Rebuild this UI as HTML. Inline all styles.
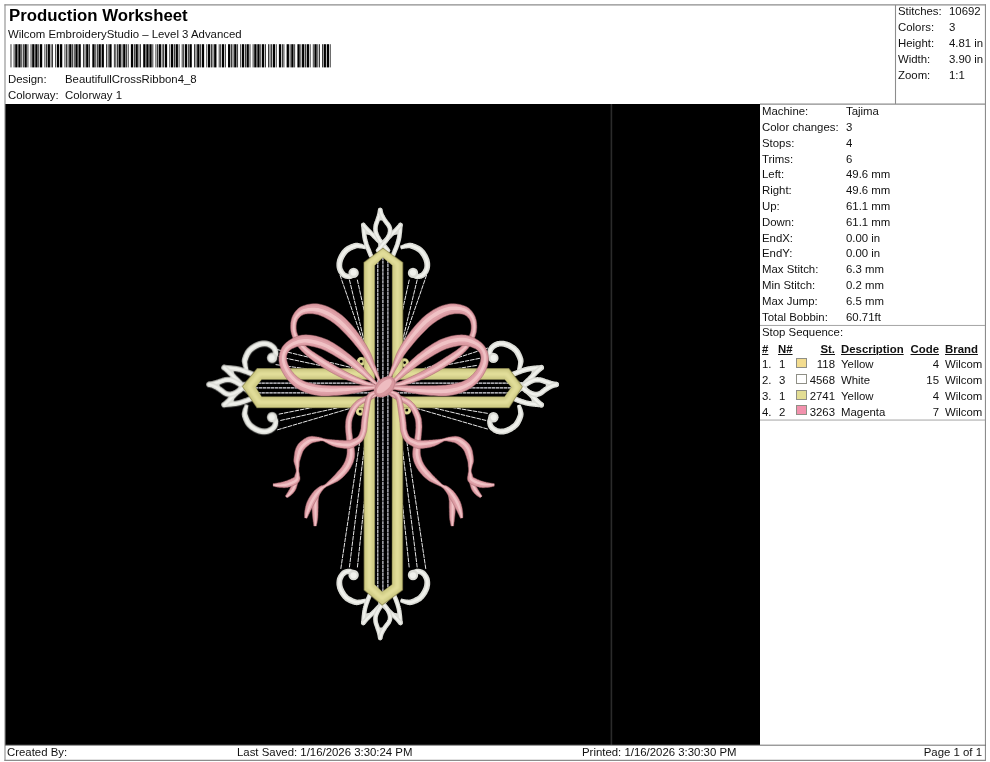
<!DOCTYPE html>
<html><head><meta charset="utf-8"><title>Production Worksheet</title>
<style>
html,body{margin:0;padding:0;background:#fff;}
html{width:990px;height:762px;overflow:hidden;}
body{width:990px;height:762px;position:relative;overflow:hidden;font-family:"Liberation Sans",sans-serif;color:#111;}
.t{position:absolute;will-change:transform;-webkit-font-smoothing:antialiased;font-size:11.4px;line-height:20px;height:20px;white-space:nowrap;letter-spacing:0;}
.t.r{width:200px;text-align:right;}
.t.title{font-size:16.8px;font-weight:bold;color:#000;}
.t.b{font-weight:bold;}
.t.u{text-decoration:underline;text-decoration-thickness:1px;text-underline-offset:1px;}
.ln{position:absolute;background:#8a8a8a;}
.sw{position:absolute;width:8.8px;height:8px;border:1px solid #8f8f86;}
#black{position:absolute;left:5px;top:104px;width:755px;height:641px;background:#000;}
svg{position:absolute;left:0;top:0;}
</style></head><body>
<div id="black"></div>
<svg width="990" height="762" viewBox="0 0 990 762">
<g fill="#000"><rect x="10.600" y="44.20" width="0.771" height="23.20"/><rect x="13.684" y="44.20" width="0.771" height="23.20"/><rect x="15.226" y="44.20" width="2.313" height="23.20"/><rect x="18.310" y="44.20" width="2.313" height="23.20"/><rect x="21.394" y="44.20" width="0.771" height="23.20"/><rect x="22.936" y="44.20" width="0.771" height="23.20"/><rect x="24.478" y="44.20" width="2.313" height="23.20"/><rect x="27.562" y="44.20" width="0.771" height="23.20"/><rect x="30.646" y="44.20" width="0.771" height="23.20"/><rect x="32.188" y="44.20" width="2.313" height="23.20"/><rect x="35.272" y="44.20" width="2.313" height="23.20"/><rect x="38.356" y="44.20" width="0.771" height="23.20"/><rect x="39.898" y="44.20" width="2.313" height="23.20"/><rect x="44.524" y="44.20" width="0.771" height="23.20"/><rect x="46.066" y="44.20" width="0.771" height="23.20"/><rect x="47.608" y="44.20" width="2.313" height="23.20"/><rect x="50.692" y="44.20" width="0.771" height="23.20"/><rect x="52.234" y="44.20" width="0.771" height="23.20"/><rect x="55.318" y="44.20" width="0.771" height="23.20"/><rect x="56.860" y="44.20" width="2.313" height="23.20"/><rect x="59.944" y="44.20" width="2.313" height="23.20"/><rect x="64.570" y="44.20" width="0.771" height="23.20"/><rect x="66.112" y="44.20" width="0.771" height="23.20"/><rect x="67.654" y="44.20" width="0.771" height="23.20"/><rect x="69.196" y="44.20" width="2.313" height="23.20"/><rect x="72.280" y="44.20" width="0.771" height="23.20"/><rect x="73.822" y="44.20" width="0.771" height="23.20"/><rect x="75.364" y="44.20" width="2.313" height="23.20"/><rect x="78.448" y="44.20" width="2.313" height="23.20"/><rect x="83.074" y="44.20" width="0.771" height="23.20"/><rect x="84.616" y="44.20" width="0.771" height="23.20"/><rect x="86.158" y="44.20" width="2.313" height="23.20"/><rect x="89.242" y="44.20" width="0.771" height="23.20"/><rect x="92.326" y="44.20" width="2.313" height="23.20"/><rect x="95.410" y="44.20" width="0.771" height="23.20"/><rect x="96.952" y="44.20" width="0.771" height="23.20"/><rect x="98.494" y="44.20" width="2.313" height="23.20"/><rect x="101.578" y="44.20" width="2.313" height="23.20"/><rect x="106.204" y="44.20" width="0.771" height="23.20"/><rect x="107.746" y="44.20" width="0.771" height="23.20"/><rect x="109.288" y="44.20" width="2.313" height="23.20"/><rect x="113.914" y="44.20" width="0.771" height="23.20"/><rect x="115.456" y="44.20" width="0.771" height="23.20"/><rect x="116.998" y="44.20" width="0.771" height="23.20"/><rect x="118.540" y="44.20" width="2.313" height="23.20"/><rect x="121.624" y="44.20" width="0.771" height="23.20"/><rect x="123.166" y="44.20" width="2.313" height="23.20"/><rect x="126.250" y="44.20" width="0.771" height="23.20"/><rect x="127.792" y="44.20" width="0.771" height="23.20"/><rect x="130.876" y="44.20" width="2.313" height="23.20"/><rect x="133.960" y="44.20" width="0.771" height="23.20"/><rect x="135.502" y="44.20" width="2.313" height="23.20"/><rect x="138.586" y="44.20" width="0.771" height="23.20"/><rect x="140.128" y="44.20" width="0.771" height="23.20"/><rect x="143.212" y="44.20" width="2.313" height="23.20"/><rect x="146.296" y="44.20" width="2.313" height="23.20"/><rect x="149.380" y="44.20" width="2.313" height="23.20"/><rect x="152.464" y="44.20" width="0.771" height="23.20"/><rect x="155.548" y="44.20" width="0.771" height="23.20"/><rect x="157.090" y="44.20" width="0.771" height="23.20"/><rect x="158.632" y="44.20" width="2.313" height="23.20"/><rect x="161.716" y="44.20" width="0.771" height="23.20"/><rect x="163.258" y="44.20" width="0.771" height="23.20"/><rect x="164.800" y="44.20" width="2.313" height="23.20"/><rect x="169.426" y="44.20" width="0.771" height="23.20"/><rect x="170.968" y="44.20" width="2.313" height="23.20"/><rect x="174.052" y="44.20" width="0.771" height="23.20"/><rect x="175.594" y="44.20" width="2.313" height="23.20"/><rect x="178.678" y="44.20" width="0.771" height="23.20"/><rect x="181.762" y="44.20" width="0.771" height="23.20"/><rect x="183.304" y="44.20" width="0.771" height="23.20"/><rect x="184.846" y="44.20" width="2.313" height="23.20"/><rect x="187.930" y="44.20" width="0.771" height="23.20"/><rect x="189.472" y="44.20" width="2.313" height="23.20"/><rect x="194.098" y="44.20" width="0.771" height="23.20"/><rect x="195.640" y="44.20" width="0.771" height="23.20"/><rect x="197.182" y="44.20" width="2.313" height="23.20"/><rect x="200.266" y="44.20" width="0.771" height="23.20"/><rect x="201.808" y="44.20" width="2.313" height="23.20"/><rect x="206.434" y="44.20" width="0.771" height="23.20"/><rect x="207.976" y="44.20" width="2.313" height="23.20"/><rect x="211.060" y="44.20" width="0.771" height="23.20"/><rect x="212.602" y="44.20" width="0.771" height="23.20"/><rect x="214.144" y="44.20" width="2.313" height="23.20"/><rect x="218.770" y="44.20" width="0.771" height="23.20"/><rect x="220.312" y="44.20" width="0.771" height="23.20"/><rect x="221.854" y="44.20" width="2.313" height="23.20"/><rect x="224.938" y="44.20" width="0.771" height="23.20"/><rect x="228.022" y="44.20" width="2.313" height="23.20"/><rect x="231.106" y="44.20" width="0.771" height="23.20"/><rect x="232.648" y="44.20" width="0.771" height="23.20"/><rect x="234.190" y="44.20" width="2.313" height="23.20"/><rect x="237.274" y="44.20" width="0.771" height="23.20"/><rect x="240.358" y="44.20" width="0.771" height="23.20"/><rect x="241.900" y="44.20" width="2.313" height="23.20"/><rect x="244.984" y="44.20" width="0.771" height="23.20"/><rect x="246.526" y="44.20" width="2.313" height="23.20"/><rect x="249.610" y="44.20" width="0.771" height="23.20"/><rect x="252.694" y="44.20" width="0.771" height="23.20"/><rect x="254.236" y="44.20" width="2.313" height="23.20"/><rect x="257.320" y="44.20" width="2.313" height="23.20"/><rect x="260.404" y="44.20" width="0.771" height="23.20"/><rect x="261.946" y="44.20" width="2.313" height="23.20"/><rect x="265.030" y="44.20" width="0.771" height="23.20"/><rect x="268.114" y="44.20" width="0.771" height="23.20"/><rect x="269.656" y="44.20" width="0.771" height="23.20"/><rect x="271.198" y="44.20" width="0.771" height="23.20"/><rect x="272.740" y="44.20" width="2.313" height="23.20"/><rect x="275.824" y="44.20" width="0.771" height="23.20"/><rect x="278.908" y="44.20" width="2.313" height="23.20"/><rect x="281.992" y="44.20" width="0.771" height="23.20"/><rect x="283.534" y="44.20" width="0.771" height="23.20"/><rect x="286.618" y="44.20" width="2.313" height="23.20"/><rect x="289.702" y="44.20" width="0.771" height="23.20"/><rect x="291.244" y="44.20" width="2.313" height="23.20"/><rect x="294.328" y="44.20" width="0.771" height="23.20"/><rect x="297.412" y="44.20" width="2.313" height="23.20"/><rect x="300.496" y="44.20" width="0.771" height="23.20"/><rect x="302.038" y="44.20" width="2.313" height="23.20"/><rect x="305.122" y="44.20" width="0.771" height="23.20"/><rect x="306.664" y="44.20" width="2.313" height="23.20"/><rect x="309.748" y="44.20" width="0.771" height="23.20"/><rect x="312.832" y="44.20" width="0.771" height="23.20"/><rect x="314.374" y="44.20" width="2.313" height="23.20"/><rect x="317.458" y="44.20" width="0.771" height="23.20"/><rect x="319.000" y="44.20" width="0.771" height="23.20"/><rect x="322.084" y="44.20" width="0.771" height="23.20"/><rect x="323.626" y="44.20" width="2.313" height="23.20"/><rect x="326.710" y="44.20" width="2.313" height="23.20"/><rect x="329.794" y="44.20" width="0.771" height="23.20"/></g>
<rect x="610.6" y="104" width="1.6" height="641" fill="#2b2b2b"/>
<g stroke="#8c8c8c" stroke-width="1.1" fill="none">
<path d="M4.4 4.85H986"/><path d="M5 4.4V761"/><path d="M985.45 4.4V761"/><path d="M4.4 760.4H986"/>
<path d="M895.5 5V104"/><path d="M760 104.15H986"/>
</g>
<path d="M5 745.2H986" stroke="#6e6e6e" stroke-width="1"/>
<path d="M760 325.45H985M760 420.05H985" stroke="#a4a4a4" stroke-width="1"/>
<defs><filter id="soft" x="-5%" y="-5%" width="110%" height="110%"><feGaussianBlur stdDeviation="0.5"/></filter><filter id="sheen" x="-5%" y="-5%" width="110%" height="110%"><feGaussianBlur stdDeviation="1.1"/></filter></defs>
<g filter="url(#soft)">
<path d="M340.0 275.0 L372.0 367.7 M349.4 279.7 L370.0 365.5 M357.3 279.7 L372.0 346.0 M426.6 275.0 L394.6 367.7 M417.2 279.7 L396.6 365.5 M409.3 279.7 L394.6 346.0 M277.2 349.6 L366.0 371.1 M278.7 356.7 L366.0 375.2 M275.6 364.6 L335.0 372.7 M278.7 414.2 L335.0 403.0 M280.3 420.5 L366.0 401.6 M277.2 429.9 L366.0 403.7 M487.8 348.0 L400.0 376.2 M479.9 358.3 L400.0 374.2 M476.8 365.4 L430.0 373.0 M487.8 429.1 L400.0 403.5 M486.2 420.5 L400.0 399.8 M487.8 413.4 L430.0 403.8 M340.8 568.9 L364.2 412.0 M349.4 567.4 L368.8 412.0 M357.4 567.4 L373.9 412.0 M425.8 568.9 L402.4 412.0 M417.2 567.4 L397.8 412.0 M409.2 567.4 L392.7 412.0" stroke="#e6e6e6" stroke-width="1.0" fill="none" stroke-dasharray="4.6 0.8"/>
<g><path d="M366.5 245.8 L366.2 245.6 L365.8 245.5 L365.2 245.2 L364.6 245.0 L364.0 244.7 L363.3 244.4 L362.5 244.1 L361.8 243.8 L361.1 243.6 L360.4 243.4 L359.9 243.3 L359.4 243.2 L358.9 243.0 L358.4 242.9 L357.8 242.8 L357.1 242.7 L356.4 242.7 L355.6 242.8 L354.8 242.9 L353.9 243.1 L353.1 243.4 L352.2 243.7 L351.2 244.1 L350.2 244.5 L349.1 245.0 L348.1 245.5 L347.0 246.1 L345.9 246.7 L344.9 247.5 L344.0 248.3 L343.1 249.2 L342.3 250.1 L341.5 251.1 L340.8 252.1 L340.1 253.2 L339.4 254.2 L338.9 255.3 L338.3 256.4 L337.9 257.4 L337.5 258.5 L337.1 259.5 L336.9 260.6 L336.7 261.6 L336.5 262.6 L336.4 263.7 L336.4 264.7 L336.4 265.7 L336.5 266.7 L336.6 267.7 L336.8 268.6 L337.0 269.6 L337.4 270.6 L337.8 271.5 L338.2 272.4 L338.7 273.2 L339.3 274.0 L339.8 274.7 L340.4 275.4 L341.0 276.1 L341.6 276.7 L342.4 277.3 L343.1 277.7 L343.9 278.1 L344.7 278.4 L345.4 278.7 L346.2 278.8 L346.9 279.0 L347.5 279.1 L348.2 279.1 L348.8 279.2 L349.5 279.2 L350.3 279.1 L351.0 278.9 L351.6 278.7 L352.1 278.5 L352.6 278.3 L353.0 278.1 L353.3 278.0 L353.5 277.9 L353.7 277.8 L352.3 273.4 L352.0 273.5 L351.6 273.6 L351.3 273.7 L350.9 273.8 L350.6 273.9 L350.2 274.0 L349.9 274.0 L349.6 274.1 L349.4 274.0 L349.2 274.0 L348.8 273.9 L348.4 273.9 L347.9 273.7 L347.5 273.6 L347.0 273.5 L346.6 273.3 L346.2 273.1 L345.9 272.9 L345.6 272.7 L345.4 272.5 L345.1 272.2 L344.7 271.8 L344.3 271.3 L343.9 270.8 L343.6 270.2 L343.3 269.6 L343.0 269.0 L342.7 268.5 L342.6 267.9 L342.4 267.4 L342.3 266.8 L342.3 266.2 L342.2 265.5 L342.3 264.8 L342.3 264.1 L342.4 263.4 L342.5 262.7 L342.7 262.0 L342.9 261.2 L343.1 260.5 L343.4 259.8 L343.8 258.9 L344.2 258.1 L344.7 257.2 L345.2 256.3 L345.8 255.5 L346.3 254.7 L346.9 253.9 L347.5 253.3 L348.0 252.7 L348.6 252.2 L349.3 251.7 L350.1 251.2 L350.9 250.8 L351.7 250.3 L352.6 249.9 L353.4 249.5 L354.3 249.2 L355.0 248.9 L355.7 248.7 L356.2 248.5 L356.5 248.4 L356.8 248.3 L357.1 248.3 L357.4 248.2 L357.7 248.2 L358.0 248.2 L358.5 248.3 L359.0 248.3 L359.6 248.4 L360.1 248.4 L360.7 248.5 L361.3 248.6 L362.0 248.7 L362.7 248.8 L363.4 249.0 L364.0 249.1 L364.6 249.2 L365.1 249.3 L365.5 249.4Z" fill="#dadbd5"/>
<path d="M366.2 246.8 L365.9 246.7 L365.4 246.5 L364.9 246.3 L364.3 246.1 L363.6 245.8 L362.9 245.6 L362.2 245.3 L361.5 245.1 L360.8 244.9 L360.2 244.8 L359.7 244.7 L359.2 244.6 L358.7 244.5 L358.2 244.4 L357.7 244.3 L357.1 244.2 L356.5 244.2 L355.8 244.3 L355.1 244.5 L354.4 244.7 L353.6 244.9 L352.8 245.2 L351.8 245.6 L350.9 246.0 L349.9 246.4 L348.8 246.9 L347.8 247.5 L346.9 248.1 L345.9 248.8 L345.1 249.5 L344.3 250.3 L343.5 251.2 L342.8 252.1 L342.1 253.0 L341.5 254.0 L340.9 255.1 L340.3 256.1 L339.8 257.1 L339.4 258.1 L339.0 259.0 L338.7 260.0 L338.5 260.9 L338.3 261.9 L338.1 262.9 L338.0 263.8 L338.0 264.7 L338.0 265.7 L338.1 266.5 L338.2 267.4 L338.3 268.3 L338.6 269.1 L338.9 270.0 L339.2 270.8 L339.6 271.6 L340.1 272.4 L340.5 273.1 L341.1 273.8 L341.6 274.4 L342.1 275.0 L342.7 275.5 L343.3 276.0 L343.9 276.4 L344.6 276.8 L345.2 277.0 L345.9 277.2 L346.5 277.4 L347.2 277.5 L347.8 277.6 L348.4 277.7 L348.9 277.8 L349.5 277.8 L350.1 277.7 L350.7 277.6 L351.2 277.4 L351.7 277.3 L352.1 277.1 L352.5 276.9 L352.9 276.8 L353.1 276.7 L353.3 276.6 L352.7 274.6 L352.4 274.7 L352.1 274.8 L351.7 274.9 L351.4 275.1 L351.0 275.2 L350.6 275.3 L350.2 275.4 L349.8 275.4 L349.4 275.5 L349.1 275.4 L348.7 275.4 L348.2 275.3 L347.6 275.2 L347.1 275.1 L346.6 274.9 L346.1 274.7 L345.6 274.5 L345.1 274.3 L344.7 274.0 L344.3 273.7 L343.9 273.3 L343.5 272.8 L343.1 272.2 L342.7 271.7 L342.3 271.0 L341.9 270.4 L341.6 269.7 L341.3 269.0 L341.0 268.4 L340.9 267.7 L340.8 267.0 L340.7 266.3 L340.6 265.6 L340.6 264.8 L340.7 264.0 L340.8 263.2 L340.9 262.4 L341.1 261.6 L341.3 260.8 L341.6 260.0 L341.9 259.1 L342.3 258.2 L342.7 257.3 L343.3 256.4 L343.8 255.5 L344.4 254.6 L345.0 253.7 L345.6 252.9 L346.3 252.1 L346.9 251.5 L347.6 250.9 L348.4 250.3 L349.2 249.8 L350.1 249.3 L351.0 248.8 L351.9 248.4 L352.8 248.0 L353.7 247.7 L354.5 247.4 L355.2 247.1 L355.8 247.0 L356.3 246.8 L356.7 246.8 L357.1 246.7 L357.5 246.7 L357.9 246.8 L358.3 246.8 L358.8 246.9 L359.3 246.9 L359.8 247.0 L360.4 247.1 L361.0 247.2 L361.7 247.3 L362.3 247.5 L363.0 247.7 L363.7 247.9 L364.3 248.0 L364.9 248.2 L365.4 248.3 L365.8 248.4Z" fill="#f0f1ec"/>
<circle cx="353.6" cy="272.9" r="5.2" fill="#dadbd5"/>
<circle cx="353.6" cy="272.6" r="3.1" fill="#f0f1ec"/>
<path d="M401.1 249.4 L401.5 249.3 L402.0 249.2 L402.6 249.1 L403.2 249.0 L403.9 248.8 L404.6 248.7 L405.3 248.6 L405.9 248.5 L406.5 248.4 L407.0 248.4 L407.6 248.3 L408.1 248.3 L408.6 248.2 L408.9 248.2 L409.2 248.2 L409.5 248.3 L409.8 248.3 L410.1 248.4 L410.4 248.5 L410.9 248.7 L411.6 248.9 L412.3 249.2 L413.2 249.5 L414.0 249.9 L414.9 250.3 L415.7 250.8 L416.5 251.2 L417.3 251.7 L418.0 252.2 L418.6 252.7 L419.1 253.3 L419.7 253.9 L420.3 254.7 L420.8 255.5 L421.4 256.3 L421.9 257.2 L422.4 258.1 L422.8 258.9 L423.2 259.8 L423.5 260.5 L423.7 261.2 L423.9 262.0 L424.1 262.7 L424.2 263.4 L424.3 264.1 L424.3 264.8 L424.4 265.5 L424.3 266.2 L424.3 266.8 L424.2 267.4 L424.0 267.9 L423.9 268.5 L423.6 269.0 L423.3 269.6 L423.0 270.2 L422.7 270.8 L422.3 271.3 L421.9 271.8 L421.5 272.2 L421.2 272.5 L421.0 272.7 L420.7 272.9 L420.4 273.1 L420.0 273.3 L419.6 273.5 L419.1 273.6 L418.7 273.7 L418.2 273.9 L417.8 273.9 L417.4 274.0 L417.2 274.0 L417.0 274.1 L416.7 274.0 L416.4 274.0 L416.0 273.9 L415.7 273.8 L415.3 273.7 L415.0 273.6 L414.6 273.5 L414.3 273.4 L412.9 277.8 L413.1 277.9 L413.3 278.0 L413.6 278.1 L414.0 278.3 L414.5 278.5 L415.0 278.7 L415.6 278.9 L416.3 279.1 L417.1 279.2 L417.8 279.2 L418.4 279.1 L419.1 279.1 L419.7 279.0 L420.4 278.8 L421.2 278.7 L421.9 278.4 L422.7 278.1 L423.5 277.7 L424.2 277.3 L425.0 276.7 L425.6 276.1 L426.2 275.4 L426.8 274.7 L427.3 274.0 L427.9 273.2 L428.4 272.4 L428.8 271.5 L429.2 270.6 L429.6 269.6 L429.8 268.6 L430.0 267.7 L430.1 266.7 L430.2 265.7 L430.2 264.7 L430.2 263.7 L430.1 262.6 L429.9 261.6 L429.7 260.6 L429.5 259.5 L429.1 258.5 L428.7 257.4 L428.3 256.4 L427.7 255.3 L427.2 254.2 L426.5 253.2 L425.8 252.1 L425.1 251.1 L424.3 250.1 L423.5 249.2 L422.6 248.3 L421.7 247.5 L420.7 246.7 L419.6 246.1 L418.5 245.5 L417.5 245.0 L416.4 244.5 L415.4 244.1 L414.4 243.7 L413.5 243.4 L412.7 243.1 L411.8 242.9 L411.0 242.8 L410.2 242.7 L409.5 242.7 L408.8 242.8 L408.2 242.9 L407.7 243.0 L407.2 243.2 L406.7 243.3 L406.2 243.4 L405.5 243.6 L404.8 243.8 L404.1 244.1 L403.3 244.4 L402.6 244.7 L402.0 245.0 L401.4 245.2 L400.8 245.5 L400.4 245.6 L400.1 245.8Z" fill="#dadbd5"/>
<path d="M400.8 248.4 L401.2 248.3 L401.7 248.2 L402.3 248.0 L402.9 247.9 L403.6 247.7 L404.3 247.5 L404.9 247.3 L405.6 247.2 L406.2 247.1 L406.8 247.0 L407.3 246.9 L407.8 246.9 L408.3 246.8 L408.7 246.8 L409.1 246.7 L409.5 246.7 L409.9 246.8 L410.3 246.8 L410.8 247.0 L411.4 247.1 L412.1 247.4 L412.9 247.7 L413.8 248.0 L414.7 248.4 L415.6 248.8 L416.5 249.3 L417.4 249.8 L418.2 250.3 L419.0 250.9 L419.7 251.5 L420.3 252.1 L421.0 252.9 L421.6 253.7 L422.2 254.6 L422.8 255.5 L423.3 256.4 L423.9 257.3 L424.3 258.2 L424.7 259.1 L425.0 260.0 L425.3 260.8 L425.5 261.6 L425.7 262.4 L425.8 263.2 L425.9 264.0 L426.0 264.8 L426.0 265.6 L425.9 266.3 L425.8 267.0 L425.7 267.7 L425.6 268.4 L425.3 269.0 L425.0 269.7 L424.7 270.4 L424.3 271.0 L423.9 271.7 L423.5 272.2 L423.1 272.8 L422.7 273.3 L422.3 273.7 L421.9 274.0 L421.5 274.3 L421.0 274.5 L420.5 274.7 L420.0 274.9 L419.5 275.1 L419.0 275.2 L418.4 275.3 L417.9 275.4 L417.5 275.4 L417.2 275.5 L416.8 275.4 L416.4 275.4 L416.0 275.3 L415.6 275.2 L415.2 275.1 L414.9 274.9 L414.5 274.8 L414.2 274.7 L413.9 274.6 L413.3 276.6 L413.5 276.7 L413.7 276.8 L414.1 276.9 L414.5 277.1 L414.9 277.3 L415.4 277.4 L415.9 277.6 L416.5 277.7 L417.1 277.8 L417.7 277.8 L418.2 277.7 L418.8 277.6 L419.4 277.5 L420.1 277.4 L420.7 277.2 L421.4 277.0 L422.0 276.8 L422.7 276.4 L423.3 276.0 L423.9 275.5 L424.5 275.0 L425.0 274.4 L425.5 273.8 L426.1 273.1 L426.5 272.4 L427.0 271.6 L427.4 270.8 L427.7 270.0 L428.0 269.1 L428.3 268.3 L428.4 267.4 L428.5 266.5 L428.6 265.7 L428.6 264.7 L428.6 263.8 L428.5 262.9 L428.3 261.9 L428.1 260.9 L427.9 260.0 L427.6 259.0 L427.2 258.1 L426.8 257.1 L426.3 256.1 L425.7 255.1 L425.1 254.0 L424.5 253.0 L423.8 252.1 L423.1 251.2 L422.3 250.3 L421.5 249.5 L420.7 248.8 L419.7 248.1 L418.8 247.5 L417.8 246.9 L416.7 246.4 L415.7 246.0 L414.8 245.6 L413.8 245.2 L413.0 244.9 L412.2 244.7 L411.5 244.5 L410.8 244.3 L410.1 244.2 L409.5 244.2 L408.9 244.3 L408.4 244.4 L407.9 244.5 L407.4 244.6 L406.9 244.7 L406.4 244.8 L405.8 244.9 L405.1 245.1 L404.4 245.3 L403.7 245.6 L403.0 245.8 L402.3 246.1 L401.7 246.3 L401.2 246.5 L400.7 246.7 L400.4 246.8Z" fill="#f0f1ec"/>
<circle cx="413.0" cy="272.9" r="5.2" fill="#dadbd5"/>
<circle cx="413.0" cy="272.6" r="3.1" fill="#f0f1ec"/>
<path d="M363.3 225.0 L364.2 234.1 L373.9 236.0 L367.5 229.7Z" fill="#dadbd5"/>
<path d="M400.5 225.0 L399.6 234.1 L389.9 236.0 L396.3 229.7Z" fill="#dadbd5"/>
<path d="M380.2 210.0 L379.2 215.0 L377.4 220.5 L385.0 220.5 L381.8 215.0Z" fill="#dadbd5"/>
<path d="M363.3 225.0 L363.4 225.7 L363.5 226.7 L363.6 227.9 L363.7 229.1 L363.8 230.5 L363.9 231.8 L364.1 233.0 L364.2 234.1 L364.3 235.0 L364.4 235.9 L364.5 236.7 L364.6 237.4 L364.8 238.2 L364.9 238.9 L365.1 239.7 L365.3 240.6 L365.6 241.5 L365.9 242.5 L366.2 243.5 L366.5 244.5 L366.9 245.6 L367.3 246.6 L367.6 247.6 L368.0 248.5 L368.4 249.4 L368.8 250.4 L369.2 251.4 L369.6 252.4 L370.0 253.3 L370.3 254.1 L370.6 254.8 L370.8 255.3" fill="none" stroke="#dadbd5" stroke-width="4.6" stroke-linecap="round" stroke-linejoin="round"/><path d="M363.3 225.0 L363.4 225.7 L363.5 226.7 L363.6 227.9 L363.7 229.1 L363.8 230.5 L363.9 231.8 L364.1 233.0 L364.2 234.1 L364.3 235.0 L364.4 235.9 L364.5 236.7 L364.6 237.4 L364.8 238.2 L364.9 238.9 L365.1 239.7 L365.3 240.6 L365.6 241.5 L365.9 242.5 L366.2 243.5 L366.5 244.5 L366.9 245.6 L367.3 246.6 L367.6 247.6 L368.0 248.5 L368.4 249.4 L368.8 250.4 L369.2 251.4 L369.6 252.4 L370.0 253.3 L370.3 254.1 L370.6 254.8 L370.8 255.3" fill="none" stroke="#f0f1ec" stroke-width="2.1" stroke-linecap="round"/>
<path d="M363.3 225.0 L363.6 225.4 L364.0 225.8 L364.5 226.3 L365.0 227.0 L365.6 227.6 L366.2 228.3 L366.8 229.0 L367.5 229.7 L368.2 230.4 L369.0 231.2 L369.8 232.0 L370.6 232.8 L371.4 233.6 L372.3 234.4 L373.1 235.2 L373.9 236.0 L374.7 236.8 L375.5 237.6 L376.3 238.4 L377.0 239.2 L377.8 240.0 L378.5 240.7 L379.2 241.4 L379.8 242.0 L380.4 242.6 L380.9 243.1 L381.5 243.5 L382.0 244.0 L382.4 244.4 L382.8 244.7 L383.1 245.0 L383.4 245.2" fill="none" stroke="#dadbd5" stroke-width="4.6" stroke-linecap="round" stroke-linejoin="round"/><path d="M363.3 225.0 L363.6 225.4 L364.0 225.8 L364.5 226.3 L365.0 227.0 L365.6 227.6 L366.2 228.3 L366.8 229.0 L367.5 229.7 L368.2 230.4 L369.0 231.2 L369.8 232.0 L370.6 232.8 L371.4 233.6 L372.3 234.4 L373.1 235.2 L373.9 236.0 L374.7 236.8 L375.5 237.6 L376.3 238.4 L377.0 239.2 L377.8 240.0 L378.5 240.7 L379.2 241.4 L379.8 242.0 L380.4 242.6 L380.9 243.1 L381.5 243.5 L382.0 244.0 L382.4 244.4 L382.8 244.7 L383.1 245.0 L383.4 245.2" fill="none" stroke="#f0f1ec" stroke-width="2.1" stroke-linecap="round"/>
<path d="M400.5 225.0 L400.4 225.7 L400.3 226.7 L400.2 227.9 L400.1 229.1 L400.0 230.5 L399.9 231.8 L399.7 233.0 L399.6 234.1 L399.5 235.0 L399.4 235.9 L399.3 236.7 L399.2 237.4 L399.0 238.2 L398.9 238.9 L398.7 239.7 L398.5 240.6 L398.2 241.5 L397.9 242.5 L397.6 243.5 L397.3 244.5 L396.9 245.6 L396.5 246.6 L396.2 247.6 L395.8 248.5 L395.4 249.4 L395.0 250.4 L394.6 251.4 L394.2 252.4 L393.8 253.3 L393.5 254.1 L393.2 254.8 L393.0 255.3" fill="none" stroke="#dadbd5" stroke-width="4.6" stroke-linecap="round" stroke-linejoin="round"/><path d="M400.5 225.0 L400.4 225.7 L400.3 226.7 L400.2 227.9 L400.1 229.1 L400.0 230.5 L399.9 231.8 L399.7 233.0 L399.6 234.1 L399.5 235.0 L399.4 235.9 L399.3 236.7 L399.2 237.4 L399.0 238.2 L398.9 238.9 L398.7 239.7 L398.5 240.6 L398.2 241.5 L397.9 242.5 L397.6 243.5 L397.3 244.5 L396.9 245.6 L396.5 246.6 L396.2 247.6 L395.8 248.5 L395.4 249.4 L395.0 250.4 L394.6 251.4 L394.2 252.4 L393.8 253.3 L393.5 254.1 L393.2 254.8 L393.0 255.3" fill="none" stroke="#f0f1ec" stroke-width="2.1" stroke-linecap="round"/>
<path d="M400.5 225.0 L400.2 225.4 L399.8 225.8 L399.3 226.3 L398.8 227.0 L398.2 227.6 L397.6 228.3 L397.0 229.0 L396.3 229.7 L395.6 230.4 L394.8 231.2 L394.0 232.0 L393.2 232.8 L392.4 233.6 L391.5 234.4 L390.7 235.2 L389.9 236.0 L389.1 236.8 L388.3 237.6 L387.5 238.4 L386.8 239.2 L386.0 240.0 L385.3 240.7 L384.6 241.4 L384.0 242.0 L383.4 242.6 L382.9 243.1 L382.3 243.5 L381.8 244.0 L381.4 244.4 L381.0 244.7 L380.7 245.0 L380.4 245.2" fill="none" stroke="#dadbd5" stroke-width="4.6" stroke-linecap="round" stroke-linejoin="round"/><path d="M400.5 225.0 L400.2 225.4 L399.8 225.8 L399.3 226.3 L398.8 227.0 L398.2 227.6 L397.6 228.3 L397.0 229.0 L396.3 229.7 L395.6 230.4 L394.8 231.2 L394.0 232.0 L393.2 232.8 L392.4 233.6 L391.5 234.4 L390.7 235.2 L389.9 236.0 L389.1 236.8 L388.3 237.6 L387.5 238.4 L386.8 239.2 L386.0 240.0 L385.3 240.7 L384.6 241.4 L384.0 242.0 L383.4 242.6 L382.9 243.1 L382.3 243.5 L381.8 244.0 L381.4 244.4 L381.0 244.7 L380.7 245.0 L380.4 245.2" fill="none" stroke="#f0f1ec" stroke-width="2.1" stroke-linecap="round"/>
<path d="M380.2 210.0 L380.1 210.4 L380.0 210.9 L379.9 211.5 L379.8 212.2 L379.7 212.9 L379.5 213.6 L379.4 214.3 L379.2 215.0 L379.0 215.7 L378.8 216.3 L378.6 217.0 L378.4 217.7 L378.1 218.4 L377.9 219.1 L377.6 219.8 L377.4 220.5 L377.2 221.2 L376.9 222.0 L376.6 222.7 L376.4 223.5 L376.1 224.2 L375.9 225.0 L375.7 225.7 L375.6 226.5 L375.5 227.3 L375.5 228.0 L375.4 228.8 L375.5 229.6 L375.5 230.4 L375.6 231.2 L375.8 232.0 L376.0 232.8 L376.3 233.7 L376.7 234.6 L377.1 235.5 L377.6 236.5 L378.1 237.4 L378.6 238.3 L379.1 239.2 L379.6 240.0 L380.1 240.7 L380.5 241.3 L381.0 241.9 L381.4 242.5 L381.9 243.0 L382.4 243.6 L382.9 244.2 L383.4 244.8 L384.0 245.5 L384.6 246.3 L385.3 247.1 L385.9 248.0 L386.6 248.7 L387.2 249.5 L387.6 250.1 L388.0 250.5" fill="none" stroke="#dadbd5" stroke-width="4.6" stroke-linecap="round" stroke-linejoin="round"/><path d="M380.2 210.0 L380.1 210.4 L380.0 210.9 L379.9 211.5 L379.8 212.2 L379.7 212.9 L379.5 213.6 L379.4 214.3 L379.2 215.0 L379.0 215.7 L378.8 216.3 L378.6 217.0 L378.4 217.7 L378.1 218.4 L377.9 219.1 L377.6 219.8 L377.4 220.5 L377.2 221.2 L376.9 222.0 L376.6 222.7 L376.4 223.5 L376.1 224.2 L375.9 225.0 L375.7 225.7 L375.6 226.5 L375.5 227.3 L375.5 228.0 L375.4 228.8 L375.5 229.6 L375.5 230.4 L375.6 231.2 L375.8 232.0 L376.0 232.8 L376.3 233.7 L376.7 234.6 L377.1 235.5 L377.6 236.5 L378.1 237.4 L378.6 238.3 L379.1 239.2 L379.6 240.0 L380.1 240.7 L380.5 241.3 L381.0 241.9 L381.4 242.5 L381.9 243.0 L382.4 243.6 L382.9 244.2 L383.4 244.8 L384.0 245.5 L384.6 246.3 L385.3 247.1 L385.9 248.0 L386.6 248.7 L387.2 249.5 L387.6 250.1 L388.0 250.5" fill="none" stroke="#f0f1ec" stroke-width="2.1" stroke-linecap="round"/>
<path d="M380.2 210.0 L380.3 210.4 L380.4 210.9 L380.6 211.5 L380.8 212.2 L381.0 212.9 L381.2 213.6 L381.5 214.3 L381.8 215.0 L382.1 215.7 L382.5 216.3 L382.8 217.0 L383.2 217.7 L383.6 218.3 L384.1 219.0 L384.5 219.8 L385.0 220.5 L385.5 221.3 L386.1 222.0 L386.7 222.9 L387.4 223.7 L388.0 224.5 L388.6 225.3 L389.0 226.1 L389.4 226.9 L389.7 227.7 L389.9 228.4 L390.0 229.1 L390.1 229.8 L390.1 230.5 L390.1 231.2 L390.0 232.0 L389.8 232.8 L389.6 233.7 L389.3 234.6 L388.9 235.5 L388.4 236.5 L388.0 237.4 L387.5 238.3 L387.0 239.2 L386.5 240.0 L386.0 240.7 L385.5 241.3 L385.0 241.9 L384.5 242.5 L384.0 243.0 L383.5 243.6 L382.9 244.2 L382.4 244.8 L381.8 245.5 L381.2 246.3 L380.6 247.1 L379.9 248.0 L379.3 248.7 L378.8 249.5 L378.3 250.1 L378.0 250.5" fill="none" stroke="#dadbd5" stroke-width="4.6" stroke-linecap="round" stroke-linejoin="round"/><path d="M380.2 210.0 L380.3 210.4 L380.4 210.9 L380.6 211.5 L380.8 212.2 L381.0 212.9 L381.2 213.6 L381.5 214.3 L381.8 215.0 L382.1 215.7 L382.5 216.3 L382.8 217.0 L383.2 217.7 L383.6 218.3 L384.1 219.0 L384.5 219.8 L385.0 220.5 L385.5 221.3 L386.1 222.0 L386.7 222.9 L387.4 223.7 L388.0 224.5 L388.6 225.3 L389.0 226.1 L389.4 226.9 L389.7 227.7 L389.9 228.4 L390.0 229.1 L390.1 229.8 L390.1 230.5 L390.1 231.2 L390.0 232.0 L389.8 232.8 L389.6 233.7 L389.3 234.6 L388.9 235.5 L388.4 236.5 L388.0 237.4 L387.5 238.3 L387.0 239.2 L386.5 240.0 L386.0 240.7 L385.5 241.3 L385.0 241.9 L384.5 242.5 L384.0 243.0 L383.5 243.6 L382.9 244.2 L382.4 244.8 L381.8 245.5 L381.2 246.3 L380.6 247.1 L379.9 248.0 L379.3 248.7 L378.8 249.5 L378.3 250.1 L378.0 250.5" fill="none" stroke="#f0f1ec" stroke-width="2.1" stroke-linecap="round"/></g>
<g transform="matrix(1 0 0 -1 0 847.9)"><path d="M366.5 245.8 L366.2 245.6 L365.8 245.5 L365.2 245.2 L364.6 245.0 L364.0 244.7 L363.3 244.4 L362.5 244.1 L361.8 243.8 L361.1 243.6 L360.4 243.4 L359.9 243.3 L359.4 243.2 L358.9 243.0 L358.4 242.9 L357.8 242.8 L357.1 242.7 L356.4 242.7 L355.6 242.8 L354.8 242.9 L353.9 243.1 L353.1 243.4 L352.2 243.7 L351.2 244.1 L350.2 244.5 L349.1 245.0 L348.1 245.5 L347.0 246.1 L345.9 246.7 L344.9 247.5 L344.0 248.3 L343.1 249.2 L342.3 250.1 L341.5 251.1 L340.8 252.1 L340.1 253.2 L339.4 254.2 L338.9 255.3 L338.3 256.4 L337.9 257.4 L337.5 258.5 L337.1 259.5 L336.9 260.6 L336.7 261.6 L336.5 262.6 L336.4 263.7 L336.4 264.7 L336.4 265.7 L336.5 266.7 L336.6 267.7 L336.8 268.6 L337.0 269.6 L337.4 270.6 L337.8 271.5 L338.2 272.4 L338.7 273.2 L339.3 274.0 L339.8 274.7 L340.4 275.4 L341.0 276.1 L341.6 276.7 L342.4 277.3 L343.1 277.7 L343.9 278.1 L344.7 278.4 L345.4 278.7 L346.2 278.8 L346.9 279.0 L347.5 279.1 L348.2 279.1 L348.8 279.2 L349.5 279.2 L350.3 279.1 L351.0 278.9 L351.6 278.7 L352.1 278.5 L352.6 278.3 L353.0 278.1 L353.3 278.0 L353.5 277.9 L353.7 277.8 L352.3 273.4 L352.0 273.5 L351.6 273.6 L351.3 273.7 L350.9 273.8 L350.6 273.9 L350.2 274.0 L349.9 274.0 L349.6 274.1 L349.4 274.0 L349.2 274.0 L348.8 273.9 L348.4 273.9 L347.9 273.7 L347.5 273.6 L347.0 273.5 L346.6 273.3 L346.2 273.1 L345.9 272.9 L345.6 272.7 L345.4 272.5 L345.1 272.2 L344.7 271.8 L344.3 271.3 L343.9 270.8 L343.6 270.2 L343.3 269.6 L343.0 269.0 L342.7 268.5 L342.6 267.9 L342.4 267.4 L342.3 266.8 L342.3 266.2 L342.2 265.5 L342.3 264.8 L342.3 264.1 L342.4 263.4 L342.5 262.7 L342.7 262.0 L342.9 261.2 L343.1 260.5 L343.4 259.8 L343.8 258.9 L344.2 258.1 L344.7 257.2 L345.2 256.3 L345.8 255.5 L346.3 254.7 L346.9 253.9 L347.5 253.3 L348.0 252.7 L348.6 252.2 L349.3 251.7 L350.1 251.2 L350.9 250.8 L351.7 250.3 L352.6 249.9 L353.4 249.5 L354.3 249.2 L355.0 248.9 L355.7 248.7 L356.2 248.5 L356.5 248.4 L356.8 248.3 L357.1 248.3 L357.4 248.2 L357.7 248.2 L358.0 248.2 L358.5 248.3 L359.0 248.3 L359.6 248.4 L360.1 248.4 L360.7 248.5 L361.3 248.6 L362.0 248.7 L362.7 248.8 L363.4 249.0 L364.0 249.1 L364.6 249.2 L365.1 249.3 L365.5 249.4Z" fill="#dadbd5"/>
<path d="M366.2 246.8 L365.9 246.7 L365.4 246.5 L364.9 246.3 L364.3 246.1 L363.6 245.8 L362.9 245.6 L362.2 245.3 L361.5 245.1 L360.8 244.9 L360.2 244.8 L359.7 244.7 L359.2 244.6 L358.7 244.5 L358.2 244.4 L357.7 244.3 L357.1 244.2 L356.5 244.2 L355.8 244.3 L355.1 244.5 L354.4 244.7 L353.6 244.9 L352.8 245.2 L351.8 245.6 L350.9 246.0 L349.9 246.4 L348.8 246.9 L347.8 247.5 L346.9 248.1 L345.9 248.8 L345.1 249.5 L344.3 250.3 L343.5 251.2 L342.8 252.1 L342.1 253.0 L341.5 254.0 L340.9 255.1 L340.3 256.1 L339.8 257.1 L339.4 258.1 L339.0 259.0 L338.7 260.0 L338.5 260.9 L338.3 261.9 L338.1 262.9 L338.0 263.8 L338.0 264.7 L338.0 265.7 L338.1 266.5 L338.2 267.4 L338.3 268.3 L338.6 269.1 L338.9 270.0 L339.2 270.8 L339.6 271.6 L340.1 272.4 L340.5 273.1 L341.1 273.8 L341.6 274.4 L342.1 275.0 L342.7 275.5 L343.3 276.0 L343.9 276.4 L344.6 276.8 L345.2 277.0 L345.9 277.2 L346.5 277.4 L347.2 277.5 L347.8 277.6 L348.4 277.7 L348.9 277.8 L349.5 277.8 L350.1 277.7 L350.7 277.6 L351.2 277.4 L351.7 277.3 L352.1 277.1 L352.5 276.9 L352.9 276.8 L353.1 276.7 L353.3 276.6 L352.7 274.6 L352.4 274.7 L352.1 274.8 L351.7 274.9 L351.4 275.1 L351.0 275.2 L350.6 275.3 L350.2 275.4 L349.8 275.4 L349.4 275.5 L349.1 275.4 L348.7 275.4 L348.2 275.3 L347.6 275.2 L347.1 275.1 L346.6 274.9 L346.1 274.7 L345.6 274.5 L345.1 274.3 L344.7 274.0 L344.3 273.7 L343.9 273.3 L343.5 272.8 L343.1 272.2 L342.7 271.7 L342.3 271.0 L341.9 270.4 L341.6 269.7 L341.3 269.0 L341.0 268.4 L340.9 267.7 L340.8 267.0 L340.7 266.3 L340.6 265.6 L340.6 264.8 L340.7 264.0 L340.8 263.2 L340.9 262.4 L341.1 261.6 L341.3 260.8 L341.6 260.0 L341.9 259.1 L342.3 258.2 L342.7 257.3 L343.3 256.4 L343.8 255.5 L344.4 254.6 L345.0 253.7 L345.6 252.9 L346.3 252.1 L346.9 251.5 L347.6 250.9 L348.4 250.3 L349.2 249.8 L350.1 249.3 L351.0 248.8 L351.9 248.4 L352.8 248.0 L353.7 247.7 L354.5 247.4 L355.2 247.1 L355.8 247.0 L356.3 246.8 L356.7 246.8 L357.1 246.7 L357.5 246.7 L357.9 246.8 L358.3 246.8 L358.8 246.9 L359.3 246.9 L359.8 247.0 L360.4 247.1 L361.0 247.2 L361.7 247.3 L362.3 247.5 L363.0 247.7 L363.7 247.9 L364.3 248.0 L364.9 248.2 L365.4 248.3 L365.8 248.4Z" fill="#f0f1ec"/>
<circle cx="353.6" cy="272.9" r="5.2" fill="#dadbd5"/>
<circle cx="353.6" cy="272.6" r="3.1" fill="#f0f1ec"/>
<path d="M401.1 249.4 L401.5 249.3 L402.0 249.2 L402.6 249.1 L403.2 249.0 L403.9 248.8 L404.6 248.7 L405.3 248.6 L405.9 248.5 L406.5 248.4 L407.0 248.4 L407.6 248.3 L408.1 248.3 L408.6 248.2 L408.9 248.2 L409.2 248.2 L409.5 248.3 L409.8 248.3 L410.1 248.4 L410.4 248.5 L410.9 248.7 L411.6 248.9 L412.3 249.2 L413.2 249.5 L414.0 249.9 L414.9 250.3 L415.7 250.8 L416.5 251.2 L417.3 251.7 L418.0 252.2 L418.6 252.7 L419.1 253.3 L419.7 253.9 L420.3 254.7 L420.8 255.5 L421.4 256.3 L421.9 257.2 L422.4 258.1 L422.8 258.9 L423.2 259.8 L423.5 260.5 L423.7 261.2 L423.9 262.0 L424.1 262.7 L424.2 263.4 L424.3 264.1 L424.3 264.8 L424.4 265.5 L424.3 266.2 L424.3 266.8 L424.2 267.4 L424.0 267.9 L423.9 268.5 L423.6 269.0 L423.3 269.6 L423.0 270.2 L422.7 270.8 L422.3 271.3 L421.9 271.8 L421.5 272.2 L421.2 272.5 L421.0 272.7 L420.7 272.9 L420.4 273.1 L420.0 273.3 L419.6 273.5 L419.1 273.6 L418.7 273.7 L418.2 273.9 L417.8 273.9 L417.4 274.0 L417.2 274.0 L417.0 274.1 L416.7 274.0 L416.4 274.0 L416.0 273.9 L415.7 273.8 L415.3 273.7 L415.0 273.6 L414.6 273.5 L414.3 273.4 L412.9 277.8 L413.1 277.9 L413.3 278.0 L413.6 278.1 L414.0 278.3 L414.5 278.5 L415.0 278.7 L415.6 278.9 L416.3 279.1 L417.1 279.2 L417.8 279.2 L418.4 279.1 L419.1 279.1 L419.7 279.0 L420.4 278.8 L421.2 278.7 L421.9 278.4 L422.7 278.1 L423.5 277.7 L424.2 277.3 L425.0 276.7 L425.6 276.1 L426.2 275.4 L426.8 274.7 L427.3 274.0 L427.9 273.2 L428.4 272.4 L428.8 271.5 L429.2 270.6 L429.6 269.6 L429.8 268.6 L430.0 267.7 L430.1 266.7 L430.2 265.7 L430.2 264.7 L430.2 263.7 L430.1 262.6 L429.9 261.6 L429.7 260.6 L429.5 259.5 L429.1 258.5 L428.7 257.4 L428.3 256.4 L427.7 255.3 L427.2 254.2 L426.5 253.2 L425.8 252.1 L425.1 251.1 L424.3 250.1 L423.5 249.2 L422.6 248.3 L421.7 247.5 L420.7 246.7 L419.6 246.1 L418.5 245.5 L417.5 245.0 L416.4 244.5 L415.4 244.1 L414.4 243.7 L413.5 243.4 L412.7 243.1 L411.8 242.9 L411.0 242.8 L410.2 242.7 L409.5 242.7 L408.8 242.8 L408.2 242.9 L407.7 243.0 L407.2 243.2 L406.7 243.3 L406.2 243.4 L405.5 243.6 L404.8 243.8 L404.1 244.1 L403.3 244.4 L402.6 244.7 L402.0 245.0 L401.4 245.2 L400.8 245.5 L400.4 245.6 L400.1 245.8Z" fill="#dadbd5"/>
<path d="M400.8 248.4 L401.2 248.3 L401.7 248.2 L402.3 248.0 L402.9 247.9 L403.6 247.7 L404.3 247.5 L404.9 247.3 L405.6 247.2 L406.2 247.1 L406.8 247.0 L407.3 246.9 L407.8 246.9 L408.3 246.8 L408.7 246.8 L409.1 246.7 L409.5 246.7 L409.9 246.8 L410.3 246.8 L410.8 247.0 L411.4 247.1 L412.1 247.4 L412.9 247.7 L413.8 248.0 L414.7 248.4 L415.6 248.8 L416.5 249.3 L417.4 249.8 L418.2 250.3 L419.0 250.9 L419.7 251.5 L420.3 252.1 L421.0 252.9 L421.6 253.7 L422.2 254.6 L422.8 255.5 L423.3 256.4 L423.9 257.3 L424.3 258.2 L424.7 259.1 L425.0 260.0 L425.3 260.8 L425.5 261.6 L425.7 262.4 L425.8 263.2 L425.9 264.0 L426.0 264.8 L426.0 265.6 L425.9 266.3 L425.8 267.0 L425.7 267.7 L425.6 268.4 L425.3 269.0 L425.0 269.7 L424.7 270.4 L424.3 271.0 L423.9 271.7 L423.5 272.2 L423.1 272.8 L422.7 273.3 L422.3 273.7 L421.9 274.0 L421.5 274.3 L421.0 274.5 L420.5 274.7 L420.0 274.9 L419.5 275.1 L419.0 275.2 L418.4 275.3 L417.9 275.4 L417.5 275.4 L417.2 275.5 L416.8 275.4 L416.4 275.4 L416.0 275.3 L415.6 275.2 L415.2 275.1 L414.9 274.9 L414.5 274.8 L414.2 274.7 L413.9 274.6 L413.3 276.6 L413.5 276.7 L413.7 276.8 L414.1 276.9 L414.5 277.1 L414.9 277.3 L415.4 277.4 L415.9 277.6 L416.5 277.7 L417.1 277.8 L417.7 277.8 L418.2 277.7 L418.8 277.6 L419.4 277.5 L420.1 277.4 L420.7 277.2 L421.4 277.0 L422.0 276.8 L422.7 276.4 L423.3 276.0 L423.9 275.5 L424.5 275.0 L425.0 274.4 L425.5 273.8 L426.1 273.1 L426.5 272.4 L427.0 271.6 L427.4 270.8 L427.7 270.0 L428.0 269.1 L428.3 268.3 L428.4 267.4 L428.5 266.5 L428.6 265.7 L428.6 264.7 L428.6 263.8 L428.5 262.9 L428.3 261.9 L428.1 260.9 L427.9 260.0 L427.6 259.0 L427.2 258.1 L426.8 257.1 L426.3 256.1 L425.7 255.1 L425.1 254.0 L424.5 253.0 L423.8 252.1 L423.1 251.2 L422.3 250.3 L421.5 249.5 L420.7 248.8 L419.7 248.1 L418.8 247.5 L417.8 246.9 L416.7 246.4 L415.7 246.0 L414.8 245.6 L413.8 245.2 L413.0 244.9 L412.2 244.7 L411.5 244.5 L410.8 244.3 L410.1 244.2 L409.5 244.2 L408.9 244.3 L408.4 244.4 L407.9 244.5 L407.4 244.6 L406.9 244.7 L406.4 244.8 L405.8 244.9 L405.1 245.1 L404.4 245.3 L403.7 245.6 L403.0 245.8 L402.3 246.1 L401.7 246.3 L401.2 246.5 L400.7 246.7 L400.4 246.8Z" fill="#f0f1ec"/>
<circle cx="413.0" cy="272.9" r="5.2" fill="#dadbd5"/>
<circle cx="413.0" cy="272.6" r="3.1" fill="#f0f1ec"/>
<path d="M363.3 225.0 L364.2 234.1 L373.9 236.0 L367.5 229.7Z" fill="#dadbd5"/>
<path d="M400.5 225.0 L399.6 234.1 L389.9 236.0 L396.3 229.7Z" fill="#dadbd5"/>
<path d="M380.2 210.0 L379.2 215.0 L377.4 220.5 L385.0 220.5 L381.8 215.0Z" fill="#dadbd5"/>
<path d="M363.3 225.0 L363.4 225.7 L363.5 226.7 L363.6 227.9 L363.7 229.1 L363.8 230.5 L363.9 231.8 L364.1 233.0 L364.2 234.1 L364.3 235.0 L364.4 235.9 L364.5 236.7 L364.6 237.4 L364.8 238.2 L364.9 238.9 L365.1 239.7 L365.3 240.6 L365.6 241.5 L365.9 242.5 L366.2 243.5 L366.5 244.5 L366.9 245.6 L367.3 246.6 L367.6 247.6 L368.0 248.5 L368.4 249.4 L368.8 250.4 L369.2 251.4 L369.6 252.4 L370.0 253.3 L370.3 254.1 L370.6 254.8 L370.8 255.3" fill="none" stroke="#dadbd5" stroke-width="4.6" stroke-linecap="round" stroke-linejoin="round"/><path d="M363.3 225.0 L363.4 225.7 L363.5 226.7 L363.6 227.9 L363.7 229.1 L363.8 230.5 L363.9 231.8 L364.1 233.0 L364.2 234.1 L364.3 235.0 L364.4 235.9 L364.5 236.7 L364.6 237.4 L364.8 238.2 L364.9 238.9 L365.1 239.7 L365.3 240.6 L365.6 241.5 L365.9 242.5 L366.2 243.5 L366.5 244.5 L366.9 245.6 L367.3 246.6 L367.6 247.6 L368.0 248.5 L368.4 249.4 L368.8 250.4 L369.2 251.4 L369.6 252.4 L370.0 253.3 L370.3 254.1 L370.6 254.8 L370.8 255.3" fill="none" stroke="#f0f1ec" stroke-width="2.1" stroke-linecap="round"/>
<path d="M363.3 225.0 L363.6 225.4 L364.0 225.8 L364.5 226.3 L365.0 227.0 L365.6 227.6 L366.2 228.3 L366.8 229.0 L367.5 229.7 L368.2 230.4 L369.0 231.2 L369.8 232.0 L370.6 232.8 L371.4 233.6 L372.3 234.4 L373.1 235.2 L373.9 236.0 L374.7 236.8 L375.5 237.6 L376.3 238.4 L377.0 239.2 L377.8 240.0 L378.5 240.7 L379.2 241.4 L379.8 242.0 L380.4 242.6 L380.9 243.1 L381.5 243.5 L382.0 244.0 L382.4 244.4 L382.8 244.7 L383.1 245.0 L383.4 245.2" fill="none" stroke="#dadbd5" stroke-width="4.6" stroke-linecap="round" stroke-linejoin="round"/><path d="M363.3 225.0 L363.6 225.4 L364.0 225.8 L364.5 226.3 L365.0 227.0 L365.6 227.6 L366.2 228.3 L366.8 229.0 L367.5 229.7 L368.2 230.4 L369.0 231.2 L369.8 232.0 L370.6 232.8 L371.4 233.6 L372.3 234.4 L373.1 235.2 L373.9 236.0 L374.7 236.8 L375.5 237.6 L376.3 238.4 L377.0 239.2 L377.8 240.0 L378.5 240.7 L379.2 241.4 L379.8 242.0 L380.4 242.6 L380.9 243.1 L381.5 243.5 L382.0 244.0 L382.4 244.4 L382.8 244.7 L383.1 245.0 L383.4 245.2" fill="none" stroke="#f0f1ec" stroke-width="2.1" stroke-linecap="round"/>
<path d="M400.5 225.0 L400.4 225.7 L400.3 226.7 L400.2 227.9 L400.1 229.1 L400.0 230.5 L399.9 231.8 L399.7 233.0 L399.6 234.1 L399.5 235.0 L399.4 235.9 L399.3 236.7 L399.2 237.4 L399.0 238.2 L398.9 238.9 L398.7 239.7 L398.5 240.6 L398.2 241.5 L397.9 242.5 L397.6 243.5 L397.3 244.5 L396.9 245.6 L396.5 246.6 L396.2 247.6 L395.8 248.5 L395.4 249.4 L395.0 250.4 L394.6 251.4 L394.2 252.4 L393.8 253.3 L393.5 254.1 L393.2 254.8 L393.0 255.3" fill="none" stroke="#dadbd5" stroke-width="4.6" stroke-linecap="round" stroke-linejoin="round"/><path d="M400.5 225.0 L400.4 225.7 L400.3 226.7 L400.2 227.9 L400.1 229.1 L400.0 230.5 L399.9 231.8 L399.7 233.0 L399.6 234.1 L399.5 235.0 L399.4 235.9 L399.3 236.7 L399.2 237.4 L399.0 238.2 L398.9 238.9 L398.7 239.7 L398.5 240.6 L398.2 241.5 L397.9 242.5 L397.6 243.5 L397.3 244.5 L396.9 245.6 L396.5 246.6 L396.2 247.6 L395.8 248.5 L395.4 249.4 L395.0 250.4 L394.6 251.4 L394.2 252.4 L393.8 253.3 L393.5 254.1 L393.2 254.8 L393.0 255.3" fill="none" stroke="#f0f1ec" stroke-width="2.1" stroke-linecap="round"/>
<path d="M400.5 225.0 L400.2 225.4 L399.8 225.8 L399.3 226.3 L398.8 227.0 L398.2 227.6 L397.6 228.3 L397.0 229.0 L396.3 229.7 L395.6 230.4 L394.8 231.2 L394.0 232.0 L393.2 232.8 L392.4 233.6 L391.5 234.4 L390.7 235.2 L389.9 236.0 L389.1 236.8 L388.3 237.6 L387.5 238.4 L386.8 239.2 L386.0 240.0 L385.3 240.7 L384.6 241.4 L384.0 242.0 L383.4 242.6 L382.9 243.1 L382.3 243.5 L381.8 244.0 L381.4 244.4 L381.0 244.7 L380.7 245.0 L380.4 245.2" fill="none" stroke="#dadbd5" stroke-width="4.6" stroke-linecap="round" stroke-linejoin="round"/><path d="M400.5 225.0 L400.2 225.4 L399.8 225.8 L399.3 226.3 L398.8 227.0 L398.2 227.6 L397.6 228.3 L397.0 229.0 L396.3 229.7 L395.6 230.4 L394.8 231.2 L394.0 232.0 L393.2 232.8 L392.4 233.6 L391.5 234.4 L390.7 235.2 L389.9 236.0 L389.1 236.8 L388.3 237.6 L387.5 238.4 L386.8 239.2 L386.0 240.0 L385.3 240.7 L384.6 241.4 L384.0 242.0 L383.4 242.6 L382.9 243.1 L382.3 243.5 L381.8 244.0 L381.4 244.4 L381.0 244.7 L380.7 245.0 L380.4 245.2" fill="none" stroke="#f0f1ec" stroke-width="2.1" stroke-linecap="round"/>
<path d="M380.2 210.0 L380.1 210.4 L380.0 210.9 L379.9 211.5 L379.8 212.2 L379.7 212.9 L379.5 213.6 L379.4 214.3 L379.2 215.0 L379.0 215.7 L378.8 216.3 L378.6 217.0 L378.4 217.7 L378.1 218.4 L377.9 219.1 L377.6 219.8 L377.4 220.5 L377.2 221.2 L376.9 222.0 L376.6 222.7 L376.4 223.5 L376.1 224.2 L375.9 225.0 L375.7 225.7 L375.6 226.5 L375.5 227.3 L375.5 228.0 L375.4 228.8 L375.5 229.6 L375.5 230.4 L375.6 231.2 L375.8 232.0 L376.0 232.8 L376.3 233.7 L376.7 234.6 L377.1 235.5 L377.6 236.5 L378.1 237.4 L378.6 238.3 L379.1 239.2 L379.6 240.0 L380.1 240.7 L380.5 241.3 L381.0 241.9 L381.4 242.5 L381.9 243.0 L382.4 243.6 L382.9 244.2 L383.4 244.8 L384.0 245.5 L384.6 246.3 L385.3 247.1 L385.9 248.0 L386.6 248.7 L387.2 249.5 L387.6 250.1 L388.0 250.5" fill="none" stroke="#dadbd5" stroke-width="4.6" stroke-linecap="round" stroke-linejoin="round"/><path d="M380.2 210.0 L380.1 210.4 L380.0 210.9 L379.9 211.5 L379.8 212.2 L379.7 212.9 L379.5 213.6 L379.4 214.3 L379.2 215.0 L379.0 215.7 L378.8 216.3 L378.6 217.0 L378.4 217.7 L378.1 218.4 L377.9 219.1 L377.6 219.8 L377.4 220.5 L377.2 221.2 L376.9 222.0 L376.6 222.7 L376.4 223.5 L376.1 224.2 L375.9 225.0 L375.7 225.7 L375.6 226.5 L375.5 227.3 L375.5 228.0 L375.4 228.8 L375.5 229.6 L375.5 230.4 L375.6 231.2 L375.8 232.0 L376.0 232.8 L376.3 233.7 L376.7 234.6 L377.1 235.5 L377.6 236.5 L378.1 237.4 L378.6 238.3 L379.1 239.2 L379.6 240.0 L380.1 240.7 L380.5 241.3 L381.0 241.9 L381.4 242.5 L381.9 243.0 L382.4 243.6 L382.9 244.2 L383.4 244.8 L384.0 245.5 L384.6 246.3 L385.3 247.1 L385.9 248.0 L386.6 248.7 L387.2 249.5 L387.6 250.1 L388.0 250.5" fill="none" stroke="#f0f1ec" stroke-width="2.1" stroke-linecap="round"/>
<path d="M380.2 210.0 L380.3 210.4 L380.4 210.9 L380.6 211.5 L380.8 212.2 L381.0 212.9 L381.2 213.6 L381.5 214.3 L381.8 215.0 L382.1 215.7 L382.5 216.3 L382.8 217.0 L383.2 217.7 L383.6 218.3 L384.1 219.0 L384.5 219.8 L385.0 220.5 L385.5 221.3 L386.1 222.0 L386.7 222.9 L387.4 223.7 L388.0 224.5 L388.6 225.3 L389.0 226.1 L389.4 226.9 L389.7 227.7 L389.9 228.4 L390.0 229.1 L390.1 229.8 L390.1 230.5 L390.1 231.2 L390.0 232.0 L389.8 232.8 L389.6 233.7 L389.3 234.6 L388.9 235.5 L388.4 236.5 L388.0 237.4 L387.5 238.3 L387.0 239.2 L386.5 240.0 L386.0 240.7 L385.5 241.3 L385.0 241.9 L384.5 242.5 L384.0 243.0 L383.5 243.6 L382.9 244.2 L382.4 244.8 L381.8 245.5 L381.2 246.3 L380.6 247.1 L379.9 248.0 L379.3 248.7 L378.8 249.5 L378.3 250.1 L378.0 250.5" fill="none" stroke="#dadbd5" stroke-width="4.6" stroke-linecap="round" stroke-linejoin="round"/><path d="M380.2 210.0 L380.3 210.4 L380.4 210.9 L380.6 211.5 L380.8 212.2 L381.0 212.9 L381.2 213.6 L381.5 214.3 L381.8 215.0 L382.1 215.7 L382.5 216.3 L382.8 217.0 L383.2 217.7 L383.6 218.3 L384.1 219.0 L384.5 219.8 L385.0 220.5 L385.5 221.3 L386.1 222.0 L386.7 222.9 L387.4 223.7 L388.0 224.5 L388.6 225.3 L389.0 226.1 L389.4 226.9 L389.7 227.7 L389.9 228.4 L390.0 229.1 L390.1 229.8 L390.1 230.5 L390.1 231.2 L390.0 232.0 L389.8 232.8 L389.6 233.7 L389.3 234.6 L388.9 235.5 L388.4 236.5 L388.0 237.4 L387.5 238.3 L387.0 239.2 L386.5 240.0 L386.0 240.7 L385.5 241.3 L385.0 241.9 L384.5 242.5 L384.0 243.0 L383.5 243.6 L382.9 244.2 L382.4 244.8 L381.8 245.5 L381.2 246.3 L380.6 247.1 L379.9 248.0 L379.3 248.7 L378.8 249.5 L378.3 250.1 L378.0 250.5" fill="none" stroke="#f0f1ec" stroke-width="2.1" stroke-linecap="round"/></g>
<g transform="matrix(0 1 1 0 -0.8 4.3)"><path d="M366.5 245.8 L366.2 245.6 L365.8 245.5 L365.2 245.2 L364.6 245.0 L364.0 244.7 L363.3 244.4 L362.5 244.1 L361.8 243.8 L361.1 243.6 L360.4 243.4 L359.9 243.3 L359.4 243.2 L358.9 243.0 L358.4 242.9 L357.8 242.8 L357.1 242.7 L356.4 242.7 L355.6 242.8 L354.8 242.9 L353.9 243.1 L353.1 243.4 L352.2 243.7 L351.2 244.1 L350.2 244.5 L349.1 245.0 L348.1 245.5 L347.0 246.1 L345.9 246.7 L344.9 247.5 L344.0 248.3 L343.1 249.2 L342.3 250.1 L341.5 251.1 L340.8 252.1 L340.1 253.2 L339.4 254.2 L338.9 255.3 L338.3 256.4 L337.9 257.4 L337.5 258.5 L337.1 259.5 L336.9 260.6 L336.7 261.6 L336.5 262.6 L336.4 263.7 L336.4 264.7 L336.4 265.7 L336.5 266.7 L336.6 267.7 L336.8 268.6 L337.0 269.6 L337.4 270.6 L337.8 271.5 L338.2 272.4 L338.7 273.2 L339.3 274.0 L339.8 274.7 L340.4 275.4 L341.0 276.1 L341.6 276.7 L342.4 277.3 L343.1 277.7 L343.9 278.1 L344.7 278.4 L345.4 278.7 L346.2 278.8 L346.9 279.0 L347.5 279.1 L348.2 279.1 L348.8 279.2 L349.5 279.2 L350.3 279.1 L351.0 278.9 L351.6 278.7 L352.1 278.5 L352.6 278.3 L353.0 278.1 L353.3 278.0 L353.5 277.9 L353.7 277.8 L352.3 273.4 L352.0 273.5 L351.6 273.6 L351.3 273.7 L350.9 273.8 L350.6 273.9 L350.2 274.0 L349.9 274.0 L349.6 274.1 L349.4 274.0 L349.2 274.0 L348.8 273.9 L348.4 273.9 L347.9 273.7 L347.5 273.6 L347.0 273.5 L346.6 273.3 L346.2 273.1 L345.9 272.9 L345.6 272.7 L345.4 272.5 L345.1 272.2 L344.7 271.8 L344.3 271.3 L343.9 270.8 L343.6 270.2 L343.3 269.6 L343.0 269.0 L342.7 268.5 L342.6 267.9 L342.4 267.4 L342.3 266.8 L342.3 266.2 L342.2 265.5 L342.3 264.8 L342.3 264.1 L342.4 263.4 L342.5 262.7 L342.7 262.0 L342.9 261.2 L343.1 260.5 L343.4 259.8 L343.8 258.9 L344.2 258.1 L344.7 257.2 L345.2 256.3 L345.8 255.5 L346.3 254.7 L346.9 253.9 L347.5 253.3 L348.0 252.7 L348.6 252.2 L349.3 251.7 L350.1 251.2 L350.9 250.8 L351.7 250.3 L352.6 249.9 L353.4 249.5 L354.3 249.2 L355.0 248.9 L355.7 248.7 L356.2 248.5 L356.5 248.4 L356.8 248.3 L357.1 248.3 L357.4 248.2 L357.7 248.2 L358.0 248.2 L358.5 248.3 L359.0 248.3 L359.6 248.4 L360.1 248.4 L360.7 248.5 L361.3 248.6 L362.0 248.7 L362.7 248.8 L363.4 249.0 L364.0 249.1 L364.6 249.2 L365.1 249.3 L365.5 249.4Z" fill="#dadbd5"/>
<path d="M366.2 246.8 L365.9 246.7 L365.4 246.5 L364.9 246.3 L364.3 246.1 L363.6 245.8 L362.9 245.6 L362.2 245.3 L361.5 245.1 L360.8 244.9 L360.2 244.8 L359.7 244.7 L359.2 244.6 L358.7 244.5 L358.2 244.4 L357.7 244.3 L357.1 244.2 L356.5 244.2 L355.8 244.3 L355.1 244.5 L354.4 244.7 L353.6 244.9 L352.8 245.2 L351.8 245.6 L350.9 246.0 L349.9 246.4 L348.8 246.9 L347.8 247.5 L346.9 248.1 L345.9 248.8 L345.1 249.5 L344.3 250.3 L343.5 251.2 L342.8 252.1 L342.1 253.0 L341.5 254.0 L340.9 255.1 L340.3 256.1 L339.8 257.1 L339.4 258.1 L339.0 259.0 L338.7 260.0 L338.5 260.9 L338.3 261.9 L338.1 262.9 L338.0 263.8 L338.0 264.7 L338.0 265.7 L338.1 266.5 L338.2 267.4 L338.3 268.3 L338.6 269.1 L338.9 270.0 L339.2 270.8 L339.6 271.6 L340.1 272.4 L340.5 273.1 L341.1 273.8 L341.6 274.4 L342.1 275.0 L342.7 275.5 L343.3 276.0 L343.9 276.4 L344.6 276.8 L345.2 277.0 L345.9 277.2 L346.5 277.4 L347.2 277.5 L347.8 277.6 L348.4 277.7 L348.9 277.8 L349.5 277.8 L350.1 277.7 L350.7 277.6 L351.2 277.4 L351.7 277.3 L352.1 277.1 L352.5 276.9 L352.9 276.8 L353.1 276.7 L353.3 276.6 L352.7 274.6 L352.4 274.7 L352.1 274.8 L351.7 274.9 L351.4 275.1 L351.0 275.2 L350.6 275.3 L350.2 275.4 L349.8 275.4 L349.4 275.5 L349.1 275.4 L348.7 275.4 L348.2 275.3 L347.6 275.2 L347.1 275.1 L346.6 274.9 L346.1 274.7 L345.6 274.5 L345.1 274.3 L344.7 274.0 L344.3 273.7 L343.9 273.3 L343.5 272.8 L343.1 272.2 L342.7 271.7 L342.3 271.0 L341.9 270.4 L341.6 269.7 L341.3 269.0 L341.0 268.4 L340.9 267.7 L340.8 267.0 L340.7 266.3 L340.6 265.6 L340.6 264.8 L340.7 264.0 L340.8 263.2 L340.9 262.4 L341.1 261.6 L341.3 260.8 L341.6 260.0 L341.9 259.1 L342.3 258.2 L342.7 257.3 L343.3 256.4 L343.8 255.5 L344.4 254.6 L345.0 253.7 L345.6 252.9 L346.3 252.1 L346.9 251.5 L347.6 250.9 L348.4 250.3 L349.2 249.8 L350.1 249.3 L351.0 248.8 L351.9 248.4 L352.8 248.0 L353.7 247.7 L354.5 247.4 L355.2 247.1 L355.8 247.0 L356.3 246.8 L356.7 246.8 L357.1 246.7 L357.5 246.7 L357.9 246.8 L358.3 246.8 L358.8 246.9 L359.3 246.9 L359.8 247.0 L360.4 247.1 L361.0 247.2 L361.7 247.3 L362.3 247.5 L363.0 247.7 L363.7 247.9 L364.3 248.0 L364.9 248.2 L365.4 248.3 L365.8 248.4Z" fill="#f0f1ec"/>
<circle cx="353.6" cy="272.9" r="5.2" fill="#dadbd5"/>
<circle cx="353.6" cy="272.6" r="3.1" fill="#f0f1ec"/>
<path d="M401.1 249.4 L401.5 249.3 L402.0 249.2 L402.6 249.1 L403.2 249.0 L403.9 248.8 L404.6 248.7 L405.3 248.6 L405.9 248.5 L406.5 248.4 L407.0 248.4 L407.6 248.3 L408.1 248.3 L408.6 248.2 L408.9 248.2 L409.2 248.2 L409.5 248.3 L409.8 248.3 L410.1 248.4 L410.4 248.5 L410.9 248.7 L411.6 248.9 L412.3 249.2 L413.2 249.5 L414.0 249.9 L414.9 250.3 L415.7 250.8 L416.5 251.2 L417.3 251.7 L418.0 252.2 L418.6 252.7 L419.1 253.3 L419.7 253.9 L420.3 254.7 L420.8 255.5 L421.4 256.3 L421.9 257.2 L422.4 258.1 L422.8 258.9 L423.2 259.8 L423.5 260.5 L423.7 261.2 L423.9 262.0 L424.1 262.7 L424.2 263.4 L424.3 264.1 L424.3 264.8 L424.4 265.5 L424.3 266.2 L424.3 266.8 L424.2 267.4 L424.0 267.9 L423.9 268.5 L423.6 269.0 L423.3 269.6 L423.0 270.2 L422.7 270.8 L422.3 271.3 L421.9 271.8 L421.5 272.2 L421.2 272.5 L421.0 272.7 L420.7 272.9 L420.4 273.1 L420.0 273.3 L419.6 273.5 L419.1 273.6 L418.7 273.7 L418.2 273.9 L417.8 273.9 L417.4 274.0 L417.2 274.0 L417.0 274.1 L416.7 274.0 L416.4 274.0 L416.0 273.9 L415.7 273.8 L415.3 273.7 L415.0 273.6 L414.6 273.5 L414.3 273.4 L412.9 277.8 L413.1 277.9 L413.3 278.0 L413.6 278.1 L414.0 278.3 L414.5 278.5 L415.0 278.7 L415.6 278.9 L416.3 279.1 L417.1 279.2 L417.8 279.2 L418.4 279.1 L419.1 279.1 L419.7 279.0 L420.4 278.8 L421.2 278.7 L421.9 278.4 L422.7 278.1 L423.5 277.7 L424.2 277.3 L425.0 276.7 L425.6 276.1 L426.2 275.4 L426.8 274.7 L427.3 274.0 L427.9 273.2 L428.4 272.4 L428.8 271.5 L429.2 270.6 L429.6 269.6 L429.8 268.6 L430.0 267.7 L430.1 266.7 L430.2 265.7 L430.2 264.7 L430.2 263.7 L430.1 262.6 L429.9 261.6 L429.7 260.6 L429.5 259.5 L429.1 258.5 L428.7 257.4 L428.3 256.4 L427.7 255.3 L427.2 254.2 L426.5 253.2 L425.8 252.1 L425.1 251.1 L424.3 250.1 L423.5 249.2 L422.6 248.3 L421.7 247.5 L420.7 246.7 L419.6 246.1 L418.5 245.5 L417.5 245.0 L416.4 244.5 L415.4 244.1 L414.4 243.7 L413.5 243.4 L412.7 243.1 L411.8 242.9 L411.0 242.8 L410.2 242.7 L409.5 242.7 L408.8 242.8 L408.2 242.9 L407.7 243.0 L407.2 243.2 L406.7 243.3 L406.2 243.4 L405.5 243.6 L404.8 243.8 L404.1 244.1 L403.3 244.4 L402.6 244.7 L402.0 245.0 L401.4 245.2 L400.8 245.5 L400.4 245.6 L400.1 245.8Z" fill="#dadbd5"/>
<path d="M400.8 248.4 L401.2 248.3 L401.7 248.2 L402.3 248.0 L402.9 247.9 L403.6 247.7 L404.3 247.5 L404.9 247.3 L405.6 247.2 L406.2 247.1 L406.8 247.0 L407.3 246.9 L407.8 246.9 L408.3 246.8 L408.7 246.8 L409.1 246.7 L409.5 246.7 L409.9 246.8 L410.3 246.8 L410.8 247.0 L411.4 247.1 L412.1 247.4 L412.9 247.7 L413.8 248.0 L414.7 248.4 L415.6 248.8 L416.5 249.3 L417.4 249.8 L418.2 250.3 L419.0 250.9 L419.7 251.5 L420.3 252.1 L421.0 252.9 L421.6 253.7 L422.2 254.6 L422.8 255.5 L423.3 256.4 L423.9 257.3 L424.3 258.2 L424.7 259.1 L425.0 260.0 L425.3 260.8 L425.5 261.6 L425.7 262.4 L425.8 263.2 L425.9 264.0 L426.0 264.8 L426.0 265.6 L425.9 266.3 L425.8 267.0 L425.7 267.7 L425.6 268.4 L425.3 269.0 L425.0 269.7 L424.7 270.4 L424.3 271.0 L423.9 271.7 L423.5 272.2 L423.1 272.8 L422.7 273.3 L422.3 273.7 L421.9 274.0 L421.5 274.3 L421.0 274.5 L420.5 274.7 L420.0 274.9 L419.5 275.1 L419.0 275.2 L418.4 275.3 L417.9 275.4 L417.5 275.4 L417.2 275.5 L416.8 275.4 L416.4 275.4 L416.0 275.3 L415.6 275.2 L415.2 275.1 L414.9 274.9 L414.5 274.8 L414.2 274.7 L413.9 274.6 L413.3 276.6 L413.5 276.7 L413.7 276.8 L414.1 276.9 L414.5 277.1 L414.9 277.3 L415.4 277.4 L415.9 277.6 L416.5 277.7 L417.1 277.8 L417.7 277.8 L418.2 277.7 L418.8 277.6 L419.4 277.5 L420.1 277.4 L420.7 277.2 L421.4 277.0 L422.0 276.8 L422.7 276.4 L423.3 276.0 L423.9 275.5 L424.5 275.0 L425.0 274.4 L425.5 273.8 L426.1 273.1 L426.5 272.4 L427.0 271.6 L427.4 270.8 L427.7 270.0 L428.0 269.1 L428.3 268.3 L428.4 267.4 L428.5 266.5 L428.6 265.7 L428.6 264.7 L428.6 263.8 L428.5 262.9 L428.3 261.9 L428.1 260.9 L427.9 260.0 L427.6 259.0 L427.2 258.1 L426.8 257.1 L426.3 256.1 L425.7 255.1 L425.1 254.0 L424.5 253.0 L423.8 252.1 L423.1 251.2 L422.3 250.3 L421.5 249.5 L420.7 248.8 L419.7 248.1 L418.8 247.5 L417.8 246.9 L416.7 246.4 L415.7 246.0 L414.8 245.6 L413.8 245.2 L413.0 244.9 L412.2 244.7 L411.5 244.5 L410.8 244.3 L410.1 244.2 L409.5 244.2 L408.9 244.3 L408.4 244.4 L407.9 244.5 L407.4 244.6 L406.9 244.7 L406.4 244.8 L405.8 244.9 L405.1 245.1 L404.4 245.3 L403.7 245.6 L403.0 245.8 L402.3 246.1 L401.7 246.3 L401.2 246.5 L400.7 246.7 L400.4 246.8Z" fill="#f0f1ec"/>
<circle cx="413.0" cy="272.9" r="5.2" fill="#dadbd5"/>
<circle cx="413.0" cy="272.6" r="3.1" fill="#f0f1ec"/>
<path d="M363.3 225.0 L364.2 234.1 L373.9 236.0 L367.5 229.7Z" fill="#dadbd5"/>
<path d="M400.5 225.0 L399.6 234.1 L389.9 236.0 L396.3 229.7Z" fill="#dadbd5"/>
<path d="M380.2 210.0 L379.2 215.0 L377.4 220.5 L385.0 220.5 L381.8 215.0Z" fill="#dadbd5"/>
<path d="M363.3 225.0 L363.4 225.7 L363.5 226.7 L363.6 227.9 L363.7 229.1 L363.8 230.5 L363.9 231.8 L364.1 233.0 L364.2 234.1 L364.3 235.0 L364.4 235.9 L364.5 236.7 L364.6 237.4 L364.8 238.2 L364.9 238.9 L365.1 239.7 L365.3 240.6 L365.6 241.5 L365.9 242.5 L366.2 243.5 L366.5 244.5 L366.9 245.6 L367.3 246.6 L367.6 247.6 L368.0 248.5 L368.4 249.4 L368.8 250.4 L369.2 251.4 L369.6 252.4 L370.0 253.3 L370.3 254.1 L370.6 254.8 L370.8 255.3" fill="none" stroke="#dadbd5" stroke-width="5.3" stroke-linecap="round" stroke-linejoin="round"/><path d="M363.3 225.0 L363.4 225.7 L363.5 226.7 L363.6 227.9 L363.7 229.1 L363.8 230.5 L363.9 231.8 L364.1 233.0 L364.2 234.1 L364.3 235.0 L364.4 235.9 L364.5 236.7 L364.6 237.4 L364.8 238.2 L364.9 238.9 L365.1 239.7 L365.3 240.6 L365.6 241.5 L365.9 242.5 L366.2 243.5 L366.5 244.5 L366.9 245.6 L367.3 246.6 L367.6 247.6 L368.0 248.5 L368.4 249.4 L368.8 250.4 L369.2 251.4 L369.6 252.4 L370.0 253.3 L370.3 254.1 L370.6 254.8 L370.8 255.3" fill="none" stroke="#f0f1ec" stroke-width="2.4" stroke-linecap="round"/>
<path d="M363.3 225.0 L363.6 225.4 L364.0 225.8 L364.5 226.3 L365.0 227.0 L365.6 227.6 L366.2 228.3 L366.8 229.0 L367.5 229.7 L368.2 230.4 L369.0 231.2 L369.8 232.0 L370.6 232.8 L371.4 233.6 L372.3 234.4 L373.1 235.2 L373.9 236.0 L374.7 236.8 L375.5 237.6 L376.3 238.4 L377.0 239.2 L377.8 240.0 L378.5 240.7 L379.2 241.4 L379.8 242.0 L380.4 242.6 L380.9 243.1 L381.5 243.5 L382.0 244.0 L382.4 244.4 L382.8 244.7 L383.1 245.0 L383.4 245.2" fill="none" stroke="#dadbd5" stroke-width="5.3" stroke-linecap="round" stroke-linejoin="round"/><path d="M363.3 225.0 L363.6 225.4 L364.0 225.8 L364.5 226.3 L365.0 227.0 L365.6 227.6 L366.2 228.3 L366.8 229.0 L367.5 229.7 L368.2 230.4 L369.0 231.2 L369.8 232.0 L370.6 232.8 L371.4 233.6 L372.3 234.4 L373.1 235.2 L373.9 236.0 L374.7 236.8 L375.5 237.6 L376.3 238.4 L377.0 239.2 L377.8 240.0 L378.5 240.7 L379.2 241.4 L379.8 242.0 L380.4 242.6 L380.9 243.1 L381.5 243.5 L382.0 244.0 L382.4 244.4 L382.8 244.7 L383.1 245.0 L383.4 245.2" fill="none" stroke="#f0f1ec" stroke-width="2.4" stroke-linecap="round"/>
<path d="M400.5 225.0 L400.4 225.7 L400.3 226.7 L400.2 227.9 L400.1 229.1 L400.0 230.5 L399.9 231.8 L399.7 233.0 L399.6 234.1 L399.5 235.0 L399.4 235.9 L399.3 236.7 L399.2 237.4 L399.0 238.2 L398.9 238.9 L398.7 239.7 L398.5 240.6 L398.2 241.5 L397.9 242.5 L397.6 243.5 L397.3 244.5 L396.9 245.6 L396.5 246.6 L396.2 247.6 L395.8 248.5 L395.4 249.4 L395.0 250.4 L394.6 251.4 L394.2 252.4 L393.8 253.3 L393.5 254.1 L393.2 254.8 L393.0 255.3" fill="none" stroke="#dadbd5" stroke-width="5.3" stroke-linecap="round" stroke-linejoin="round"/><path d="M400.5 225.0 L400.4 225.7 L400.3 226.7 L400.2 227.9 L400.1 229.1 L400.0 230.5 L399.9 231.8 L399.7 233.0 L399.6 234.1 L399.5 235.0 L399.4 235.9 L399.3 236.7 L399.2 237.4 L399.0 238.2 L398.9 238.9 L398.7 239.7 L398.5 240.6 L398.2 241.5 L397.9 242.5 L397.6 243.5 L397.3 244.5 L396.9 245.6 L396.5 246.6 L396.2 247.6 L395.8 248.5 L395.4 249.4 L395.0 250.4 L394.6 251.4 L394.2 252.4 L393.8 253.3 L393.5 254.1 L393.2 254.8 L393.0 255.3" fill="none" stroke="#f0f1ec" stroke-width="2.4" stroke-linecap="round"/>
<path d="M400.5 225.0 L400.2 225.4 L399.8 225.8 L399.3 226.3 L398.8 227.0 L398.2 227.6 L397.6 228.3 L397.0 229.0 L396.3 229.7 L395.6 230.4 L394.8 231.2 L394.0 232.0 L393.2 232.8 L392.4 233.6 L391.5 234.4 L390.7 235.2 L389.9 236.0 L389.1 236.8 L388.3 237.6 L387.5 238.4 L386.8 239.2 L386.0 240.0 L385.3 240.7 L384.6 241.4 L384.0 242.0 L383.4 242.6 L382.9 243.1 L382.3 243.5 L381.8 244.0 L381.4 244.4 L381.0 244.7 L380.7 245.0 L380.4 245.2" fill="none" stroke="#dadbd5" stroke-width="5.3" stroke-linecap="round" stroke-linejoin="round"/><path d="M400.5 225.0 L400.2 225.4 L399.8 225.8 L399.3 226.3 L398.8 227.0 L398.2 227.6 L397.6 228.3 L397.0 229.0 L396.3 229.7 L395.6 230.4 L394.8 231.2 L394.0 232.0 L393.2 232.8 L392.4 233.6 L391.5 234.4 L390.7 235.2 L389.9 236.0 L389.1 236.8 L388.3 237.6 L387.5 238.4 L386.8 239.2 L386.0 240.0 L385.3 240.7 L384.6 241.4 L384.0 242.0 L383.4 242.6 L382.9 243.1 L382.3 243.5 L381.8 244.0 L381.4 244.4 L381.0 244.7 L380.7 245.0 L380.4 245.2" fill="none" stroke="#f0f1ec" stroke-width="2.4" stroke-linecap="round"/>
<path d="M380.2 210.0 L380.1 210.4 L380.0 210.9 L379.9 211.5 L379.8 212.2 L379.7 212.9 L379.5 213.6 L379.4 214.3 L379.2 215.0 L379.0 215.7 L378.8 216.3 L378.6 217.0 L378.4 217.7 L378.1 218.4 L377.9 219.1 L377.6 219.8 L377.4 220.5 L377.2 221.2 L376.9 222.0 L376.6 222.7 L376.4 223.5 L376.1 224.2 L375.9 225.0 L375.7 225.7 L375.6 226.5 L375.5 227.3 L375.5 228.0 L375.4 228.8 L375.5 229.6 L375.5 230.4 L375.6 231.2 L375.8 232.0 L376.0 232.8 L376.3 233.7 L376.7 234.6 L377.1 235.5 L377.6 236.5 L378.1 237.4 L378.6 238.3 L379.1 239.2 L379.6 240.0 L380.1 240.7 L380.5 241.3 L381.0 241.9 L381.4 242.5 L381.9 243.0 L382.4 243.6 L382.9 244.2 L383.4 244.8 L384.0 245.5 L384.6 246.3 L385.3 247.1 L385.9 248.0 L386.6 248.7 L387.2 249.5 L387.6 250.1 L388.0 250.5" fill="none" stroke="#dadbd5" stroke-width="5.3" stroke-linecap="round" stroke-linejoin="round"/><path d="M380.2 210.0 L380.1 210.4 L380.0 210.9 L379.9 211.5 L379.8 212.2 L379.7 212.9 L379.5 213.6 L379.4 214.3 L379.2 215.0 L379.0 215.7 L378.8 216.3 L378.6 217.0 L378.4 217.7 L378.1 218.4 L377.9 219.1 L377.6 219.8 L377.4 220.5 L377.2 221.2 L376.9 222.0 L376.6 222.7 L376.4 223.5 L376.1 224.2 L375.9 225.0 L375.7 225.7 L375.6 226.5 L375.5 227.3 L375.5 228.0 L375.4 228.8 L375.5 229.6 L375.5 230.4 L375.6 231.2 L375.8 232.0 L376.0 232.8 L376.3 233.7 L376.7 234.6 L377.1 235.5 L377.6 236.5 L378.1 237.4 L378.6 238.3 L379.1 239.2 L379.6 240.0 L380.1 240.7 L380.5 241.3 L381.0 241.9 L381.4 242.5 L381.9 243.0 L382.4 243.6 L382.9 244.2 L383.4 244.8 L384.0 245.5 L384.6 246.3 L385.3 247.1 L385.9 248.0 L386.6 248.7 L387.2 249.5 L387.6 250.1 L388.0 250.5" fill="none" stroke="#f0f1ec" stroke-width="2.4" stroke-linecap="round"/>
<path d="M380.2 210.0 L380.3 210.4 L380.4 210.9 L380.6 211.5 L380.8 212.2 L381.0 212.9 L381.2 213.6 L381.5 214.3 L381.8 215.0 L382.1 215.7 L382.5 216.3 L382.8 217.0 L383.2 217.7 L383.6 218.3 L384.1 219.0 L384.5 219.8 L385.0 220.5 L385.5 221.3 L386.1 222.0 L386.7 222.9 L387.4 223.7 L388.0 224.5 L388.6 225.3 L389.0 226.1 L389.4 226.9 L389.7 227.7 L389.9 228.4 L390.0 229.1 L390.1 229.8 L390.1 230.5 L390.1 231.2 L390.0 232.0 L389.8 232.8 L389.6 233.7 L389.3 234.6 L388.9 235.5 L388.4 236.5 L388.0 237.4 L387.5 238.3 L387.0 239.2 L386.5 240.0 L386.0 240.7 L385.5 241.3 L385.0 241.9 L384.5 242.5 L384.0 243.0 L383.5 243.6 L382.9 244.2 L382.4 244.8 L381.8 245.5 L381.2 246.3 L380.6 247.1 L379.9 248.0 L379.3 248.7 L378.8 249.5 L378.3 250.1 L378.0 250.5" fill="none" stroke="#dadbd5" stroke-width="5.3" stroke-linecap="round" stroke-linejoin="round"/><path d="M380.2 210.0 L380.3 210.4 L380.4 210.9 L380.6 211.5 L380.8 212.2 L381.0 212.9 L381.2 213.6 L381.5 214.3 L381.8 215.0 L382.1 215.7 L382.5 216.3 L382.8 217.0 L383.2 217.7 L383.6 218.3 L384.1 219.0 L384.5 219.8 L385.0 220.5 L385.5 221.3 L386.1 222.0 L386.7 222.9 L387.4 223.7 L388.0 224.5 L388.6 225.3 L389.0 226.1 L389.4 226.9 L389.7 227.7 L389.9 228.4 L390.0 229.1 L390.1 229.8 L390.1 230.5 L390.1 231.2 L390.0 232.0 L389.8 232.8 L389.6 233.7 L389.3 234.6 L388.9 235.5 L388.4 236.5 L388.0 237.4 L387.5 238.3 L387.0 239.2 L386.5 240.0 L386.0 240.7 L385.5 241.3 L385.0 241.9 L384.5 242.5 L384.0 243.0 L383.5 243.6 L382.9 244.2 L382.4 244.8 L381.8 245.5 L381.2 246.3 L380.6 247.1 L379.9 248.0 L379.3 248.7 L378.8 249.5 L378.3 250.1 L378.0 250.5" fill="none" stroke="#f0f1ec" stroke-width="2.4" stroke-linecap="round"/></g>
<g transform="matrix(0 1 -1 0 766.3 4.3)"><path d="M366.5 245.8 L366.2 245.6 L365.8 245.5 L365.2 245.2 L364.6 245.0 L364.0 244.7 L363.3 244.4 L362.5 244.1 L361.8 243.8 L361.1 243.6 L360.4 243.4 L359.9 243.3 L359.4 243.2 L358.9 243.0 L358.4 242.9 L357.8 242.8 L357.1 242.7 L356.4 242.7 L355.6 242.8 L354.8 242.9 L353.9 243.1 L353.1 243.4 L352.2 243.7 L351.2 244.1 L350.2 244.5 L349.1 245.0 L348.1 245.5 L347.0 246.1 L345.9 246.7 L344.9 247.5 L344.0 248.3 L343.1 249.2 L342.3 250.1 L341.5 251.1 L340.8 252.1 L340.1 253.2 L339.4 254.2 L338.9 255.3 L338.3 256.4 L337.9 257.4 L337.5 258.5 L337.1 259.5 L336.9 260.6 L336.7 261.6 L336.5 262.6 L336.4 263.7 L336.4 264.7 L336.4 265.7 L336.5 266.7 L336.6 267.7 L336.8 268.6 L337.0 269.6 L337.4 270.6 L337.8 271.5 L338.2 272.4 L338.7 273.2 L339.3 274.0 L339.8 274.7 L340.4 275.4 L341.0 276.1 L341.6 276.7 L342.4 277.3 L343.1 277.7 L343.9 278.1 L344.7 278.4 L345.4 278.7 L346.2 278.8 L346.9 279.0 L347.5 279.1 L348.2 279.1 L348.8 279.2 L349.5 279.2 L350.3 279.1 L351.0 278.9 L351.6 278.7 L352.1 278.5 L352.6 278.3 L353.0 278.1 L353.3 278.0 L353.5 277.9 L353.7 277.8 L352.3 273.4 L352.0 273.5 L351.6 273.6 L351.3 273.7 L350.9 273.8 L350.6 273.9 L350.2 274.0 L349.9 274.0 L349.6 274.1 L349.4 274.0 L349.2 274.0 L348.8 273.9 L348.4 273.9 L347.9 273.7 L347.5 273.6 L347.0 273.5 L346.6 273.3 L346.2 273.1 L345.9 272.9 L345.6 272.7 L345.4 272.5 L345.1 272.2 L344.7 271.8 L344.3 271.3 L343.9 270.8 L343.6 270.2 L343.3 269.6 L343.0 269.0 L342.7 268.5 L342.6 267.9 L342.4 267.4 L342.3 266.8 L342.3 266.2 L342.2 265.5 L342.3 264.8 L342.3 264.1 L342.4 263.4 L342.5 262.7 L342.7 262.0 L342.9 261.2 L343.1 260.5 L343.4 259.8 L343.8 258.9 L344.2 258.1 L344.7 257.2 L345.2 256.3 L345.8 255.5 L346.3 254.7 L346.9 253.9 L347.5 253.3 L348.0 252.7 L348.6 252.2 L349.3 251.7 L350.1 251.2 L350.9 250.8 L351.7 250.3 L352.6 249.9 L353.4 249.5 L354.3 249.2 L355.0 248.9 L355.7 248.7 L356.2 248.5 L356.5 248.4 L356.8 248.3 L357.1 248.3 L357.4 248.2 L357.7 248.2 L358.0 248.2 L358.5 248.3 L359.0 248.3 L359.6 248.4 L360.1 248.4 L360.7 248.5 L361.3 248.6 L362.0 248.7 L362.7 248.8 L363.4 249.0 L364.0 249.1 L364.6 249.2 L365.1 249.3 L365.5 249.4Z" fill="#dadbd5"/>
<path d="M366.2 246.8 L365.9 246.7 L365.4 246.5 L364.9 246.3 L364.3 246.1 L363.6 245.8 L362.9 245.6 L362.2 245.3 L361.5 245.1 L360.8 244.9 L360.2 244.8 L359.7 244.7 L359.2 244.6 L358.7 244.5 L358.2 244.4 L357.7 244.3 L357.1 244.2 L356.5 244.2 L355.8 244.3 L355.1 244.5 L354.4 244.7 L353.6 244.9 L352.8 245.2 L351.8 245.6 L350.9 246.0 L349.9 246.4 L348.8 246.9 L347.8 247.5 L346.9 248.1 L345.9 248.8 L345.1 249.5 L344.3 250.3 L343.5 251.2 L342.8 252.1 L342.1 253.0 L341.5 254.0 L340.9 255.1 L340.3 256.1 L339.8 257.1 L339.4 258.1 L339.0 259.0 L338.7 260.0 L338.5 260.9 L338.3 261.9 L338.1 262.9 L338.0 263.8 L338.0 264.7 L338.0 265.7 L338.1 266.5 L338.2 267.4 L338.3 268.3 L338.6 269.1 L338.9 270.0 L339.2 270.8 L339.6 271.6 L340.1 272.4 L340.5 273.1 L341.1 273.8 L341.6 274.4 L342.1 275.0 L342.7 275.5 L343.3 276.0 L343.9 276.4 L344.6 276.8 L345.2 277.0 L345.9 277.2 L346.5 277.4 L347.2 277.5 L347.8 277.6 L348.4 277.7 L348.9 277.8 L349.5 277.8 L350.1 277.7 L350.7 277.6 L351.2 277.4 L351.7 277.3 L352.1 277.1 L352.5 276.9 L352.9 276.8 L353.1 276.7 L353.3 276.6 L352.7 274.6 L352.4 274.7 L352.1 274.8 L351.7 274.9 L351.4 275.1 L351.0 275.2 L350.6 275.3 L350.2 275.4 L349.8 275.4 L349.4 275.5 L349.1 275.4 L348.7 275.4 L348.2 275.3 L347.6 275.2 L347.1 275.1 L346.6 274.9 L346.1 274.7 L345.6 274.5 L345.1 274.3 L344.7 274.0 L344.3 273.7 L343.9 273.3 L343.5 272.8 L343.1 272.2 L342.7 271.7 L342.3 271.0 L341.9 270.4 L341.6 269.7 L341.3 269.0 L341.0 268.4 L340.9 267.7 L340.8 267.0 L340.7 266.3 L340.6 265.6 L340.6 264.8 L340.7 264.0 L340.8 263.2 L340.9 262.4 L341.1 261.6 L341.3 260.8 L341.6 260.0 L341.9 259.1 L342.3 258.2 L342.7 257.3 L343.3 256.4 L343.8 255.5 L344.4 254.6 L345.0 253.7 L345.6 252.9 L346.3 252.1 L346.9 251.5 L347.6 250.9 L348.4 250.3 L349.2 249.8 L350.1 249.3 L351.0 248.8 L351.9 248.4 L352.8 248.0 L353.7 247.7 L354.5 247.4 L355.2 247.1 L355.8 247.0 L356.3 246.8 L356.7 246.8 L357.1 246.7 L357.5 246.7 L357.9 246.8 L358.3 246.8 L358.8 246.9 L359.3 246.9 L359.8 247.0 L360.4 247.1 L361.0 247.2 L361.7 247.3 L362.3 247.5 L363.0 247.7 L363.7 247.9 L364.3 248.0 L364.9 248.2 L365.4 248.3 L365.8 248.4Z" fill="#f0f1ec"/>
<circle cx="353.6" cy="272.9" r="5.2" fill="#dadbd5"/>
<circle cx="353.6" cy="272.6" r="3.1" fill="#f0f1ec"/>
<path d="M401.1 249.4 L401.5 249.3 L402.0 249.2 L402.6 249.1 L403.2 249.0 L403.9 248.8 L404.6 248.7 L405.3 248.6 L405.9 248.5 L406.5 248.4 L407.0 248.4 L407.6 248.3 L408.1 248.3 L408.6 248.2 L408.9 248.2 L409.2 248.2 L409.5 248.3 L409.8 248.3 L410.1 248.4 L410.4 248.5 L410.9 248.7 L411.6 248.9 L412.3 249.2 L413.2 249.5 L414.0 249.9 L414.9 250.3 L415.7 250.8 L416.5 251.2 L417.3 251.7 L418.0 252.2 L418.6 252.7 L419.1 253.3 L419.7 253.9 L420.3 254.7 L420.8 255.5 L421.4 256.3 L421.9 257.2 L422.4 258.1 L422.8 258.9 L423.2 259.8 L423.5 260.5 L423.7 261.2 L423.9 262.0 L424.1 262.7 L424.2 263.4 L424.3 264.1 L424.3 264.8 L424.4 265.5 L424.3 266.2 L424.3 266.8 L424.2 267.4 L424.0 267.9 L423.9 268.5 L423.6 269.0 L423.3 269.6 L423.0 270.2 L422.7 270.8 L422.3 271.3 L421.9 271.8 L421.5 272.2 L421.2 272.5 L421.0 272.7 L420.7 272.9 L420.4 273.1 L420.0 273.3 L419.6 273.5 L419.1 273.6 L418.7 273.7 L418.2 273.9 L417.8 273.9 L417.4 274.0 L417.2 274.0 L417.0 274.1 L416.7 274.0 L416.4 274.0 L416.0 273.9 L415.7 273.8 L415.3 273.7 L415.0 273.6 L414.6 273.5 L414.3 273.4 L412.9 277.8 L413.1 277.9 L413.3 278.0 L413.6 278.1 L414.0 278.3 L414.5 278.5 L415.0 278.7 L415.6 278.9 L416.3 279.1 L417.1 279.2 L417.8 279.2 L418.4 279.1 L419.1 279.1 L419.7 279.0 L420.4 278.8 L421.2 278.7 L421.9 278.4 L422.7 278.1 L423.5 277.7 L424.2 277.3 L425.0 276.7 L425.6 276.1 L426.2 275.4 L426.8 274.7 L427.3 274.0 L427.9 273.2 L428.4 272.4 L428.8 271.5 L429.2 270.6 L429.6 269.6 L429.8 268.6 L430.0 267.7 L430.1 266.7 L430.2 265.7 L430.2 264.7 L430.2 263.7 L430.1 262.6 L429.9 261.6 L429.7 260.6 L429.5 259.5 L429.1 258.5 L428.7 257.4 L428.3 256.4 L427.7 255.3 L427.2 254.2 L426.5 253.2 L425.8 252.1 L425.1 251.1 L424.3 250.1 L423.5 249.2 L422.6 248.3 L421.7 247.5 L420.7 246.7 L419.6 246.1 L418.5 245.5 L417.5 245.0 L416.4 244.5 L415.4 244.1 L414.4 243.7 L413.5 243.4 L412.7 243.1 L411.8 242.9 L411.0 242.8 L410.2 242.7 L409.5 242.7 L408.8 242.8 L408.2 242.9 L407.7 243.0 L407.2 243.2 L406.7 243.3 L406.2 243.4 L405.5 243.6 L404.8 243.8 L404.1 244.1 L403.3 244.4 L402.6 244.7 L402.0 245.0 L401.4 245.2 L400.8 245.5 L400.4 245.6 L400.1 245.8Z" fill="#dadbd5"/>
<path d="M400.8 248.4 L401.2 248.3 L401.7 248.2 L402.3 248.0 L402.9 247.9 L403.6 247.7 L404.3 247.5 L404.9 247.3 L405.6 247.2 L406.2 247.1 L406.8 247.0 L407.3 246.9 L407.8 246.9 L408.3 246.8 L408.7 246.8 L409.1 246.7 L409.5 246.7 L409.9 246.8 L410.3 246.8 L410.8 247.0 L411.4 247.1 L412.1 247.4 L412.9 247.7 L413.8 248.0 L414.7 248.4 L415.6 248.8 L416.5 249.3 L417.4 249.8 L418.2 250.3 L419.0 250.9 L419.7 251.5 L420.3 252.1 L421.0 252.9 L421.6 253.7 L422.2 254.6 L422.8 255.5 L423.3 256.4 L423.9 257.3 L424.3 258.2 L424.7 259.1 L425.0 260.0 L425.3 260.8 L425.5 261.6 L425.7 262.4 L425.8 263.2 L425.9 264.0 L426.0 264.8 L426.0 265.6 L425.9 266.3 L425.8 267.0 L425.7 267.7 L425.6 268.4 L425.3 269.0 L425.0 269.7 L424.7 270.4 L424.3 271.0 L423.9 271.7 L423.5 272.2 L423.1 272.8 L422.7 273.3 L422.3 273.7 L421.9 274.0 L421.5 274.3 L421.0 274.5 L420.5 274.7 L420.0 274.9 L419.5 275.1 L419.0 275.2 L418.4 275.3 L417.9 275.4 L417.5 275.4 L417.2 275.5 L416.8 275.4 L416.4 275.4 L416.0 275.3 L415.6 275.2 L415.2 275.1 L414.9 274.9 L414.5 274.8 L414.2 274.7 L413.9 274.6 L413.3 276.6 L413.5 276.7 L413.7 276.8 L414.1 276.9 L414.5 277.1 L414.9 277.3 L415.4 277.4 L415.9 277.6 L416.5 277.7 L417.1 277.8 L417.7 277.8 L418.2 277.7 L418.8 277.6 L419.4 277.5 L420.1 277.4 L420.7 277.2 L421.4 277.0 L422.0 276.8 L422.7 276.4 L423.3 276.0 L423.9 275.5 L424.5 275.0 L425.0 274.4 L425.5 273.8 L426.1 273.1 L426.5 272.4 L427.0 271.6 L427.4 270.8 L427.7 270.0 L428.0 269.1 L428.3 268.3 L428.4 267.4 L428.5 266.5 L428.6 265.7 L428.6 264.7 L428.6 263.8 L428.5 262.9 L428.3 261.9 L428.1 260.9 L427.9 260.0 L427.6 259.0 L427.2 258.1 L426.8 257.1 L426.3 256.1 L425.7 255.1 L425.1 254.0 L424.5 253.0 L423.8 252.1 L423.1 251.2 L422.3 250.3 L421.5 249.5 L420.7 248.8 L419.7 248.1 L418.8 247.5 L417.8 246.9 L416.7 246.4 L415.7 246.0 L414.8 245.6 L413.8 245.2 L413.0 244.9 L412.2 244.7 L411.5 244.5 L410.8 244.3 L410.1 244.2 L409.5 244.2 L408.9 244.3 L408.4 244.4 L407.9 244.5 L407.4 244.6 L406.9 244.7 L406.4 244.8 L405.8 244.9 L405.1 245.1 L404.4 245.3 L403.7 245.6 L403.0 245.8 L402.3 246.1 L401.7 246.3 L401.2 246.5 L400.7 246.7 L400.4 246.8Z" fill="#f0f1ec"/>
<circle cx="413.0" cy="272.9" r="5.2" fill="#dadbd5"/>
<circle cx="413.0" cy="272.6" r="3.1" fill="#f0f1ec"/>
<path d="M363.3 225.0 L364.2 234.1 L373.9 236.0 L367.5 229.7Z" fill="#dadbd5"/>
<path d="M400.5 225.0 L399.6 234.1 L389.9 236.0 L396.3 229.7Z" fill="#dadbd5"/>
<path d="M380.2 210.0 L379.2 215.0 L377.4 220.5 L385.0 220.5 L381.8 215.0Z" fill="#dadbd5"/>
<path d="M363.3 225.0 L363.4 225.7 L363.5 226.7 L363.6 227.9 L363.7 229.1 L363.8 230.5 L363.9 231.8 L364.1 233.0 L364.2 234.1 L364.3 235.0 L364.4 235.9 L364.5 236.7 L364.6 237.4 L364.8 238.2 L364.9 238.9 L365.1 239.7 L365.3 240.6 L365.6 241.5 L365.9 242.5 L366.2 243.5 L366.5 244.5 L366.9 245.6 L367.3 246.6 L367.6 247.6 L368.0 248.5 L368.4 249.4 L368.8 250.4 L369.2 251.4 L369.6 252.4 L370.0 253.3 L370.3 254.1 L370.6 254.8 L370.8 255.3" fill="none" stroke="#dadbd5" stroke-width="5.3" stroke-linecap="round" stroke-linejoin="round"/><path d="M363.3 225.0 L363.4 225.7 L363.5 226.7 L363.6 227.9 L363.7 229.1 L363.8 230.5 L363.9 231.8 L364.1 233.0 L364.2 234.1 L364.3 235.0 L364.4 235.9 L364.5 236.7 L364.6 237.4 L364.8 238.2 L364.9 238.9 L365.1 239.7 L365.3 240.6 L365.6 241.5 L365.9 242.5 L366.2 243.5 L366.5 244.5 L366.9 245.6 L367.3 246.6 L367.6 247.6 L368.0 248.5 L368.4 249.4 L368.8 250.4 L369.2 251.4 L369.6 252.4 L370.0 253.3 L370.3 254.1 L370.6 254.8 L370.8 255.3" fill="none" stroke="#f0f1ec" stroke-width="2.4" stroke-linecap="round"/>
<path d="M363.3 225.0 L363.6 225.4 L364.0 225.8 L364.5 226.3 L365.0 227.0 L365.6 227.6 L366.2 228.3 L366.8 229.0 L367.5 229.7 L368.2 230.4 L369.0 231.2 L369.8 232.0 L370.6 232.8 L371.4 233.6 L372.3 234.4 L373.1 235.2 L373.9 236.0 L374.7 236.8 L375.5 237.6 L376.3 238.4 L377.0 239.2 L377.8 240.0 L378.5 240.7 L379.2 241.4 L379.8 242.0 L380.4 242.6 L380.9 243.1 L381.5 243.5 L382.0 244.0 L382.4 244.4 L382.8 244.7 L383.1 245.0 L383.4 245.2" fill="none" stroke="#dadbd5" stroke-width="5.3" stroke-linecap="round" stroke-linejoin="round"/><path d="M363.3 225.0 L363.6 225.4 L364.0 225.8 L364.5 226.3 L365.0 227.0 L365.6 227.6 L366.2 228.3 L366.8 229.0 L367.5 229.7 L368.2 230.4 L369.0 231.2 L369.8 232.0 L370.6 232.8 L371.4 233.6 L372.3 234.4 L373.1 235.2 L373.9 236.0 L374.7 236.8 L375.5 237.6 L376.3 238.4 L377.0 239.2 L377.8 240.0 L378.5 240.7 L379.2 241.4 L379.8 242.0 L380.4 242.6 L380.9 243.1 L381.5 243.5 L382.0 244.0 L382.4 244.4 L382.8 244.7 L383.1 245.0 L383.4 245.2" fill="none" stroke="#f0f1ec" stroke-width="2.4" stroke-linecap="round"/>
<path d="M400.5 225.0 L400.4 225.7 L400.3 226.7 L400.2 227.9 L400.1 229.1 L400.0 230.5 L399.9 231.8 L399.7 233.0 L399.6 234.1 L399.5 235.0 L399.4 235.9 L399.3 236.7 L399.2 237.4 L399.0 238.2 L398.9 238.9 L398.7 239.7 L398.5 240.6 L398.2 241.5 L397.9 242.5 L397.6 243.5 L397.3 244.5 L396.9 245.6 L396.5 246.6 L396.2 247.6 L395.8 248.5 L395.4 249.4 L395.0 250.4 L394.6 251.4 L394.2 252.4 L393.8 253.3 L393.5 254.1 L393.2 254.8 L393.0 255.3" fill="none" stroke="#dadbd5" stroke-width="5.3" stroke-linecap="round" stroke-linejoin="round"/><path d="M400.5 225.0 L400.4 225.7 L400.3 226.7 L400.2 227.9 L400.1 229.1 L400.0 230.5 L399.9 231.8 L399.7 233.0 L399.6 234.1 L399.5 235.0 L399.4 235.9 L399.3 236.7 L399.2 237.4 L399.0 238.2 L398.9 238.9 L398.7 239.7 L398.5 240.6 L398.2 241.5 L397.9 242.5 L397.6 243.5 L397.3 244.5 L396.9 245.6 L396.5 246.6 L396.2 247.6 L395.8 248.5 L395.4 249.4 L395.0 250.4 L394.6 251.4 L394.2 252.4 L393.8 253.3 L393.5 254.1 L393.2 254.8 L393.0 255.3" fill="none" stroke="#f0f1ec" stroke-width="2.4" stroke-linecap="round"/>
<path d="M400.5 225.0 L400.2 225.4 L399.8 225.8 L399.3 226.3 L398.8 227.0 L398.2 227.6 L397.6 228.3 L397.0 229.0 L396.3 229.7 L395.6 230.4 L394.8 231.2 L394.0 232.0 L393.2 232.8 L392.4 233.6 L391.5 234.4 L390.7 235.2 L389.9 236.0 L389.1 236.8 L388.3 237.6 L387.5 238.4 L386.8 239.2 L386.0 240.0 L385.3 240.7 L384.6 241.4 L384.0 242.0 L383.4 242.6 L382.9 243.1 L382.3 243.5 L381.8 244.0 L381.4 244.4 L381.0 244.7 L380.7 245.0 L380.4 245.2" fill="none" stroke="#dadbd5" stroke-width="5.3" stroke-linecap="round" stroke-linejoin="round"/><path d="M400.5 225.0 L400.2 225.4 L399.8 225.8 L399.3 226.3 L398.8 227.0 L398.2 227.6 L397.6 228.3 L397.0 229.0 L396.3 229.7 L395.6 230.4 L394.8 231.2 L394.0 232.0 L393.2 232.8 L392.4 233.6 L391.5 234.4 L390.7 235.2 L389.9 236.0 L389.1 236.8 L388.3 237.6 L387.5 238.4 L386.8 239.2 L386.0 240.0 L385.3 240.7 L384.6 241.4 L384.0 242.0 L383.4 242.6 L382.9 243.1 L382.3 243.5 L381.8 244.0 L381.4 244.4 L381.0 244.7 L380.7 245.0 L380.4 245.2" fill="none" stroke="#f0f1ec" stroke-width="2.4" stroke-linecap="round"/>
<path d="M380.2 210.0 L380.1 210.4 L380.0 210.9 L379.9 211.5 L379.8 212.2 L379.7 212.9 L379.5 213.6 L379.4 214.3 L379.2 215.0 L379.0 215.7 L378.8 216.3 L378.6 217.0 L378.4 217.7 L378.1 218.4 L377.9 219.1 L377.6 219.8 L377.4 220.5 L377.2 221.2 L376.9 222.0 L376.6 222.7 L376.4 223.5 L376.1 224.2 L375.9 225.0 L375.7 225.7 L375.6 226.5 L375.5 227.3 L375.5 228.0 L375.4 228.8 L375.5 229.6 L375.5 230.4 L375.6 231.2 L375.8 232.0 L376.0 232.8 L376.3 233.7 L376.7 234.6 L377.1 235.5 L377.6 236.5 L378.1 237.4 L378.6 238.3 L379.1 239.2 L379.6 240.0 L380.1 240.7 L380.5 241.3 L381.0 241.9 L381.4 242.5 L381.9 243.0 L382.4 243.6 L382.9 244.2 L383.4 244.8 L384.0 245.5 L384.6 246.3 L385.3 247.1 L385.9 248.0 L386.6 248.7 L387.2 249.5 L387.6 250.1 L388.0 250.5" fill="none" stroke="#dadbd5" stroke-width="5.3" stroke-linecap="round" stroke-linejoin="round"/><path d="M380.2 210.0 L380.1 210.4 L380.0 210.9 L379.9 211.5 L379.8 212.2 L379.7 212.9 L379.5 213.6 L379.4 214.3 L379.2 215.0 L379.0 215.7 L378.8 216.3 L378.6 217.0 L378.4 217.7 L378.1 218.4 L377.9 219.1 L377.6 219.8 L377.4 220.5 L377.2 221.2 L376.9 222.0 L376.6 222.7 L376.4 223.5 L376.1 224.2 L375.9 225.0 L375.7 225.7 L375.6 226.5 L375.5 227.3 L375.5 228.0 L375.4 228.8 L375.5 229.6 L375.5 230.4 L375.6 231.2 L375.8 232.0 L376.0 232.8 L376.3 233.7 L376.7 234.6 L377.1 235.5 L377.6 236.5 L378.1 237.4 L378.6 238.3 L379.1 239.2 L379.6 240.0 L380.1 240.7 L380.5 241.3 L381.0 241.9 L381.4 242.5 L381.9 243.0 L382.4 243.6 L382.9 244.2 L383.4 244.8 L384.0 245.5 L384.6 246.3 L385.3 247.1 L385.9 248.0 L386.6 248.7 L387.2 249.5 L387.6 250.1 L388.0 250.5" fill="none" stroke="#f0f1ec" stroke-width="2.4" stroke-linecap="round"/>
<path d="M380.2 210.0 L380.3 210.4 L380.4 210.9 L380.6 211.5 L380.8 212.2 L381.0 212.9 L381.2 213.6 L381.5 214.3 L381.8 215.0 L382.1 215.7 L382.5 216.3 L382.8 217.0 L383.2 217.7 L383.6 218.3 L384.1 219.0 L384.5 219.8 L385.0 220.5 L385.5 221.3 L386.1 222.0 L386.7 222.9 L387.4 223.7 L388.0 224.5 L388.6 225.3 L389.0 226.1 L389.4 226.9 L389.7 227.7 L389.9 228.4 L390.0 229.1 L390.1 229.8 L390.1 230.5 L390.1 231.2 L390.0 232.0 L389.8 232.8 L389.6 233.7 L389.3 234.6 L388.9 235.5 L388.4 236.5 L388.0 237.4 L387.5 238.3 L387.0 239.2 L386.5 240.0 L386.0 240.7 L385.5 241.3 L385.0 241.9 L384.5 242.5 L384.0 243.0 L383.5 243.6 L382.9 244.2 L382.4 244.8 L381.8 245.5 L381.2 246.3 L380.6 247.1 L379.9 248.0 L379.3 248.7 L378.8 249.5 L378.3 250.1 L378.0 250.5" fill="none" stroke="#dadbd5" stroke-width="5.3" stroke-linecap="round" stroke-linejoin="round"/><path d="M380.2 210.0 L380.3 210.4 L380.4 210.9 L380.6 211.5 L380.8 212.2 L381.0 212.9 L381.2 213.6 L381.5 214.3 L381.8 215.0 L382.1 215.7 L382.5 216.3 L382.8 217.0 L383.2 217.7 L383.6 218.3 L384.1 219.0 L384.5 219.8 L385.0 220.5 L385.5 221.3 L386.1 222.0 L386.7 222.9 L387.4 223.7 L388.0 224.5 L388.6 225.3 L389.0 226.1 L389.4 226.9 L389.7 227.7 L389.9 228.4 L390.0 229.1 L390.1 229.8 L390.1 230.5 L390.1 231.2 L390.0 232.0 L389.8 232.8 L389.6 233.7 L389.3 234.6 L388.9 235.5 L388.4 236.5 L388.0 237.4 L387.5 238.3 L387.0 239.2 L386.5 240.0 L386.0 240.7 L385.5 241.3 L385.0 241.9 L384.5 242.5 L384.0 243.0 L383.5 243.6 L382.9 244.2 L382.4 244.8 L381.8 245.5 L381.2 246.3 L380.6 247.1 L379.9 248.0 L379.3 248.7 L378.8 249.5 L378.3 250.1 L378.0 250.5" fill="none" stroke="#f0f1ec" stroke-width="2.4" stroke-linecap="round"/></g>
<path d="M382.9 248.3 L402.7 262.5 L402.7 368.6 L508.8 368.6 L522.4 386.8 L509.0 407.7 L402.7 407.7 L402.5 590.0 L382.2 605.1 L364.2 590.0 L364.0 407.7 L257.0 407.7 L242.4 386.4 L257.2 368.6 L364.0 368.6 L364.0 262.5Z" fill="#000"/>
<path d="M377.8 261.0 V589.0" stroke="#e2e2ea" stroke-width="1.15" stroke-dasharray="3.4 0.55" fill="none"/>
<path d="M382.9 256.5 V592.5" stroke="#e2e2ea" stroke-width="1.15" stroke-dasharray="3.4 0.55" fill="none"/>
<path d="M387.9 260.0 V589.0" stroke="#e2e2ea" stroke-width="1.15" stroke-dasharray="3.4 0.55" fill="none"/>
<path d="M257.5 383.1 H509.5" stroke="#e2e2ea" stroke-width="1.15" stroke-dasharray="3.4 0.55" fill="none"/>
<path d="M255.0 387.9 H512.0" stroke="#e2e2ea" stroke-width="1.15" stroke-dasharray="3.4 0.55" fill="none"/>
<path d="M257.5 392.9 H509.0" stroke="#e2e2ea" stroke-width="1.15" stroke-dasharray="3.4 0.55" fill="none"/>
<circle cx="361.2" cy="361.4" r="2.9" fill="none" stroke="#d0cc86" stroke-width="3.0"/>
<circle cx="361.2" cy="361.4" r="2.9" fill="none" stroke="#e9e5a3" stroke-width="1.1" opacity="0.8"/>
<circle cx="404.6" cy="362.6" r="2.9" fill="none" stroke="#d0cc86" stroke-width="3.0"/>
<circle cx="404.6" cy="362.6" r="2.9" fill="none" stroke="#e9e5a3" stroke-width="1.1" opacity="0.8"/>
<circle cx="360.2" cy="411.4" r="2.9" fill="none" stroke="#d0cc86" stroke-width="3.0"/>
<circle cx="360.2" cy="411.4" r="2.9" fill="none" stroke="#e9e5a3" stroke-width="1.1" opacity="0.8"/>
<circle cx="406.8" cy="410.2" r="2.9" fill="none" stroke="#d0cc86" stroke-width="3.0"/>
<circle cx="406.8" cy="410.2" r="2.9" fill="none" stroke="#e9e5a3" stroke-width="1.1" opacity="0.8"/>
<path d="M382.9 248.3 L402.7 262.5 L402.7 368.6 L508.8 368.6 L522.4 386.8 L509.0 407.7 L402.7 407.7 L402.5 590.0 L382.2 605.1 L364.2 590.0 L364.0 407.7 L257.0 407.7 L242.4 386.4 L257.2 368.6 L364.0 368.6 L364.0 262.5Z M382.9 257.4 L392.3 265.2 L392.3 379.4 L504.8 379.4 L511.4 387.2 L504.6 396.8 L392.3 396.8 L392.1 584.6 L382.2 591.8 L374.7 584.6 L374.7 396.8 L261.6 396.8 L255.6 387.2 L261.6 379.4 L374.7 379.4 L374.7 265.4Z" fill="#d0cc86" fill-rule="evenodd"/>
<path d="M382.9 248.3 L402.7 262.5 L402.7 368.6 L508.8 368.6 L522.4 386.8 L509.0 407.7 L402.7 407.7 L402.5 590.0 L382.2 605.1 L364.2 590.0 L364.0 407.7 L257.0 407.7 L242.4 386.4 L257.2 368.6 L364.0 368.6 L364.0 262.5Z" fill="none" stroke="#9c9858" stroke-width="1.3" stroke-linejoin="miter" opacity="0.55"/>
<path d="M382.9 257.4 L392.3 265.2 L392.3 379.4 L504.8 379.4 L511.4 387.2 L504.6 396.8 L392.3 396.8 L392.1 584.6 L382.2 591.8 L374.7 584.6 L374.7 396.8 L261.6 396.8 L255.6 387.2 L261.6 379.4 L374.7 379.4 L374.7 265.4Z" fill="none" stroke="#9c9858" stroke-width="1.0" stroke-linejoin="miter" opacity="0.45"/>
<path d="M382.9 252.8 L397.5 263.9 L397.5 374.0 L506.8 374.0 L516.9 387.0 L506.8 402.2 L397.5 402.2 L397.3 587.3 L382.2 598.5 L369.4 587.3 L369.4 402.2 L259.3 402.2 L249.0 386.8 L259.4 374.0 L369.4 374.0 L369.4 263.9Z" fill="none" stroke="#e9e5a3" stroke-width="4.6" stroke-linejoin="round" opacity="0.7" filter="url(#sheen)"/>
<path d="M316.2 491.4 L316.0 491.8 L315.7 492.4 L315.3 493.1 L315.0 493.9 L314.5 494.7 L314.1 495.7 L313.7 496.6 L313.3 497.6 L313.0 498.5 L312.7 499.5 L312.5 500.4 L312.4 501.3 L312.2 502.1 L312.2 503.0 L312.1 503.8 L312.1 504.6 L312.0 505.4 L312.0 506.3 L312.0 507.1 L312.0 508.0 L312.1 508.9 L312.1 510.0 L312.2 511.0 L312.2 512.0 L312.3 513.1 L312.4 514.1 L312.5 515.2 L312.6 516.2 L312.7 517.1 L312.8 518.0 L312.9 518.9 L313.0 519.8 L313.1 520.7 L313.2 521.7 L313.4 522.6 L313.5 523.4 L313.6 524.2 L313.7 524.9 L313.7 525.5 L313.8 526.0 L316.4 526.0 L316.5 525.6 L316.6 525.0 L316.7 524.3 L316.9 523.5 L317.1 522.7 L317.2 521.8 L317.4 520.8 L317.6 519.9 L317.7 518.9 L317.8 518.0 L317.9 517.0 L317.9 516.0 L318.0 515.0 L318.0 514.0 L318.0 512.9 L318.1 511.9 L318.1 510.8 L318.1 509.9 L318.1 508.9 L318.2 508.0 L318.2 507.1 L318.2 506.3 L318.2 505.5 L318.2 504.7 L318.2 504.0 L318.2 503.3 L318.2 502.6 L318.2 501.9 L318.2 501.2 L318.3 500.5 L318.4 499.8 L318.5 499.0 L318.6 498.1 L318.8 497.2 L319.0 496.3 L319.2 495.4 L319.4 494.5 L319.6 493.8 L319.7 493.1 L319.8 492.6Z" fill="#d9989f" stroke="#9e6069" stroke-width="0.9" stroke-opacity="0.55"/><path d="M316.9 491.6 L316.8 492.1 L316.5 492.7 L316.2 493.4 L315.8 494.2 L315.5 495.1 L315.1 496.0 L314.7 496.9 L314.4 497.9 L314.1 498.8 L313.9 499.7 L313.7 500.6 L313.6 501.4 L313.5 502.2 L313.4 503.0 L313.4 503.8 L313.3 504.6 L313.3 505.4 L313.3 506.3 L313.3 507.1 L313.3 508.0 L313.3 508.9 L313.4 509.9 L313.4 511.0 L313.5 512.0 L313.5 513.1 L313.6 514.1 L313.7 515.1 L313.7 516.1 L313.8 517.1 L313.9 518.0 L313.9 518.9 L314.0 519.8 L314.0 520.8 L314.1 521.7 L314.1 522.6 L314.2 523.4 L314.2 524.2 L314.3 524.9 L314.3 525.5 L314.3 526.0 L316.1 526.0 L316.1 525.6 L316.2 525.0 L316.3 524.3 L316.5 523.5 L316.6 522.7 L316.7 521.8 L316.8 520.8 L317.0 519.9 L317.1 518.9 L317.1 518.0 L317.2 517.0 L317.2 516.1 L317.3 515.0 L317.3 514.0 L317.3 512.9 L317.3 511.9 L317.3 510.9 L317.3 509.9 L317.3 508.9 L317.4 508.0 L317.4 507.1 L317.4 506.3 L317.4 505.5 L317.4 504.7 L317.4 503.9 L317.4 503.2 L317.4 502.5 L317.4 501.8 L317.5 501.1 L317.6 500.4 L317.7 499.6 L317.8 498.8 L318.0 497.9 L318.2 497.0 L318.4 496.1 L318.7 495.2 L318.9 494.3 L319.1 493.6 L319.2 493.0 L319.3 492.4Z" fill="#e6abb3" opacity="0.55"/><path d="M317.6 491.9 L317.4 492.3 L317.2 492.9 L316.9 493.7 L316.6 494.5 L316.3 495.3 L316.0 496.2 L315.6 497.2 L315.3 498.1 L315.1 499.0 L314.9 499.9 L314.7 500.7 L314.6 501.5 L314.6 502.3 L314.5 503.1 L314.5 503.9 L314.4 504.6 L314.4 505.4 L314.4 506.3 L314.4 507.1 L314.4 508.0 L314.4 508.9 L314.4 509.9 L314.5 510.9 L314.5 512.0 L314.6 513.0 L314.6 514.1 L314.7 515.1 L314.7 516.1 L314.7 517.1 L314.8 518.0 L314.8 518.9 L314.8 519.8 L314.8 520.8 L314.8 521.7 L314.8 522.6 L314.8 523.5 L314.8 524.2 L314.8 524.9 L314.8 525.5 L314.8 526.0 L315.7 526.0 L315.7 525.6 L315.8 525.0 L315.9 524.3 L316.0 523.5 L316.1 522.7 L316.2 521.8 L316.2 520.8 L316.3 519.9 L316.4 518.9 L316.4 518.0 L316.5 517.1 L316.5 516.1 L316.5 515.0 L316.5 514.0 L316.5 513.0 L316.5 511.9 L316.5 510.9 L316.5 509.9 L316.5 508.9 L316.5 508.0 L316.5 507.1 L316.5 506.3 L316.5 505.5 L316.5 504.7 L316.5 503.9 L316.5 503.2 L316.6 502.4 L316.6 501.7 L316.7 501.0 L316.8 500.2 L316.9 499.5 L317.1 498.6 L317.3 497.7 L317.5 496.8 L317.8 495.8 L318.1 495.0 L318.3 494.1 L318.5 493.4 L318.7 492.8 L318.8 492.3Z" fill="#f2c5c8" opacity="0.9"/>
<path d="M382.2 387.9 L381.7 388.2 L381.0 388.7 L380.2 389.1 L379.4 389.7 L378.4 390.2 L377.4 390.8 L376.4 391.5 L375.2 392.1 L374.1 392.7 L372.9 393.3 L371.6 393.9 L370.2 394.5 L368.5 395.2 L366.8 395.8 L365.0 396.5 L363.2 397.3 L361.4 398.1 L359.6 399.0 L357.9 399.9 L356.4 401.0 L355.1 402.2 L353.9 403.4 L352.8 404.7 L351.8 406.0 L350.9 407.4 L350.2 408.7 L349.4 410.1 L348.8 411.4 L348.2 412.6 L347.7 413.8 L347.2 415.1 L346.8 416.3 L346.4 417.5 L346.1 418.7 L345.9 419.8 L345.8 421.0 L345.6 422.2 L345.6 423.4 L345.5 424.6 L345.4 425.9 L345.4 427.3 L345.5 428.8 L345.6 430.3 L345.7 431.8 L345.9 433.3 L346.0 434.8 L346.2 436.3 L346.3 437.8 L346.5 439.2 L346.5 440.7 L346.6 442.2 L346.7 443.7 L346.8 445.3 L346.9 446.8 L347.0 448.2 L347.1 449.7 L347.1 451.0 L347.1 452.3 L347.0 453.4 L346.9 454.5 L346.7 455.6 L346.5 456.6 L346.2 457.6 L345.9 458.6 L345.6 459.6 L345.3 460.5 L344.9 461.5 L344.4 462.4 L343.9 463.4 L343.4 464.4 L342.8 465.3 L342.2 466.3 L341.5 467.2 L340.7 468.2 L339.9 469.2 L339.0 470.2 L338.2 471.1 L337.3 472.1 L336.5 473.0 L335.7 473.9 L335.0 474.7 L334.3 475.5 L333.5 476.3 L332.7 477.1 L331.9 477.9 L331.2 478.6 L330.4 479.4 L329.7 480.1 L329.0 480.7 L328.3 481.3 L327.8 481.9 L327.3 482.3 L326.9 482.7 L326.6 483.1 L326.2 483.4 L325.9 483.7 L325.6 484.0 L325.2 484.2 L324.9 484.5 L324.5 484.8 L324.1 485.0 L323.7 485.1 L323.2 485.3 L322.8 485.4 L322.3 485.5 L321.8 485.6 L321.2 485.8 L320.7 486.0 L320.1 486.3 L319.4 486.7 L318.9 487.1 L318.3 487.5 L317.7 487.9 L317.0 488.4 L316.4 488.9 L315.8 489.4 L315.1 490.0 L314.5 490.6 L313.9 491.3 L313.3 492.0 L312.7 492.7 L312.0 493.5 L311.4 494.4 L310.8 495.3 L310.2 496.2 L309.6 497.1 L309.1 498.0 L308.5 499.0 L308.0 499.9 L307.6 500.9 L307.1 501.8 L306.8 502.8 L306.4 503.8 L306.1 504.7 L305.9 505.7 L305.6 506.6 L305.4 507.6 L305.2 508.5 L305.1 509.3 L304.9 510.2 L304.8 511.0 L304.7 512.0 L304.6 512.9 L304.5 513.7 L304.5 514.6 L304.5 515.4 L304.5 516.1 L304.5 516.7 L304.5 517.3 L304.4 517.7 L307.0 518.3 L307.1 517.9 L307.4 517.4 L307.7 516.8 L308.0 516.2 L308.3 515.5 L308.6 514.8 L309.0 514.0 L309.4 513.3 L309.7 512.5 L310.1 511.8 L310.4 511.1 L310.8 510.3 L311.2 509.6 L311.6 508.8 L312.0 508.0 L312.4 507.2 L312.8 506.4 L313.2 505.6 L313.6 504.9 L314.0 504.1 L314.5 503.3 L314.9 502.5 L315.4 501.7 L315.9 500.8 L316.4 500.0 L316.9 499.1 L317.4 498.3 L317.8 497.5 L318.3 496.7 L318.7 496.0 L319.1 495.3 L319.5 494.7 L319.9 494.1 L320.3 493.5 L320.7 492.9 L321.1 492.3 L321.5 491.8 L321.8 491.2 L322.2 490.7 L322.6 490.3 L322.9 489.9 L323.1 489.6 L323.4 489.2 L323.7 488.9 L324.0 488.6 L324.3 488.3 L324.7 488.0 L325.1 487.7 L325.5 487.4 L325.9 487.0 L326.3 486.8 L326.7 486.5 L327.1 486.3 L327.5 486.2 L327.9 486.0 L328.4 485.8 L328.9 485.6 L329.4 485.3 L330.0 485.0 L330.7 484.7 L331.4 484.3 L332.3 483.9 L333.2 483.5 L334.2 483.0 L335.2 482.5 L336.3 482.0 L337.4 481.4 L338.5 480.7 L339.6 479.9 L340.7 479.1 L341.7 478.3 L342.7 477.4 L343.7 476.4 L344.7 475.4 L345.7 474.3 L346.7 473.2 L347.6 472.1 L348.6 470.9 L349.4 469.6 L350.2 468.4 L350.9 467.2 L351.5 466.0 L352.1 464.8 L352.7 463.6 L353.2 462.3 L353.6 461.0 L354.0 459.6 L354.3 458.2 L354.6 456.8 L354.7 455.3 L354.8 453.7 L354.7 452.1 L354.6 450.5 L354.4 449.0 L354.1 447.4 L353.8 445.9 L353.5 444.4 L353.3 442.9 L353.0 441.5 L352.9 440.1 L352.7 438.6 L352.5 437.1 L352.3 435.6 L352.1 434.1 L351.9 432.7 L351.8 431.2 L351.7 429.8 L351.6 428.5 L351.5 427.3 L351.6 426.1 L351.6 424.9 L351.6 423.8 L351.7 422.7 L351.8 421.8 L352.0 420.8 L352.1 419.9 L352.3 419.0 L352.6 418.1 L352.9 417.2 L353.3 416.2 L353.8 415.1 L354.3 413.9 L354.8 412.7 L355.4 411.6 L356.0 410.4 L356.7 409.3 L357.4 408.2 L358.2 407.2 L359.1 406.3 L360.0 405.4 L361.0 404.6 L362.3 403.7 L363.8 402.9 L365.4 402.1 L367.0 401.3 L368.8 400.5 L370.5 399.7 L372.1 398.9 L373.7 398.1 L375.1 397.3 L376.4 396.4 L377.5 395.6 L378.6 394.7 L379.6 393.9 L380.5 393.1 L381.4 392.3 L382.1 391.6 L382.8 391.0 L383.3 390.5 L383.8 390.1Z" fill="#d9989f" stroke="#9e6069" stroke-width="0.9" stroke-opacity="0.55"/><path d="M382.5 388.4 L382.0 388.7 L381.4 389.1 L380.6 389.7 L379.8 390.2 L378.9 390.8 L377.9 391.5 L376.8 392.1 L375.7 392.8 L374.6 393.5 L373.4 394.2 L372.1 394.8 L370.6 395.4 L368.9 396.1 L367.2 396.8 L365.4 397.5 L363.6 398.3 L361.9 399.1 L360.2 400.0 L358.6 400.9 L357.2 401.9 L355.9 403.0 L354.8 404.2 L353.8 405.5 L352.8 406.7 L352.0 408.0 L351.3 409.3 L350.6 410.6 L350.0 411.9 L349.4 413.1 L348.9 414.3 L348.4 415.5 L348.0 416.7 L347.7 417.8 L347.4 418.9 L347.2 420.1 L347.0 421.2 L346.9 422.3 L346.8 423.5 L346.8 424.7 L346.7 426.0 L346.7 427.3 L346.8 428.7 L346.9 430.2 L347.0 431.7 L347.1 433.2 L347.3 434.7 L347.5 436.2 L347.6 437.7 L347.8 439.1 L347.9 440.6 L348.0 442.1 L348.1 443.6 L348.3 445.1 L348.4 446.6 L348.5 448.1 L348.6 449.5 L348.7 450.9 L348.7 452.2 L348.6 453.5 L348.5 454.7 L348.3 455.8 L348.1 456.9 L347.9 458.0 L347.6 459.1 L347.2 460.1 L346.8 461.2 L346.4 462.2 L345.9 463.2 L345.4 464.2 L344.8 465.2 L344.2 466.2 L343.5 467.2 L342.8 468.2 L342.0 469.3 L341.1 470.3 L340.2 471.3 L339.3 472.2 L338.4 473.2 L337.6 474.1 L336.8 475.0 L336.0 475.8 L335.2 476.6 L334.3 477.4 L333.5 478.1 L332.6 478.8 L331.8 479.6 L331.0 480.2 L330.2 480.9 L329.5 481.5 L328.8 482.0 L328.2 482.5 L327.8 483.0 L327.3 483.3 L326.9 483.7 L326.6 484.0 L326.2 484.2 L325.9 484.5 L325.6 484.7 L325.2 485.0 L324.8 485.2 L324.4 485.5 L324.0 485.7 L323.5 485.8 L323.1 486.0 L322.7 486.1 L322.2 486.3 L321.7 486.5 L321.2 486.8 L320.6 487.1 L320.1 487.5 L319.6 487.9 L319.0 488.3 L318.5 488.7 L317.9 489.2 L317.3 489.7 L316.7 490.3 L316.1 490.9 L315.6 491.5 L315.0 492.1 L314.4 492.8 L313.8 493.6 L313.3 494.4 L312.7 495.2 L312.1 496.1 L311.5 497.0 L310.9 497.9 L310.4 498.8 L309.9 499.7 L309.4 500.7 L308.9 501.6 L308.5 502.5 L308.1 503.4 L307.8 504.3 L307.5 505.3 L307.2 506.2 L306.9 507.1 L306.6 508.0 L306.4 508.8 L306.2 509.7 L306.0 510.5 L305.8 511.4 L305.7 512.2 L305.5 513.1 L305.4 513.9 L305.3 514.8 L305.2 515.5 L305.1 516.2 L305.1 516.9 L305.0 517.4 L305.0 517.8 L306.6 518.2 L306.8 517.8 L307.0 517.3 L307.2 516.7 L307.5 516.1 L307.8 515.4 L308.1 514.6 L308.4 513.9 L308.8 513.1 L309.1 512.3 L309.4 511.6 L309.7 510.9 L310.1 510.1 L310.5 509.3 L310.8 508.5 L311.2 507.7 L311.6 506.9 L312.0 506.1 L312.4 505.3 L312.8 504.5 L313.2 503.7 L313.6 502.9 L314.1 502.1 L314.6 501.2 L315.1 500.3 L315.6 499.5 L316.1 498.6 L316.6 497.8 L317.1 497.0 L317.6 496.2 L318.0 495.5 L318.5 494.8 L318.9 494.2 L319.3 493.5 L319.7 492.9 L320.2 492.4 L320.6 491.8 L321.0 491.3 L321.4 490.8 L321.8 490.3 L322.1 489.8 L322.5 489.4 L322.8 489.1 L323.1 488.8 L323.4 488.5 L323.8 488.2 L324.1 487.9 L324.5 487.6 L324.9 487.3 L325.3 487.0 L325.7 486.7 L326.1 486.5 L326.5 486.2 L326.9 486.0 L327.3 485.8 L327.7 485.6 L328.1 485.4 L328.6 485.2 L329.1 484.9 L329.7 484.6 L330.4 484.2 L331.1 483.8 L331.9 483.4 L332.8 482.9 L333.8 482.5 L334.8 481.9 L335.8 481.3 L336.9 480.7 L338.0 480.0 L339.0 479.3 L340.0 478.4 L341.0 477.6 L342.0 476.7 L343.0 475.7 L344.0 474.7 L344.9 473.7 L345.9 472.6 L346.8 471.4 L347.7 470.3 L348.6 469.1 L349.3 467.9 L350.0 466.7 L350.6 465.6 L351.2 464.4 L351.7 463.2 L352.2 461.9 L352.6 460.7 L353.0 459.4 L353.3 458.0 L353.5 456.6 L353.7 455.2 L353.8 453.7 L353.7 452.1 L353.6 450.6 L353.4 449.1 L353.2 447.5 L352.9 446.0 L352.7 444.5 L352.4 443.0 L352.2 441.6 L352.0 440.2 L351.9 438.7 L351.7 437.2 L351.5 435.7 L351.3 434.2 L351.2 432.7 L351.0 431.3 L350.9 429.9 L350.8 428.5 L350.8 427.3 L350.8 426.0 L350.8 424.9 L350.9 423.7 L350.9 422.7 L351.0 421.7 L351.2 420.7 L351.4 419.8 L351.6 418.8 L351.8 417.9 L352.2 416.9 L352.6 415.9 L353.1 414.7 L353.6 413.6 L354.1 412.4 L354.7 411.2 L355.4 410.0 L356.1 408.9 L356.8 407.8 L357.7 406.7 L358.6 405.7 L359.5 404.8 L360.6 404.0 L362.0 403.1 L363.5 402.3 L365.1 401.5 L366.8 400.7 L368.5 399.9 L370.2 399.1 L371.9 398.3 L373.4 397.6 L374.8 396.8 L376.1 396.0 L377.2 395.1 L378.3 394.3 L379.3 393.5 L380.3 392.7 L381.1 392.0 L381.9 391.3 L382.6 390.7 L383.1 390.2 L383.6 389.8Z" fill="#e6abb3" opacity="0.55"/><path d="M382.8 388.8 L382.3 389.1 L381.7 389.6 L381.0 390.1 L380.2 390.7 L379.3 391.3 L378.3 392.0 L377.2 392.7 L376.1 393.5 L375.0 394.2 L373.8 394.9 L372.4 395.5 L370.9 396.2 L369.3 396.9 L367.6 397.6 L365.8 398.4 L364.0 399.2 L362.3 400.0 L360.7 400.8 L359.1 401.7 L357.8 402.7 L356.6 403.8 L355.6 404.9 L354.6 406.1 L353.7 407.3 L352.9 408.6 L352.2 409.8 L351.5 411.1 L350.9 412.3 L350.4 413.6 L349.9 414.7 L349.4 415.9 L349.0 417.0 L348.7 418.1 L348.5 419.2 L348.3 420.2 L348.1 421.3 L348.0 422.4 L347.9 423.6 L347.9 424.7 L347.8 426.0 L347.8 427.3 L347.9 428.7 L348.0 430.1 L348.1 431.6 L348.2 433.1 L348.4 434.5 L348.6 436.0 L348.7 437.5 L348.9 439.0 L349.0 440.5 L349.1 441.9 L349.3 443.4 L349.5 444.9 L349.6 446.4 L349.8 447.9 L349.9 449.4 L350.0 450.8 L350.1 452.2 L350.0 453.5 L349.9 454.8 L349.8 456.0 L349.5 457.2 L349.3 458.4 L348.9 459.5 L348.6 460.6 L348.2 461.7 L347.7 462.8 L347.2 463.8 L346.6 464.9 L346.1 466.0 L345.4 467.0 L344.7 468.1 L343.9 469.1 L343.0 470.2 L342.2 471.2 L341.2 472.2 L340.3 473.2 L339.4 474.1 L338.5 475.1 L337.7 475.9 L336.8 476.7 L335.9 477.5 L335.0 478.3 L334.1 479.0 L333.2 479.7 L332.3 480.3 L331.5 481.0 L330.7 481.6 L329.9 482.1 L329.2 482.6 L328.6 483.1 L328.1 483.5 L327.7 483.8 L327.3 484.1 L326.9 484.4 L326.5 484.7 L326.2 484.9 L325.8 485.1 L325.4 485.4 L325.0 485.6 L324.6 485.9 L324.2 486.1 L323.8 486.3 L323.4 486.5 L323.0 486.7 L322.5 486.9 L322.1 487.1 L321.6 487.4 L321.1 487.7 L320.7 488.1 L320.2 488.5 L319.7 489.0 L319.1 489.4 L318.6 489.9 L318.1 490.4 L317.6 491.0 L317.0 491.6 L316.5 492.2 L315.9 492.9 L315.4 493.6 L314.9 494.3 L314.3 495.1 L313.7 495.9 L313.2 496.8 L312.6 497.6 L312.1 498.5 L311.5 499.5 L311.0 500.4 L310.5 501.3 L310.1 502.1 L309.7 503.0 L309.3 503.9 L308.9 504.8 L308.6 505.7 L308.3 506.6 L308.0 507.5 L307.7 508.3 L307.4 509.2 L307.2 510.0 L306.9 510.8 L306.7 511.6 L306.5 512.5 L306.3 513.3 L306.1 514.1 L306.0 514.9 L305.8 515.7 L305.7 516.4 L305.6 517.0 L305.5 517.5 L305.4 517.9 L306.3 518.1 L306.4 517.7 L306.6 517.2 L306.8 516.6 L307.0 516.0 L307.3 515.2 L307.5 514.5 L307.8 513.7 L308.1 512.9 L308.4 512.1 L308.7 511.4 L309.0 510.6 L309.3 509.8 L309.6 509.0 L310.0 508.2 L310.3 507.4 L310.7 506.5 L311.1 505.7 L311.5 504.9 L311.9 504.1 L312.3 503.2 L312.7 502.4 L313.2 501.6 L313.7 500.7 L314.2 499.8 L314.7 498.9 L315.2 498.1 L315.8 497.2 L316.3 496.4 L316.8 495.6 L317.3 494.9 L317.7 494.2 L318.2 493.6 L318.6 493.0 L319.1 492.4 L319.6 491.8 L320.0 491.2 L320.4 490.7 L320.9 490.2 L321.3 489.8 L321.7 489.3 L322.1 488.9 L322.5 488.6 L322.8 488.3 L323.2 488.0 L323.5 487.7 L323.9 487.5 L324.3 487.2 L324.7 487.0 L325.1 486.7 L325.5 486.4 L325.9 486.2 L326.3 485.9 L326.7 485.7 L327.1 485.5 L327.5 485.3 L327.9 485.0 L328.3 484.8 L328.8 484.5 L329.4 484.2 L330.0 483.8 L330.8 483.3 L331.6 482.9 L332.4 482.4 L333.4 481.8 L334.3 481.3 L335.3 480.7 L336.4 480.0 L337.4 479.3 L338.4 478.5 L339.3 477.7 L340.3 476.9 L341.2 476.0 L342.2 475.0 L343.2 474.0 L344.1 472.9 L345.1 471.9 L346.0 470.8 L346.8 469.6 L347.6 468.5 L348.4 467.3 L349.0 466.2 L349.6 465.1 L350.2 463.9 L350.7 462.7 L351.1 461.6 L351.6 460.3 L351.9 459.1 L352.2 457.8 L352.4 456.5 L352.6 455.1 L352.7 453.6 L352.7 452.2 L352.6 450.7 L352.4 449.2 L352.2 447.6 L352.0 446.1 L351.7 444.6 L351.5 443.2 L351.3 441.7 L351.1 440.3 L351.0 438.8 L350.8 437.3 L350.7 435.8 L350.5 434.3 L350.3 432.8 L350.2 431.4 L350.0 430.0 L349.9 428.6 L349.9 427.3 L349.9 426.0 L349.9 424.8 L350.0 423.7 L350.1 422.6 L350.2 421.6 L350.3 420.6 L350.5 419.6 L350.7 418.6 L351.0 417.6 L351.4 416.6 L351.8 415.5 L352.3 414.4 L352.8 413.2 L353.4 412.0 L354.0 410.8 L354.7 409.6 L355.4 408.4 L356.2 407.3 L357.1 406.2 L358.0 405.2 L359.0 404.2 L360.2 403.3 L361.6 402.4 L363.1 401.6 L364.8 400.8 L366.5 400.0 L368.2 399.2 L370.0 398.5 L371.6 397.7 L373.1 397.0 L374.5 396.2 L375.7 395.4 L376.9 394.6 L378.0 393.8 L379.0 393.1 L380.0 392.3 L380.8 391.6 L381.6 391.0 L382.3 390.4 L382.9 389.9 L383.4 389.5Z" fill="#f2c5c8" opacity="0.9"/>
<path d="M294.7 479.3 L294.5 479.8 L294.2 480.4 L293.8 481.2 L293.4 482.0 L293.0 482.9 L292.5 483.8 L292.1 484.6 L291.7 485.5 L291.3 486.2 L291.0 486.8 L290.7 487.3 L290.4 487.8 L290.1 488.3 L289.8 488.8 L289.6 489.2 L289.3 489.7 L289.0 490.1 L288.7 490.6 L288.5 491.0 L288.2 491.5 L287.9 491.9 L287.6 492.4 L287.3 492.9 L286.9 493.5 L286.6 494.0 L286.3 494.5 L286.0 494.9 L285.7 495.3 L285.5 495.7 L285.3 496.0 L287.1 497.8 L287.4 497.6 L287.7 497.4 L288.2 497.2 L288.6 496.9 L289.2 496.6 L289.7 496.2 L290.3 495.8 L290.8 495.4 L291.3 495.0 L291.8 494.5 L292.3 494.1 L292.7 493.7 L293.1 493.2 L293.5 492.8 L293.9 492.3 L294.3 491.8 L294.7 491.2 L295.1 490.6 L295.5 489.9 L295.8 489.2 L296.2 488.4 L296.5 487.5 L296.8 486.5 L297.1 485.5 L297.4 484.5 L297.6 483.5 L297.8 482.6 L298.0 481.8 L298.2 481.2 L298.3 480.7Z" fill="#d9989f" stroke="#9e6069" stroke-width="0.9" stroke-opacity="0.55"/><path d="M295.5 479.6 L295.2 480.1 L295.0 480.7 L294.6 481.5 L294.3 482.3 L293.9 483.2 L293.5 484.1 L293.1 485.0 L292.7 485.9 L292.3 486.7 L292.0 487.3 L291.7 487.9 L291.4 488.4 L291.1 488.9 L290.8 489.4 L290.5 489.9 L290.2 490.3 L289.9 490.8 L289.6 491.2 L289.3 491.7 L288.9 492.1 L288.6 492.6 L288.3 493.1 L287.9 493.5 L287.5 494.0 L287.1 494.5 L286.8 495.0 L286.4 495.4 L286.1 495.8 L285.9 496.1 L285.7 496.4 L286.9 497.6 L287.1 497.4 L287.5 497.2 L287.9 496.9 L288.3 496.6 L288.8 496.2 L289.3 495.8 L289.9 495.4 L290.4 495.0 L290.9 494.6 L291.4 494.1 L291.8 493.7 L292.2 493.3 L292.6 492.8 L293.0 492.4 L293.3 491.9 L293.7 491.4 L294.1 490.8 L294.5 490.2 L294.8 489.6 L295.2 488.9 L295.5 488.1 L295.9 487.2 L296.2 486.3 L296.5 485.3 L296.8 484.3 L297.1 483.3 L297.3 482.4 L297.5 481.6 L297.7 481.0 L297.8 480.5Z" fill="#e6abb3" opacity="0.55"/><path d="M296.1 479.9 L295.9 480.3 L295.7 481.0 L295.4 481.7 L295.0 482.6 L294.7 483.5 L294.3 484.4 L293.9 485.4 L293.6 486.2 L293.2 487.0 L292.9 487.7 L292.5 488.3 L292.2 488.9 L291.9 489.4 L291.6 489.9 L291.3 490.4 L290.9 490.9 L290.6 491.3 L290.3 491.8 L289.9 492.2 L289.6 492.7 L289.2 493.1 L288.9 493.6 L288.4 494.1 L288.0 494.5 L287.6 495.0 L287.2 495.4 L286.8 495.8 L286.5 496.2 L286.2 496.5 L286.0 496.7 L286.6 497.3 L286.9 497.1 L287.2 496.9 L287.6 496.6 L288.0 496.2 L288.5 495.9 L289.0 495.5 L289.5 495.0 L289.9 494.6 L290.4 494.1 L290.8 493.7 L291.2 493.3 L291.6 492.8 L292.0 492.4 L292.4 491.9 L292.7 491.5 L293.1 491.0 L293.5 490.4 L293.8 489.8 L294.2 489.2 L294.5 488.6 L294.9 487.8 L295.2 486.9 L295.5 486.0 L295.9 485.0 L296.2 484.1 L296.5 483.1 L296.7 482.2 L297.0 481.5 L297.2 480.8 L297.3 480.3Z" fill="#f2c5c8" opacity="0.9"/>
<path d="M383.7 388.7 L383.1 388.8 L382.4 388.9 L381.5 389.1 L380.5 389.2 L379.5 389.4 L378.4 389.6 L377.3 389.9 L376.2 390.1 L375.1 390.4 L374.2 390.7 L373.5 391.0 L372.8 391.2 L372.1 391.5 L371.4 391.7 L370.6 392.1 L369.8 392.5 L369.0 393.1 L368.3 393.9 L367.6 394.8 L367.0 395.8 L366.4 397.1 L365.9 398.4 L365.5 399.9 L365.1 401.4 L364.7 403.0 L364.4 404.6 L364.0 406.2 L363.7 407.8 L363.5 409.2 L363.2 410.5 L363.0 411.7 L362.7 412.9 L362.5 414.1 L362.3 415.3 L362.2 416.4 L362.0 417.5 L361.9 418.6 L361.7 419.6 L361.6 420.6 L361.5 421.6 L361.3 422.7 L361.3 423.7 L361.2 424.7 L361.1 425.6 L361.1 426.5 L361.0 427.3 L361.0 428.1 L360.9 428.8 L360.7 429.5 L360.5 430.2 L360.3 431.0 L360.1 431.8 L359.8 432.6 L359.5 433.4 L359.3 434.1 L358.9 434.8 L358.6 435.4 L358.2 435.9 L357.9 436.4 L357.5 436.8 L357.1 437.2 L356.5 437.6 L355.9 437.9 L355.1 438.3 L354.4 438.6 L353.6 438.9 L352.8 439.2 L352.0 439.5 L351.2 439.7 L350.5 440.0 L349.9 440.2 L349.5 440.3 L349.1 440.4 L348.9 440.4 L348.8 440.4 L348.7 440.4 L348.5 440.4 L348.1 440.4 L347.6 440.4 L346.9 440.4 L346.1 440.4 L345.1 440.4 L344.0 440.4 L342.9 440.3 L341.6 440.3 L340.4 440.2 L339.2 440.2 L338.0 440.1 L336.9 440.0 L335.9 440.0 L335.0 439.9 L334.1 439.8 L333.2 439.8 L332.3 439.7 L331.4 439.6 L330.6 439.5 L329.8 439.4 L329.0 439.3 L328.2 439.3 L327.6 439.2 L327.0 439.1 L326.5 439.0 L326.1 439.0 L325.7 438.9 L325.3 438.8 L325.0 438.8 L324.6 438.7 L324.2 438.6 L323.7 438.5 L323.3 438.4 L322.8 438.3 L322.4 438.1 L321.9 438.0 L321.5 437.8 L321.0 437.7 L320.4 437.5 L319.9 437.4 L319.3 437.2 L318.6 437.1 L317.9 437.0 L317.2 436.9 L316.5 436.8 L315.6 436.7 L314.7 436.5 L313.7 436.4 L312.6 436.3 L311.5 436.3 L310.3 436.5 L309.0 436.7 L307.8 437.1 L306.6 437.6 L305.5 438.2 L304.4 438.8 L303.3 439.5 L302.2 440.4 L301.1 441.2 L300.0 442.2 L299.0 443.2 L298.1 444.3 L297.3 445.6 L296.5 446.9 L295.9 448.3 L295.4 449.7 L295.0 451.1 L294.7 452.5 L294.5 453.9 L294.3 455.2 L294.1 456.5 L294.0 457.6 L293.9 458.7 L293.8 459.7 L293.8 460.7 L293.9 461.7 L294.1 462.5 L294.3 463.3 L294.5 464.0 L294.7 464.6 L294.9 465.1 L295.0 465.6 L295.2 466.1 L295.3 466.7 L295.4 467.2 L295.6 467.7 L295.7 468.2 L295.8 468.7 L295.9 469.1 L296.0 469.6 L296.1 470.0 L296.1 470.4 L296.1 470.8 L296.1 471.3 L296.1 471.7 L296.0 472.1 L295.9 472.5 L295.8 472.8 L295.7 473.2 L295.5 473.5 L295.4 473.9 L295.2 474.3 L295.1 474.7 L294.9 475.3 L294.7 475.9 L294.6 476.4 L294.4 476.9 L294.3 477.2 L294.1 477.4 L294.0 477.5 L293.9 477.5 L293.8 477.5 L293.7 477.5 L293.4 477.7 L293.0 477.9 L292.3 478.3 L291.6 478.6 L290.8 479.0 L290.0 479.4 L289.1 479.7 L288.3 480.1 L287.4 480.4 L286.7 480.7 L286.1 480.9 L285.4 481.1 L284.8 481.3 L284.1 481.5 L283.4 481.7 L282.7 481.9 L282.0 482.0 L281.3 482.2 L280.6 482.4 L279.9 482.5 L279.2 482.7 L278.4 482.8 L277.7 482.9 L276.9 483.1 L276.2 483.2 L275.5 483.3 L274.8 483.4 L274.2 483.5 L273.6 483.5 L273.2 483.6 L273.2 486.2 L273.6 486.3 L274.0 486.4 L274.6 486.5 L275.3 486.7 L276.1 486.9 L276.8 487.0 L277.7 487.2 L278.5 487.3 L279.3 487.4 L280.1 487.5 L280.9 487.5 L281.7 487.6 L282.4 487.6 L283.3 487.7 L284.1 487.7 L285.0 487.7 L285.9 487.6 L286.8 487.5 L287.7 487.4 L288.7 487.1 L289.6 486.9 L290.6 486.6 L291.6 486.2 L292.7 485.8 L293.7 485.4 L294.7 484.9 L295.7 484.4 L296.6 483.9 L297.5 483.2 L298.3 482.5 L299.1 481.6 L299.6 480.6 L299.9 479.6 L300.0 478.7 L300.0 477.8 L299.9 477.1 L299.8 476.5 L299.7 476.1 L299.6 475.7 L299.5 475.3 L299.5 474.8 L299.4 474.3 L299.4 473.9 L299.3 473.4 L299.2 472.9 L299.1 472.5 L299.0 472.1 L298.9 471.7 L298.9 471.2 L298.9 470.8 L298.8 470.3 L298.9 469.8 L298.9 469.4 L298.9 468.9 L298.9 468.4 L299.0 468.0 L299.0 467.5 L299.1 467.0 L299.2 466.5 L299.2 465.9 L299.3 465.2 L299.3 464.6 L299.3 463.9 L299.4 463.3 L299.4 462.8 L299.5 462.2 L299.6 461.6 L299.7 461.1 L299.9 460.4 L300.1 459.7 L300.4 458.8 L300.7 457.8 L301.0 456.7 L301.4 455.6 L301.8 454.4 L302.2 453.3 L302.6 452.3 L303.0 451.3 L303.5 450.5 L303.9 449.8 L304.4 449.2 L305.0 448.5 L305.6 447.8 L306.3 447.1 L307.1 446.4 L307.9 445.8 L308.7 445.2 L309.4 444.6 L310.2 444.1 L310.8 443.7 L311.4 443.3 L311.9 443.1 L312.6 442.8 L313.3 442.5 L314.1 442.3 L314.9 442.2 L315.7 442.0 L316.5 441.8 L317.3 441.7 L318.1 441.6 L318.7 441.4 L319.2 441.3 L319.7 441.2 L320.2 441.1 L320.6 441.0 L321.0 441.0 L321.5 441.0 L321.9 441.0 L322.3 441.0 L322.7 441.0 L323.1 441.1 L323.4 441.2 L323.7 441.3 L324.0 441.5 L324.3 441.6 L324.6 441.8 L324.9 442.0 L325.4 442.3 L325.9 442.6 L326.4 442.8 L327.0 443.1 L327.7 443.5 L328.4 443.9 L329.1 444.3 L329.9 444.7 L330.8 445.1 L331.7 445.5 L332.6 445.9 L333.6 446.3 L334.7 446.6 L335.8 446.9 L337.0 447.2 L338.2 447.5 L339.5 447.7 L340.8 447.9 L342.1 448.1 L343.4 448.3 L344.6 448.4 L345.7 448.5 L346.7 448.6 L347.6 448.6 L348.3 448.6 L349.0 448.5 L349.7 448.5 L350.4 448.3 L351.1 448.1 L351.8 447.9 L352.3 447.6 L352.9 447.3 L353.5 447.0 L354.2 446.7 L354.9 446.3 L355.8 445.8 L356.7 445.3 L357.6 444.8 L358.6 444.2 L359.5 443.5 L360.4 442.8 L361.3 442.0 L362.1 441.2 L362.8 440.3 L363.4 439.3 L364.0 438.4 L364.5 437.4 L364.9 436.5 L365.3 435.5 L365.6 434.6 L365.9 433.6 L366.2 432.7 L366.5 431.8 L366.7 430.8 L366.9 429.8 L367.0 428.8 L367.1 427.8 L367.2 426.9 L367.2 426.0 L367.3 425.1 L367.4 424.2 L367.4 423.3 L367.5 422.4 L367.7 421.4 L367.8 420.4 L367.9 419.3 L368.0 418.3 L368.2 417.2 L368.3 416.2 L368.5 415.0 L368.6 413.9 L368.8 412.7 L369.0 411.5 L369.2 410.2 L369.4 408.7 L369.6 407.2 L369.8 405.6 L370.1 404.0 L370.3 402.5 L370.6 401.1 L370.9 399.9 L371.2 398.8 L371.4 398.0 L371.7 397.3 L372.0 396.8 L372.3 396.5 L372.5 396.2 L372.9 395.9 L373.3 395.6 L373.8 395.3 L374.4 395.0 L375.1 394.6 L375.8 394.3 L376.5 393.9 L377.3 393.5 L378.2 393.2 L379.2 392.9 L380.2 392.5 L381.2 392.2 L382.2 392.0 L383.0 391.7 L383.8 391.5 L384.3 391.3Z" fill="#d9989f" stroke="#9e6069" stroke-width="0.9" stroke-opacity="0.55"/><path d="M383.8 389.2 L383.3 389.4 L382.5 389.5 L381.7 389.7 L380.7 389.9 L379.6 390.1 L378.6 390.3 L377.5 390.6 L376.4 390.8 L375.4 391.2 L374.6 391.5 L373.8 391.8 L373.1 392.0 L372.5 392.3 L371.8 392.5 L371.1 392.9 L370.4 393.3 L369.7 393.8 L369.1 394.5 L368.5 395.3 L367.9 396.3 L367.4 397.4 L366.9 398.7 L366.5 400.2 L366.2 401.7 L365.8 403.2 L365.5 404.8 L365.2 406.4 L364.9 407.9 L364.7 409.4 L364.4 410.7 L364.2 411.9 L364.0 413.2 L363.8 414.3 L363.6 415.5 L363.4 416.6 L363.3 417.7 L363.1 418.7 L363.0 419.8 L362.9 420.8 L362.7 421.8 L362.6 422.8 L362.5 423.8 L362.5 424.8 L362.4 425.7 L362.4 426.6 L362.3 427.4 L362.2 428.2 L362.1 429.0 L362.0 429.8 L361.8 430.5 L361.6 431.4 L361.3 432.2 L361.0 433.0 L360.8 433.8 L360.4 434.6 L360.1 435.3 L359.7 436.0 L359.3 436.7 L358.9 437.2 L358.5 437.7 L357.9 438.2 L357.3 438.7 L356.6 439.1 L355.9 439.5 L355.1 439.9 L354.2 440.3 L353.4 440.6 L352.6 440.9 L351.8 441.2 L351.1 441.4 L350.5 441.7 L350.1 441.8 L349.7 442.0 L349.4 442.0 L349.2 442.1 L348.9 442.1 L348.6 442.1 L348.1 442.1 L347.6 442.1 L346.8 442.1 L346.0 442.1 L345.0 442.1 L343.9 442.0 L342.7 442.0 L341.5 441.9 L340.2 441.8 L339.0 441.7 L337.8 441.6 L336.7 441.5 L335.6 441.4 L334.7 441.3 L333.8 441.1 L332.9 441.0 L332.0 440.8 L331.1 440.7 L330.3 440.5 L329.5 440.4 L328.7 440.2 L328.0 440.1 L327.3 439.9 L326.8 439.8 L326.3 439.7 L325.8 439.6 L325.5 439.5 L325.1 439.4 L324.8 439.3 L324.4 439.2 L324.0 439.1 L323.6 439.0 L323.2 438.9 L322.7 438.8 L322.3 438.7 L321.8 438.6 L321.4 438.5 L320.9 438.4 L320.4 438.3 L319.8 438.2 L319.3 438.1 L318.6 438.0 L318.0 438.0 L317.3 437.9 L316.5 437.9 L315.7 437.8 L314.7 437.7 L313.8 437.6 L312.8 437.6 L311.7 437.7 L310.6 437.8 L309.5 438.1 L308.4 438.5 L307.4 439.0 L306.3 439.5 L305.3 440.2 L304.2 440.9 L303.2 441.6 L302.2 442.5 L301.2 443.4 L300.3 444.3 L299.4 445.4 L298.7 446.5 L298.0 447.6 L297.4 448.9 L296.9 450.2 L296.5 451.6 L296.2 452.9 L295.9 454.2 L295.7 455.5 L295.5 456.7 L295.3 457.9 L295.2 458.9 L295.1 459.9 L295.1 460.8 L295.1 461.7 L295.2 462.4 L295.4 463.2 L295.5 463.8 L295.7 464.4 L295.8 465.0 L295.9 465.5 L296.0 466.1 L296.1 466.6 L296.2 467.2 L296.3 467.7 L296.4 468.2 L296.5 468.6 L296.5 469.1 L296.6 469.5 L296.7 470.0 L296.7 470.4 L296.7 470.8 L296.7 471.2 L296.7 471.7 L296.6 472.1 L296.6 472.5 L296.5 472.9 L296.4 473.2 L296.3 473.6 L296.2 474.0 L296.1 474.4 L296.0 474.8 L295.9 475.4 L295.8 475.9 L295.7 476.4 L295.6 476.9 L295.5 477.3 L295.4 477.7 L295.2 478.0 L295.1 478.2 L294.9 478.4 L294.7 478.6 L294.3 478.8 L293.7 479.2 L293.0 479.6 L292.3 479.9 L291.4 480.3 L290.5 480.7 L289.6 481.1 L288.8 481.4 L287.9 481.7 L287.1 482.0 L286.4 482.3 L285.7 482.5 L285.0 482.6 L284.3 482.8 L283.6 483.0 L282.8 483.1 L282.1 483.2 L281.4 483.3 L280.6 483.5 L279.9 483.6 L279.2 483.7 L278.5 483.8 L277.7 483.8 L276.9 483.9 L276.2 484.0 L275.4 484.0 L274.8 484.0 L274.1 484.1 L273.6 484.1 L273.2 484.1 L273.2 485.9 L273.6 485.9 L274.1 486.0 L274.7 486.1 L275.3 486.2 L276.1 486.4 L276.9 486.5 L277.7 486.6 L278.5 486.7 L279.3 486.8 L280.1 486.8 L280.9 486.9 L281.6 486.9 L282.4 486.9 L283.2 486.9 L284.0 486.9 L284.9 486.9 L285.7 486.8 L286.6 486.7 L287.5 486.5 L288.4 486.3 L289.3 486.0 L290.3 485.7 L291.3 485.4 L292.3 485.0 L293.3 484.6 L294.3 484.1 L295.2 483.6 L296.1 483.1 L297.0 482.5 L297.7 481.8 L298.4 481.0 L298.8 480.2 L299.1 479.3 L299.3 478.5 L299.3 477.8 L299.2 477.1 L299.1 476.5 L299.1 476.0 L299.0 475.6 L299.0 475.2 L298.9 474.8 L298.9 474.3 L298.9 473.8 L298.8 473.4 L298.8 472.9 L298.7 472.5 L298.6 472.1 L298.6 471.7 L298.5 471.2 L298.5 470.8 L298.5 470.3 L298.5 469.9 L298.5 469.4 L298.5 468.9 L298.5 468.5 L298.6 468.0 L298.6 467.5 L298.6 467.0 L298.7 466.5 L298.7 465.9 L298.7 465.3 L298.7 464.6 L298.7 464.0 L298.7 463.4 L298.8 462.8 L298.8 462.2 L298.9 461.6 L299.0 461.0 L299.1 460.4 L299.3 459.6 L299.6 458.7 L299.8 457.6 L300.1 456.5 L300.5 455.4 L300.8 454.2 L301.2 453.1 L301.7 452.0 L302.1 450.9 L302.6 450.1 L303.1 449.3 L303.6 448.6 L304.2 447.8 L304.9 447.1 L305.7 446.4 L306.5 445.7 L307.3 445.0 L308.1 444.4 L308.9 443.8 L309.7 443.3 L310.4 442.8 L311.1 442.5 L311.7 442.2 L312.4 442.0 L313.2 441.7 L314.0 441.6 L314.8 441.4 L315.7 441.3 L316.5 441.2 L317.3 441.1 L318.1 441.0 L318.7 440.9 L319.2 440.8 L319.8 440.7 L320.2 440.6 L320.7 440.6 L321.1 440.6 L321.5 440.6 L321.9 440.6 L322.4 440.6 L322.8 440.7 L323.2 440.8 L323.5 440.9 L323.8 441.0 L324.1 441.1 L324.4 441.3 L324.7 441.4 L325.1 441.6 L325.5 441.9 L326.0 442.1 L326.6 442.4 L327.2 442.6 L327.8 442.9 L328.6 443.3 L329.3 443.7 L330.1 444.0 L331.0 444.4 L331.9 444.8 L332.8 445.1 L333.8 445.5 L334.9 445.8 L335.9 446.0 L337.1 446.3 L338.4 446.5 L339.6 446.7 L340.9 446.9 L342.2 447.1 L343.5 447.3 L344.7 447.4 L345.8 447.5 L346.7 447.5 L347.6 447.5 L348.3 447.5 L349.0 447.5 L349.6 447.4 L350.2 447.3 L350.8 447.1 L351.4 446.9 L352.0 446.7 L352.5 446.4 L353.1 446.1 L353.8 445.8 L354.6 445.4 L355.4 445.0 L356.3 444.5 L357.2 444.0 L358.1 443.4 L359.0 442.8 L359.9 442.1 L360.7 441.4 L361.5 440.6 L362.2 439.8 L362.8 438.9 L363.3 438.0 L363.8 437.1 L364.2 436.2 L364.5 435.2 L364.9 434.3 L365.2 433.4 L365.4 432.5 L365.7 431.6 L365.9 430.6 L366.1 429.7 L366.2 428.7 L366.3 427.8 L366.4 426.8 L366.4 425.9 L366.5 425.0 L366.6 424.1 L366.6 423.2 L366.7 422.3 L366.9 421.3 L367.0 420.3 L367.1 419.2 L367.2 418.2 L367.4 417.1 L367.5 416.0 L367.7 414.9 L367.9 413.8 L368.0 412.6 L368.2 411.4 L368.5 410.0 L368.7 408.6 L368.9 407.0 L369.1 405.5 L369.4 403.9 L369.6 402.4 L369.9 401.0 L370.2 399.7 L370.5 398.6 L370.9 397.7 L371.2 397.0 L371.5 396.5 L371.8 396.0 L372.2 395.7 L372.6 395.4 L373.0 395.1 L373.6 394.8 L374.2 394.5 L374.9 394.2 L375.6 393.8 L376.3 393.4 L377.2 393.1 L378.1 392.8 L379.1 392.4 L380.1 392.1 L381.2 391.8 L382.1 391.6 L383.0 391.3 L383.7 391.1 L384.2 391.0Z" fill="#e6abb3" opacity="0.55"/><path d="M383.9 389.7 L383.4 389.8 L382.7 390.0 L381.8 390.2 L380.8 390.4 L379.8 390.6 L378.7 390.9 L377.6 391.2 L376.6 391.5 L375.7 391.8 L374.8 392.1 L374.1 392.4 L373.4 392.7 L372.8 393.0 L372.1 393.2 L371.5 393.6 L370.9 394.0 L370.3 394.4 L369.7 395.0 L369.2 395.8 L368.7 396.7 L368.2 397.7 L367.8 399.0 L367.5 400.4 L367.1 401.9 L366.8 403.4 L366.5 405.0 L366.2 406.6 L366.0 408.1 L365.7 409.6 L365.5 410.9 L365.2 412.1 L365.0 413.3 L364.8 414.5 L364.7 415.6 L364.5 416.7 L364.4 417.8 L364.2 418.9 L364.1 419.9 L364.0 420.9 L363.8 421.9 L363.7 422.9 L363.6 423.9 L363.6 424.8 L363.5 425.8 L363.5 426.6 L363.4 427.5 L363.3 428.4 L363.2 429.2 L363.1 430.0 L362.9 430.8 L362.6 431.7 L362.4 432.5 L362.1 433.4 L361.8 434.2 L361.5 435.0 L361.1 435.8 L360.7 436.6 L360.3 437.3 L359.8 437.9 L359.3 438.5 L358.7 439.1 L358.0 439.6 L357.3 440.1 L356.5 440.6 L355.6 441.0 L354.8 441.4 L353.9 441.8 L353.1 442.1 L352.4 442.4 L351.7 442.7 L351.1 443.0 L350.6 443.2 L350.2 443.3 L349.8 443.4 L349.5 443.5 L349.1 443.5 L348.7 443.6 L348.2 443.6 L347.6 443.6 L346.8 443.6 L345.9 443.6 L344.9 443.5 L343.8 443.5 L342.6 443.4 L341.3 443.3 L340.1 443.1 L338.8 443.0 L337.6 442.9 L336.5 442.7 L335.4 442.6 L334.5 442.4 L333.5 442.2 L332.6 442.0 L331.7 441.8 L330.9 441.6 L330.0 441.4 L329.2 441.2 L328.5 441.0 L327.8 440.8 L327.1 440.6 L326.6 440.4 L326.1 440.3 L325.6 440.2 L325.3 440.0 L324.9 439.9 L324.6 439.8 L324.2 439.7 L323.9 439.6 L323.5 439.5 L323.1 439.4 L322.6 439.3 L322.2 439.2 L321.7 439.1 L321.3 439.1 L320.8 439.0 L320.3 438.9 L319.8 438.9 L319.3 438.8 L318.6 438.8 L318.0 438.8 L317.3 438.8 L316.5 438.8 L315.7 438.7 L314.8 438.7 L313.8 438.7 L312.9 438.8 L311.9 438.9 L310.9 439.0 L309.9 439.3 L309.0 439.7 L308.0 440.1 L307.0 440.7 L306.1 441.3 L305.1 442.0 L304.1 442.7 L303.1 443.5 L302.2 444.4 L301.4 445.3 L300.6 446.2 L299.9 447.2 L299.3 448.3 L298.7 449.5 L298.2 450.7 L297.8 452.0 L297.5 453.3 L297.2 454.6 L296.9 455.8 L296.7 457.0 L296.5 458.1 L296.3 459.1 L296.2 460.0 L296.1 460.9 L296.2 461.7 L296.2 462.4 L296.3 463.1 L296.4 463.7 L296.5 464.3 L296.6 464.9 L296.7 465.5 L296.8 466.0 L296.8 466.6 L296.9 467.1 L296.9 467.6 L297.0 468.1 L297.0 468.6 L297.1 469.0 L297.1 469.5 L297.2 469.9 L297.2 470.4 L297.2 470.8 L297.2 471.2 L297.2 471.7 L297.2 472.1 L297.2 472.5 L297.1 472.9 L297.1 473.3 L297.0 473.7 L297.0 474.1 L296.9 474.5 L296.8 474.9 L296.7 475.4 L296.7 475.9 L296.6 476.5 L296.6 477.0 L296.5 477.4 L296.4 477.9 L296.3 478.3 L296.1 478.7 L295.8 479.1 L295.5 479.5 L295.0 479.8 L294.4 480.2 L293.6 480.7 L292.8 481.1 L291.9 481.5 L291.0 481.9 L290.1 482.3 L289.2 482.6 L288.3 482.9 L287.5 483.2 L286.7 483.4 L286.0 483.6 L285.2 483.8 L284.4 483.9 L283.7 484.0 L282.9 484.1 L282.2 484.2 L281.4 484.3 L280.7 484.4 L280.0 484.5 L279.2 484.5 L278.5 484.6 L277.7 484.6 L276.9 484.6 L276.1 484.6 L275.4 484.6 L274.7 484.6 L274.1 484.6 L273.6 484.6 L273.2 484.6 L273.2 485.5 L273.6 485.5 L274.1 485.6 L274.7 485.7 L275.4 485.8 L276.1 485.9 L276.9 485.9 L277.7 486.0 L278.5 486.1 L279.3 486.1 L280.1 486.1 L280.8 486.1 L281.6 486.1 L282.3 486.1 L283.1 486.1 L283.9 486.1 L284.7 486.0 L285.6 485.9 L286.4 485.8 L287.3 485.6 L288.2 485.4 L289.0 485.1 L290.0 484.8 L290.9 484.5 L291.9 484.1 L292.9 483.7 L293.9 483.2 L294.8 482.8 L295.6 482.3 L296.4 481.7 L297.1 481.1 L297.6 480.5 L298.0 479.8 L298.3 479.0 L298.4 478.3 L298.5 477.7 L298.5 477.1 L298.4 476.5 L298.4 476.0 L298.3 475.6 L298.3 475.1 L298.3 474.7 L298.4 474.2 L298.3 473.8 L298.3 473.3 L298.3 472.9 L298.2 472.5 L298.2 472.1 L298.2 471.7 L298.1 471.2 L298.1 470.8 L298.1 470.3 L298.1 469.9 L298.1 469.4 L298.1 469.0 L298.1 468.5 L298.1 468.0 L298.1 467.5 L298.1 467.0 L298.1 466.5 L298.1 465.9 L298.1 465.3 L298.1 464.7 L298.1 464.1 L298.1 463.5 L298.0 462.9 L298.0 462.3 L298.1 461.6 L298.2 461.0 L298.3 460.2 L298.4 459.4 L298.7 458.5 L298.9 457.4 L299.2 456.3 L299.5 455.1 L299.9 453.9 L300.3 452.7 L300.7 451.6 L301.1 450.5 L301.6 449.5 L302.1 448.7 L302.7 447.9 L303.4 447.1 L304.1 446.3 L304.9 445.5 L305.8 444.8 L306.6 444.1 L307.5 443.5 L308.4 442.9 L309.2 442.4 L310.0 441.9 L310.7 441.6 L311.5 441.3 L312.3 441.0 L313.1 440.9 L314.0 440.7 L314.8 440.6 L315.7 440.6 L316.5 440.5 L317.3 440.4 L318.0 440.3 L318.7 440.3 L319.2 440.2 L319.8 440.2 L320.3 440.1 L320.7 440.1 L321.2 440.1 L321.6 440.2 L322.0 440.2 L322.4 440.2 L322.9 440.3 L323.3 440.4 L323.6 440.5 L323.9 440.6 L324.2 440.7 L324.5 440.9 L324.9 441.0 L325.3 441.2 L325.7 441.4 L326.2 441.6 L326.7 441.8 L327.4 442.1 L328.0 442.4 L328.7 442.7 L329.5 443.0 L330.3 443.3 L331.2 443.7 L332.1 444.0 L333.0 444.3 L334.0 444.6 L335.0 444.8 L336.1 445.1 L337.3 445.3 L338.5 445.5 L339.8 445.7 L341.1 445.9 L342.3 446.0 L343.6 446.2 L344.7 446.3 L345.8 446.3 L346.8 446.4 L347.6 446.4 L348.3 446.4 L348.9 446.3 L349.4 446.3 L350.0 446.2 L350.5 446.0 L351.0 445.9 L351.6 445.6 L352.1 445.4 L352.7 445.1 L353.4 444.8 L354.1 444.5 L355.0 444.0 L355.8 443.6 L356.7 443.1 L357.6 442.6 L358.5 442.0 L359.4 441.4 L360.2 440.7 L360.9 440.0 L361.5 439.2 L362.0 438.4 L362.5 437.6 L363.0 436.7 L363.4 435.8 L363.7 434.9 L364.0 434.0 L364.3 433.1 L364.6 432.2 L364.9 431.4 L365.1 430.4 L365.2 429.5 L365.4 428.6 L365.5 427.7 L365.5 426.8 L365.6 425.9 L365.6 425.0 L365.7 424.1 L365.8 423.1 L365.9 422.2 L366.0 421.2 L366.1 420.2 L366.3 419.1 L366.4 418.1 L366.5 417.0 L366.7 415.9 L366.9 414.8 L367.0 413.7 L367.2 412.5 L367.4 411.2 L367.7 409.9 L367.9 408.4 L368.1 406.9 L368.4 405.3 L368.6 403.8 L368.9 402.2 L369.2 400.8 L369.5 399.5 L369.9 398.3 L370.2 397.4 L370.6 396.6 L371.0 396.0 L371.4 395.6 L371.8 395.2 L372.3 394.8 L372.8 394.5 L373.3 394.3 L374.0 394.0 L374.6 393.7 L375.3 393.3 L376.1 393.0 L377.0 392.6 L378.0 392.3 L379.0 392.0 L380.0 391.7 L381.1 391.4 L382.0 391.2 L382.9 391.0 L383.6 390.8 L384.2 390.6Z" fill="#f2c5c8" opacity="0.9"/>
<path d="M380.5 380.6 L380.4 380.2 L380.2 379.7 L380.0 379.1 L379.8 378.4 L379.5 377.7 L379.3 377.0 L379.0 376.2 L378.7 375.4 L378.4 374.6 L378.1 373.8 L377.9 373.0 L377.6 372.3 L377.3 371.5 L377.0 370.7 L376.7 369.9 L376.4 369.0 L376.1 368.1 L375.7 367.1 L375.3 366.0 L374.9 364.9 L374.4 363.7 L374.0 362.5 L373.5 361.1 L373.1 359.7 L372.5 358.2 L371.9 356.6 L371.3 355.0 L370.6 353.3 L369.7 351.5 L368.8 349.7 L367.8 347.9 L366.7 346.0 L365.5 344.0 L364.2 342.0 L362.9 340.0 L361.5 337.9 L360.1 335.9 L358.7 333.9 L357.2 331.9 L355.8 330.1 L354.3 328.3 L352.9 326.5 L351.4 324.8 L349.8 323.1 L348.3 321.4 L346.7 319.7 L345.0 318.1 L343.3 316.6 L341.6 315.1 L339.8 313.7 L338.0 312.4 L336.2 311.2 L334.4 310.0 L332.5 308.9 L330.5 307.9 L328.6 307.0 L326.7 306.2 L324.7 305.5 L322.8 304.9 L320.8 304.4 L318.8 304.0 L316.8 303.8 L314.8 303.7 L312.9 303.8 L311.0 303.9 L309.2 304.2 L307.5 304.5 L305.9 304.9 L304.3 305.4 L302.8 305.9 L301.4 306.5 L300.0 307.3 L298.8 308.1 L297.7 309.1 L296.7 310.0 L295.8 311.0 L295.0 312.0 L294.3 313.1 L293.7 314.1 L293.1 315.1 L292.5 316.2 L292.0 317.4 L291.7 318.5 L291.3 319.7 L291.1 320.9 L290.9 322.1 L290.7 323.3 L290.7 324.4 L290.6 325.6 L290.6 326.7 L290.6 327.8 L290.7 328.9 L290.8 330.0 L290.9 331.1 L291.1 332.2 L291.4 333.4 L291.7 334.5 L292.1 335.7 L292.5 336.9 L293.1 338.1 L293.6 339.3 L294.3 340.5 L294.9 341.8 L295.7 343.1 L296.5 344.4 L297.4 345.7 L298.3 347.1 L299.4 348.5 L300.6 349.8 L301.9 351.2 L303.3 352.6 L304.8 354.0 L306.4 355.4 L308.1 356.8 L309.8 358.2 L311.6 359.5 L313.4 360.9 L315.3 362.3 L317.2 363.6 L319.1 364.9 L321.0 366.1 L323.0 367.4 L325.1 368.7 L327.2 370.0 L329.3 371.3 L331.5 372.5 L333.6 373.7 L335.7 374.8 L337.9 375.9 L339.9 376.9 L342.0 377.9 L344.1 378.8 L346.2 379.6 L348.3 380.4 L350.4 381.1 L352.4 381.8 L354.3 382.5 L356.1 383.1 L357.8 383.6 L359.4 384.1 L360.9 384.6 L362.3 385.0 L363.5 385.3 L364.7 385.6 L365.8 385.8 L366.8 386.0 L367.8 386.2 L368.7 386.4 L369.6 386.6 L370.5 386.7 L371.4 386.9 L372.3 387.1 L373.2 387.2 L374.1 387.3 L374.9 387.4 L375.6 387.5 L376.3 387.6 L376.9 387.7 L377.3 387.7 L377.7 387.8 L378.3 385.4 L377.9 385.3 L377.4 385.2 L376.8 385.0 L376.2 384.8 L375.5 384.6 L374.7 384.4 L373.9 384.1 L373.1 383.9 L372.3 383.6 L371.5 383.3 L370.6 382.9 L369.8 382.6 L368.9 382.3 L368.0 381.9 L367.1 381.6 L366.1 381.2 L365.1 380.7 L363.9 380.2 L362.7 379.7 L361.4 379.1 L359.9 378.4 L358.2 377.6 L356.5 376.9 L354.7 376.0 L352.8 375.1 L350.9 374.2 L349.0 373.3 L347.1 372.3 L345.2 371.3 L343.3 370.3 L341.4 369.2 L339.4 368.1 L337.4 367.0 L335.3 365.8 L333.3 364.5 L331.2 363.3 L329.2 362.0 L327.2 360.8 L325.2 359.6 L323.3 358.3 L321.5 357.1 L319.6 355.9 L317.7 354.7 L315.8 353.5 L314.0 352.3 L312.3 351.2 L310.6 350.0 L309.1 348.8 L307.6 347.7 L306.3 346.6 L305.2 345.5 L304.1 344.4 L303.1 343.3 L302.2 342.2 L301.4 341.1 L300.6 340.0 L299.9 338.9 L299.3 337.8 L298.7 336.7 L298.1 335.7 L297.7 334.7 L297.3 333.8 L297.0 332.9 L296.7 332.0 L296.5 331.1 L296.4 330.3 L296.3 329.4 L296.2 328.5 L296.2 327.6 L296.2 326.7 L296.2 325.8 L296.3 324.9 L296.4 324.0 L296.6 323.0 L296.8 322.2 L297.1 321.3 L297.4 320.5 L297.7 319.8 L298.1 319.1 L298.5 318.5 L299.0 317.9 L299.6 317.2 L300.3 316.6 L300.9 316.1 L301.6 315.6 L302.3 315.2 L303.0 314.8 L303.8 314.5 L304.5 314.3 L305.4 314.1 L306.4 313.9 L307.5 313.8 L308.8 313.7 L310.1 313.7 L311.5 313.7 L312.9 313.8 L314.2 314.0 L315.6 314.2 L316.9 314.5 L318.2 314.8 L319.5 315.3 L320.9 315.8 L322.4 316.4 L323.9 317.1 L325.5 317.9 L327.0 318.8 L328.6 319.7 L330.1 320.6 L331.7 321.7 L333.2 322.7 L334.6 323.8 L336.1 325.0 L337.6 326.2 L339.1 327.6 L340.5 329.0 L342.0 330.5 L343.5 332.0 L345.0 333.6 L346.5 335.1 L348.0 336.7 L349.5 338.3 L351.0 340.0 L352.5 341.8 L354.0 343.6 L355.5 345.4 L357.0 347.2 L358.4 348.9 L359.8 350.7 L361.0 352.3 L362.2 353.9 L363.2 355.3 L364.2 356.7 L365.1 358.1 L366.0 359.5 L366.8 360.9 L367.5 362.2 L368.3 363.5 L369.0 364.7 L369.7 365.9 L370.3 367.1 L371.0 368.1 L371.5 369.1 L372.1 370.0 L372.6 370.8 L373.0 371.6 L373.4 372.3 L373.8 373.1 L374.3 373.8 L374.7 374.5 L375.1 375.2 L375.5 375.9 L375.9 376.7 L376.3 377.4 L376.7 378.1 L377.1 378.8 L377.4 379.5 L377.8 380.1 L378.0 380.6 L378.3 381.1 L378.5 381.4Z" fill="#d9989f" stroke="#9e6069" stroke-width="0.9" stroke-opacity="0.55"/><path d="M380.1 380.7 L379.9 380.4 L379.7 379.9 L379.5 379.3 L379.3 378.7 L379.0 378.0 L378.7 377.2 L378.4 376.4 L378.1 375.7 L377.8 374.9 L377.5 374.1 L377.2 373.3 L376.9 372.6 L376.6 371.8 L376.3 371.0 L375.9 370.2 L375.6 369.4 L375.2 368.5 L374.8 367.5 L374.4 366.5 L373.9 365.4 L373.4 364.2 L372.9 362.9 L372.4 361.6 L371.9 360.2 L371.3 358.7 L370.7 357.2 L370.0 355.6 L369.2 354.0 L368.4 352.3 L367.4 350.6 L366.4 348.8 L365.2 347.0 L364.0 345.1 L362.7 343.1 L361.3 341.1 L359.9 339.1 L358.5 337.1 L357.1 335.2 L355.6 333.3 L354.1 331.5 L352.7 329.7 L351.2 328.0 L349.7 326.3 L348.2 324.6 L346.7 323.0 L345.1 321.4 L343.5 319.8 L341.8 318.3 L340.1 316.9 L338.4 315.6 L336.7 314.4 L334.9 313.2 L333.1 312.1 L331.3 311.0 L329.5 310.0 L327.6 309.1 L325.8 308.3 L323.9 307.6 L322.1 307.0 L320.3 306.6 L318.4 306.2 L316.6 306.0 L314.7 305.9 L312.9 305.9 L311.1 306.0 L309.4 306.2 L307.8 306.5 L306.2 306.8 L304.7 307.2 L303.4 307.6 L302.0 308.2 L300.8 308.8 L299.7 309.5 L298.6 310.3 L297.7 311.2 L296.9 312.1 L296.1 313.0 L295.4 313.9 L294.8 314.9 L294.2 315.8 L293.7 316.8 L293.2 317.9 L292.8 319.0 L292.5 320.1 L292.3 321.2 L292.1 322.3 L291.9 323.4 L291.8 324.5 L291.8 325.6 L291.8 326.7 L291.8 327.7 L291.8 328.8 L291.9 329.8 L292.1 330.9 L292.3 332.0 L292.5 333.1 L292.8 334.2 L293.2 335.3 L293.6 336.4 L294.1 337.6 L294.7 338.8 L295.3 340.0 L296.0 341.2 L296.7 342.4 L297.5 343.7 L298.4 345.0 L299.3 346.3 L300.4 347.6 L301.6 348.9 L302.8 350.2 L304.2 351.6 L305.7 352.9 L307.3 354.2 L308.9 355.6 L310.7 356.9 L312.5 358.3 L314.3 359.6 L316.2 360.9 L318.1 362.2 L320.0 363.5 L321.9 364.8 L323.9 366.0 L325.9 367.3 L328.0 368.6 L330.1 369.8 L332.3 371.1 L334.4 372.3 L336.5 373.4 L338.6 374.5 L340.6 375.5 L342.7 376.5 L344.7 377.4 L346.8 378.3 L348.9 379.1 L350.9 379.9 L352.9 380.6 L354.8 381.3 L356.6 381.9 L358.3 382.5 L359.8 383.1 L361.3 383.6 L362.6 384.0 L363.8 384.3 L365.0 384.7 L366.1 384.9 L367.1 385.2 L368.0 385.4 L368.9 385.6 L369.8 385.8 L370.7 386.0 L371.6 386.2 L372.5 386.4 L373.4 386.6 L374.2 386.7 L375.0 386.8 L375.7 386.9 L376.4 387.0 L377.0 387.1 L377.5 387.2 L377.9 387.3 L378.2 385.7 L377.8 385.6 L377.3 385.5 L376.7 385.3 L376.1 385.2 L375.4 385.0 L374.6 384.8 L373.9 384.5 L373.0 384.3 L372.2 384.0 L371.4 383.7 L370.5 383.4 L369.6 383.1 L368.8 382.8 L367.9 382.5 L366.9 382.1 L365.9 381.7 L364.9 381.3 L363.7 380.9 L362.5 380.3 L361.1 379.7 L359.6 379.1 L358.0 378.4 L356.2 377.6 L354.4 376.8 L352.5 375.9 L350.6 375.0 L348.6 374.1 L346.7 373.1 L344.8 372.2 L342.8 371.2 L340.9 370.1 L338.9 369.0 L336.9 367.8 L334.8 366.6 L332.8 365.4 L330.7 364.2 L328.7 362.9 L326.6 361.6 L324.7 360.4 L322.8 359.2 L320.9 358.0 L319.0 356.8 L317.1 355.5 L315.3 354.3 L313.5 353.1 L311.7 351.9 L310.1 350.7 L308.5 349.5 L307.1 348.3 L305.7 347.2 L304.6 346.1 L303.5 344.9 L302.5 343.8 L301.6 342.6 L300.7 341.5 L300.0 340.4 L299.3 339.3 L298.6 338.2 L298.0 337.1 L297.5 336.0 L297.0 335.0 L296.6 334.0 L296.3 333.1 L296.0 332.2 L295.8 331.3 L295.7 330.4 L295.6 329.5 L295.5 328.6 L295.5 327.7 L295.5 326.7 L295.5 325.8 L295.6 324.8 L295.7 323.9 L295.9 322.9 L296.1 322.0 L296.3 321.1 L296.6 320.3 L297.0 319.5 L297.4 318.7 L297.8 318.1 L298.3 317.4 L298.9 316.7 L299.6 316.0 L300.2 315.4 L301.0 314.9 L301.7 314.4 L302.5 313.9 L303.3 313.6 L304.1 313.3 L305.0 313.0 L306.1 312.8 L307.3 312.7 L308.6 312.5 L310.0 312.5 L311.4 312.5 L312.9 312.5 L314.3 312.7 L315.8 312.9 L317.2 313.1 L318.5 313.5 L319.9 313.9 L321.4 314.5 L322.9 315.1 L324.5 315.8 L326.1 316.6 L327.7 317.5 L329.3 318.4 L330.9 319.4 L332.5 320.5 L334.0 321.5 L335.5 322.7 L337.0 323.9 L338.5 325.2 L340.0 326.6 L341.6 328.0 L343.1 329.5 L344.6 331.1 L346.1 332.6 L347.6 334.2 L349.0 335.9 L350.5 337.5 L352.0 339.2 L353.5 341.0 L355.0 342.8 L356.5 344.7 L357.9 346.5 L359.3 348.3 L360.7 350.1 L361.9 351.8 L363.1 353.3 L364.1 354.8 L365.0 356.3 L365.9 357.7 L366.7 359.1 L367.5 360.5 L368.3 361.9 L369.0 363.2 L369.6 364.4 L370.3 365.6 L370.9 366.8 L371.5 367.9 L372.1 368.8 L372.6 369.7 L373.1 370.6 L373.5 371.4 L373.9 372.1 L374.3 372.9 L374.7 373.6 L375.1 374.3 L375.5 375.0 L375.9 375.8 L376.2 376.5 L376.6 377.3 L377.0 378.0 L377.4 378.7 L377.7 379.3 L378.0 380.0 L378.3 380.5 L378.6 381.0 L378.8 381.3Z" fill="#e6abb3" opacity="0.55"/><path d="M379.7 380.9 L379.6 380.5 L379.4 380.0 L379.1 379.5 L378.9 378.8 L378.6 378.2 L378.3 377.4 L377.9 376.7 L377.6 375.9 L377.3 375.1 L376.9 374.3 L376.6 373.6 L376.3 372.9 L376.0 372.1 L375.6 371.3 L375.3 370.5 L374.9 369.7 L374.5 368.8 L374.1 367.9 L373.6 366.9 L373.1 365.8 L372.6 364.6 L372.0 363.3 L371.5 362.0 L370.9 360.7 L370.3 359.2 L369.6 357.7 L368.9 356.2 L368.1 354.6 L367.2 353.0 L366.2 351.3 L365.2 349.6 L364.0 347.8 L362.7 345.9 L361.4 344.0 L360.0 342.1 L358.6 340.1 L357.2 338.2 L355.7 336.3 L354.2 334.4 L352.8 332.7 L351.3 331.0 L349.8 329.3 L348.3 327.6 L346.8 326.0 L345.3 324.3 L343.7 322.8 L342.1 321.3 L340.5 319.8 L338.9 318.5 L337.2 317.2 L335.6 316.0 L333.8 314.9 L332.1 313.8 L330.3 312.8 L328.6 311.8 L326.8 311.0 L325.0 310.2 L323.2 309.5 L321.5 308.9 L319.8 308.4 L318.1 308.1 L316.3 307.9 L314.6 307.7 L312.9 307.7 L311.2 307.8 L309.6 307.9 L308.0 308.1 L306.5 308.4 L305.1 308.7 L303.8 309.1 L302.6 309.6 L301.5 310.1 L300.4 310.7 L299.5 311.4 L298.6 312.2 L297.8 313.0 L297.1 313.8 L296.4 314.7 L295.8 315.6 L295.2 316.4 L294.7 317.3 L294.2 318.3 L293.9 319.3 L293.6 320.3 L293.3 321.4 L293.1 322.5 L293.0 323.5 L292.9 324.6 L292.8 325.7 L292.8 326.7 L292.8 327.7 L292.8 328.7 L292.9 329.7 L293.0 330.8 L293.2 331.8 L293.5 332.8 L293.8 333.9 L294.1 334.9 L294.5 336.0 L295.0 337.2 L295.6 338.3 L296.2 339.5 L296.9 340.7 L297.6 341.9 L298.4 343.1 L299.2 344.4 L300.2 345.6 L301.2 346.9 L302.4 348.1 L303.6 349.4 L305.0 350.7 L306.4 352.0 L308.0 353.3 L309.7 354.6 L311.4 355.9 L313.2 357.2 L315.1 358.5 L317.0 359.8 L318.8 361.1 L320.7 362.3 L322.6 363.6 L324.6 364.8 L326.7 366.1 L328.8 367.4 L330.9 368.6 L333.0 369.9 L335.1 371.1 L337.2 372.2 L339.2 373.3 L341.2 374.3 L343.2 375.3 L345.3 376.2 L347.3 377.1 L349.3 378.0 L351.3 378.8 L353.3 379.6 L355.2 380.3 L357.0 381.0 L358.6 381.6 L360.2 382.2 L361.6 382.7 L362.9 383.1 L364.1 383.5 L365.2 383.9 L366.3 384.2 L367.3 384.4 L368.2 384.7 L369.1 384.9 L370.0 385.2 L370.9 385.4 L371.8 385.6 L372.7 385.8 L373.5 386.0 L374.3 386.2 L375.1 386.3 L375.8 386.5 L376.5 386.6 L377.0 386.7 L377.5 386.8 L377.9 386.9 L378.1 386.1 L377.7 386.0 L377.2 385.8 L376.6 385.7 L376.0 385.5 L375.3 385.4 L374.5 385.2 L373.8 385.0 L372.9 384.7 L372.1 384.5 L371.2 384.2 L370.4 383.9 L369.5 383.6 L368.6 383.4 L367.7 383.0 L366.7 382.7 L365.7 382.4 L364.7 382.0 L363.5 381.5 L362.2 381.0 L360.8 380.4 L359.3 379.8 L357.7 379.1 L355.9 378.4 L354.1 377.6 L352.2 376.8 L350.2 375.9 L348.3 375.0 L346.3 374.0 L344.3 373.1 L342.4 372.1 L340.4 371.0 L338.4 369.9 L336.4 368.8 L334.3 367.6 L332.2 366.3 L330.1 365.1 L328.1 363.8 L326.1 362.6 L324.1 361.3 L322.2 360.1 L320.3 358.9 L318.4 357.6 L316.5 356.4 L314.7 355.2 L312.9 353.9 L311.1 352.7 L309.5 351.4 L307.9 350.2 L306.4 349.0 L305.1 347.8 L303.9 346.7 L302.8 345.5 L301.8 344.3 L300.9 343.1 L300.0 342.0 L299.3 340.8 L298.6 339.7 L297.9 338.5 L297.3 337.4 L296.8 336.3 L296.3 335.3 L295.9 334.3 L295.5 333.3 L295.3 332.4 L295.1 331.4 L294.9 330.5 L294.8 329.6 L294.7 328.6 L294.7 327.7 L294.7 326.7 L294.7 325.7 L294.8 324.8 L294.9 323.8 L295.1 322.8 L295.3 321.8 L295.5 320.9 L295.8 320.0 L296.2 319.1 L296.6 318.3 L297.0 317.6 L297.6 316.8 L298.2 316.1 L298.8 315.4 L299.5 314.7 L300.3 314.1 L301.0 313.5 L301.9 313.0 L302.8 312.6 L303.7 312.2 L304.7 311.9 L305.8 311.6 L307.1 311.4 L308.4 311.2 L309.9 311.1 L311.4 311.1 L312.9 311.1 L314.4 311.2 L315.9 311.4 L317.4 311.7 L318.9 312.0 L320.4 312.5 L321.9 313.0 L323.5 313.7 L325.2 314.4 L326.8 315.2 L328.5 316.1 L330.1 317.1 L331.8 318.1 L333.4 319.2 L335.0 320.3 L336.5 321.4 L338.0 322.7 L339.6 324.0 L341.1 325.5 L342.6 326.9 L344.2 328.5 L345.7 330.1 L347.2 331.7 L348.6 333.3 L350.1 334.9 L351.6 336.6 L353.1 338.4 L354.6 340.2 L356.1 342.0 L357.5 343.9 L359.0 345.8 L360.3 347.6 L361.6 349.4 L362.9 351.1 L364.0 352.8 L365.0 354.3 L365.9 355.8 L366.8 357.3 L367.6 358.7 L368.3 360.1 L369.0 361.5 L369.7 362.8 L370.3 364.1 L371.0 365.3 L371.6 366.5 L372.1 367.6 L372.7 368.6 L373.1 369.5 L373.6 370.3 L374.0 371.1 L374.4 371.9 L374.8 372.6 L375.2 373.4 L375.5 374.1 L375.9 374.8 L376.3 375.6 L376.6 376.3 L377.0 377.1 L377.4 377.8 L377.7 378.5 L378.1 379.2 L378.4 379.8 L378.6 380.4 L378.9 380.8 L379.0 381.2Z" fill="#f2c5c8" opacity="0.9"/>
<path d="M379.7 384.7 L379.3 384.4 L379.0 384.1 L378.6 383.8 L378.2 383.4 L377.7 383.0 L377.2 382.5 L376.6 381.9 L375.9 381.2 L375.1 380.5 L374.3 379.6 L373.3 378.5 L372.2 377.3 L371.0 376.0 L369.8 374.5 L368.4 373.0 L367.0 371.4 L365.6 369.8 L364.1 368.2 L362.6 366.6 L361.0 365.1 L359.5 363.6 L358.0 362.1 L356.4 360.6 L354.8 359.1 L353.1 357.6 L351.4 356.1 L349.7 354.6 L347.9 353.2 L346.1 351.8 L344.3 350.4 L342.5 349.1 L340.7 347.8 L338.8 346.5 L336.9 345.3 L335.0 344.0 L333.0 342.8 L331.0 341.7 L329.0 340.6 L326.9 339.6 L324.8 338.8 L322.7 338.0 L320.6 337.3 L318.5 336.7 L316.4 336.1 L314.3 335.7 L312.1 335.3 L310.0 335.1 L307.9 334.9 L305.9 334.8 L303.9 334.9 L301.9 335.1 L299.9 335.5 L298.0 336.0 L296.3 336.6 L294.6 337.4 L293.0 338.1 L291.5 338.9 L290.2 339.7 L288.9 340.6 L287.7 341.4 L286.5 342.2 L285.5 343.2 L284.5 344.2 L283.6 345.2 L282.8 346.3 L282.1 347.3 L281.5 348.4 L281.0 349.5 L280.5 350.6 L280.1 351.8 L279.7 352.9 L279.4 354.1 L279.2 355.4 L279.0 356.6 L278.9 357.9 L278.9 359.2 L278.9 360.5 L279.1 361.8 L279.3 363.1 L279.5 364.4 L279.9 365.8 L280.3 367.1 L280.9 368.5 L281.4 369.9 L282.1 371.3 L282.8 372.7 L283.6 374.0 L284.4 375.4 L285.3 376.7 L286.2 378.0 L287.2 379.2 L288.2 380.4 L289.2 381.6 L290.3 382.8 L291.5 383.9 L292.8 385.1 L294.2 386.2 L295.6 387.3 L297.2 388.3 L298.8 389.3 L300.5 390.2 L302.3 391.0 L304.1 391.8 L306.0 392.5 L308.0 393.2 L310.1 393.9 L312.2 394.4 L314.3 394.9 L316.6 395.3 L318.9 395.7 L321.3 395.9 L323.8 396.0 L326.3 396.0 L328.9 395.9 L331.5 395.8 L334.1 395.6 L336.6 395.4 L339.1 395.2 L341.4 395.0 L343.6 394.8 L345.8 394.6 L347.9 394.3 L350.0 393.9 L352.1 393.6 L354.0 393.2 L355.9 392.9 L357.7 392.5 L359.4 392.2 L360.9 391.9 L362.4 391.6 L363.7 391.3 L364.9 391.1 L366.0 390.9 L367.1 390.7 L368.0 390.6 L368.9 390.4 L369.7 390.2 L370.5 390.1 L371.3 389.9 L372.1 389.8 L372.9 389.7 L373.7 389.5 L374.5 389.4 L375.3 389.3 L376.0 389.1 L376.6 389.0 L377.2 388.9 L377.7 388.8 L378.2 388.8 L378.6 388.7 L378.4 386.1 L378.1 386.1 L377.6 386.1 L377.1 386.0 L376.4 386.0 L375.8 386.0 L375.1 385.9 L374.3 385.9 L373.5 385.9 L372.7 385.8 L371.9 385.8 L371.0 385.8 L370.2 385.8 L369.4 385.7 L368.5 385.7 L367.6 385.7 L366.6 385.7 L365.6 385.6 L364.5 385.6 L363.2 385.6 L361.8 385.6 L360.3 385.6 L358.7 385.7 L356.9 385.7 L355.1 385.7 L353.2 385.8 L351.3 385.8 L349.3 385.8 L347.3 385.8 L345.3 385.8 L343.2 385.8 L341.0 385.8 L338.7 385.8 L336.3 385.7 L333.8 385.7 L331.4 385.7 L328.9 385.6 L326.5 385.5 L324.3 385.3 L322.1 385.2 L320.1 384.9 L318.2 384.7 L316.3 384.4 L314.5 384.0 L312.7 383.7 L310.9 383.3 L309.2 382.8 L307.6 382.4 L306.0 381.9 L304.5 381.3 L303.2 380.7 L301.9 380.1 L300.7 379.5 L299.6 378.7 L298.6 378.0 L297.5 377.2 L296.6 376.3 L295.6 375.4 L294.7 374.5 L293.8 373.6 L293.0 372.6 L292.2 371.7 L291.4 370.7 L290.7 369.6 L290.1 368.6 L289.5 367.5 L288.9 366.4 L288.4 365.3 L287.9 364.3 L287.6 363.3 L287.3 362.4 L287.0 361.5 L286.8 360.6 L286.7 359.7 L286.6 358.9 L286.5 358.0 L286.5 357.2 L286.6 356.4 L286.7 355.7 L286.9 354.9 L287.1 354.2 L287.4 353.5 L287.7 352.9 L288.1 352.2 L288.6 351.6 L289.0 351.0 L289.6 350.5 L290.2 350.0 L290.8 349.5 L291.5 349.1 L292.3 348.6 L293.3 348.2 L294.4 347.7 L295.5 347.2 L296.7 346.8 L298.0 346.4 L299.2 346.1 L300.5 345.8 L301.8 345.6 L303.1 345.5 L304.3 345.5 L305.7 345.5 L307.2 345.6 L308.8 345.8 L310.4 346.1 L312.2 346.4 L313.9 346.8 L315.7 347.2 L317.5 347.7 L319.3 348.3 L321.0 348.8 L322.7 349.5 L324.4 350.2 L326.1 351.1 L327.9 352.0 L329.7 353.0 L331.6 354.0 L333.4 355.1 L335.3 356.2 L337.1 357.3 L338.9 358.4 L340.7 359.5 L342.4 360.6 L344.2 361.8 L346.0 363.0 L347.8 364.3 L349.5 365.5 L351.3 366.8 L353.0 368.1 L354.7 369.3 L356.4 370.5 L358.0 371.8 L359.7 373.0 L361.4 374.3 L363.0 375.6 L364.7 376.9 L366.3 378.2 L367.8 379.4 L369.2 380.5 L370.5 381.5 L371.7 382.4 L372.8 383.2 L373.8 383.8 L374.6 384.4 L375.4 384.9 L376.1 385.3 L376.7 385.6 L377.2 385.9 L377.6 386.1 L378.0 386.3 L378.3 386.5Z" fill="#d9989f" stroke="#9e6069" stroke-width="0.9" stroke-opacity="0.55"/><path d="M379.4 385.1 L379.1 384.8 L378.7 384.5 L378.3 384.2 L377.9 383.9 L377.4 383.5 L376.8 383.0 L376.2 382.4 L375.4 381.8 L374.6 381.0 L373.7 380.2 L372.7 379.2 L371.6 378.0 L370.4 376.7 L369.0 375.3 L367.6 373.8 L366.2 372.3 L364.7 370.7 L363.1 369.2 L361.6 367.7 L360.1 366.2 L358.5 364.8 L356.9 363.4 L355.3 361.9 L353.7 360.5 L352.0 359.0 L350.3 357.6 L348.5 356.1 L346.7 354.7 L345.0 353.4 L343.2 352.1 L341.4 350.8 L339.5 349.6 L337.7 348.3 L335.8 347.1 L333.9 345.9 L331.9 344.7 L330.0 343.7 L328.0 342.6 L326.0 341.7 L324.0 340.9 L322.0 340.1 L320.0 339.5 L317.9 338.9 L315.9 338.4 L313.8 337.9 L311.8 337.6 L309.8 337.3 L307.8 337.2 L305.9 337.1 L304.0 337.1 L302.1 337.3 L300.3 337.6 L298.6 338.1 L296.9 338.6 L295.3 339.3 L293.8 339.9 L292.4 340.7 L291.0 341.4 L289.8 342.1 L288.7 342.9 L287.6 343.7 L286.6 344.5 L285.7 345.4 L284.9 346.3 L284.1 347.3 L283.5 348.2 L282.9 349.2 L282.4 350.2 L282.0 351.3 L281.6 352.3 L281.2 353.4 L281.0 354.5 L280.7 355.6 L280.6 356.7 L280.5 357.9 L280.5 359.1 L280.6 360.3 L280.7 361.5 L280.9 362.8 L281.2 364.0 L281.5 365.3 L281.9 366.5 L282.4 367.8 L283.0 369.2 L283.6 370.5 L284.3 371.8 L285.1 373.1 L285.9 374.4 L286.8 375.7 L287.7 376.9 L288.6 378.0 L289.5 379.2 L290.6 380.3 L291.6 381.4 L292.8 382.5 L294.0 383.6 L295.3 384.7 L296.7 385.7 L298.2 386.6 L299.7 387.5 L301.4 388.3 L303.1 389.1 L304.9 389.8 L306.7 390.5 L308.6 391.1 L310.6 391.7 L312.7 392.3 L314.8 392.7 L316.9 393.1 L319.1 393.4 L321.4 393.6 L323.9 393.8 L326.4 393.8 L328.9 393.8 L331.5 393.7 L334.0 393.6 L336.5 393.4 L339.0 393.2 L341.3 393.1 L343.5 392.9 L345.7 392.7 L347.8 392.5 L349.9 392.2 L351.9 392.0 L353.9 391.7 L355.7 391.4 L357.5 391.1 L359.2 390.8 L360.8 390.5 L362.3 390.3 L363.6 390.1 L364.8 390.0 L366.0 389.8 L367.0 389.7 L367.9 389.5 L368.8 389.4 L369.7 389.3 L370.5 389.2 L371.3 389.1 L372.1 389.0 L372.9 388.8 L373.7 388.7 L374.5 388.6 L375.2 388.6 L375.9 388.5 L376.6 388.4 L377.2 388.3 L377.7 388.3 L378.2 388.2 L378.5 388.2 L378.4 386.4 L378.1 386.4 L377.6 386.4 L377.1 386.4 L376.5 386.4 L375.8 386.4 L375.1 386.4 L374.3 386.3 L373.5 386.3 L372.7 386.3 L371.9 386.3 L371.1 386.3 L370.3 386.3 L369.4 386.3 L368.6 386.3 L367.7 386.3 L366.7 386.3 L365.7 386.3 L364.5 386.3 L363.3 386.4 L361.9 386.4 L360.4 386.4 L358.7 386.5 L357.0 386.6 L355.2 386.7 L353.3 386.7 L351.4 386.8 L349.4 386.9 L347.4 386.9 L345.3 387.0 L343.2 387.0 L341.1 387.0 L338.7 387.0 L336.3 387.0 L333.8 387.0 L331.4 387.0 L328.9 386.9 L326.5 386.9 L324.2 386.7 L322.0 386.6 L320.0 386.3 L318.0 386.1 L316.1 385.7 L314.2 385.4 L312.3 385.0 L310.5 384.6 L308.8 384.1 L307.1 383.6 L305.5 383.0 L304.0 382.5 L302.6 381.8 L301.3 381.2 L300.1 380.5 L298.9 379.7 L297.8 378.9 L296.8 378.1 L295.8 377.2 L294.8 376.2 L293.8 375.3 L292.9 374.3 L292.1 373.3 L291.3 372.3 L290.5 371.3 L289.8 370.2 L289.1 369.1 L288.5 368.0 L287.9 366.9 L287.4 365.8 L287.0 364.7 L286.6 363.6 L286.3 362.6 L286.0 361.7 L285.8 360.7 L285.7 359.8 L285.6 358.9 L285.5 358.0 L285.5 357.1 L285.6 356.3 L285.7 355.5 L285.9 354.7 L286.2 353.9 L286.5 353.2 L286.9 352.4 L287.3 351.7 L287.7 351.1 L288.2 350.4 L288.8 349.8 L289.4 349.2 L290.1 348.7 L290.9 348.2 L291.7 347.7 L292.7 347.2 L293.8 346.6 L295.0 346.1 L296.2 345.7 L297.5 345.2 L298.9 344.9 L300.2 344.5 L301.6 344.3 L302.9 344.2 L304.3 344.1 L305.7 344.1 L307.3 344.2 L308.9 344.4 L310.7 344.7 L312.4 345.0 L314.3 345.4 L316.1 345.8 L317.9 346.3 L319.7 346.9 L321.5 347.5 L323.2 348.2 L325.0 349.0 L326.8 349.8 L328.6 350.8 L330.4 351.8 L332.3 352.8 L334.1 353.9 L336.0 355.1 L337.8 356.2 L339.6 357.3 L341.4 358.5 L343.2 359.7 L344.9 360.9 L346.7 362.1 L348.5 363.4 L350.2 364.7 L351.9 366.0 L353.6 367.3 L355.3 368.6 L357.0 369.8 L358.6 371.1 L360.2 372.4 L361.9 373.7 L363.5 375.1 L365.2 376.4 L366.7 377.7 L368.2 378.9 L369.6 380.1 L370.9 381.1 L372.1 382.1 L373.1 382.8 L374.0 383.5 L374.9 384.1 L375.6 384.6 L376.3 385.0 L376.9 385.3 L377.4 385.6 L377.8 385.8 L378.2 386.1 L378.5 386.3Z" fill="#e6abb3" opacity="0.55"/><path d="M379.1 385.4 L378.8 385.2 L378.5 384.9 L378.1 384.6 L377.6 384.3 L377.1 383.9 L376.5 383.4 L375.8 382.9 L375.1 382.3 L374.2 381.5 L373.3 380.7 L372.2 379.7 L371.0 378.6 L369.8 377.3 L368.4 375.9 L367.0 374.5 L365.5 373.0 L363.9 371.5 L362.4 370.1 L360.8 368.6 L359.2 367.2 L357.6 365.8 L356.0 364.4 L354.4 363.0 L352.7 361.6 L351.0 360.2 L349.3 358.8 L347.5 357.4 L345.8 356.1 L344.0 354.8 L342.2 353.5 L340.4 352.3 L338.6 351.1 L336.7 349.9 L334.8 348.7 L332.9 347.5 L331.0 346.4 L329.1 345.3 L327.2 344.4 L325.2 343.5 L323.3 342.7 L321.4 342.0 L319.4 341.4 L317.4 340.8 L315.4 340.3 L313.4 339.9 L311.5 339.5 L309.5 339.3 L307.6 339.1 L305.8 339.0 L304.1 339.0 L302.3 339.2 L300.6 339.5 L299.0 339.8 L297.4 340.3 L295.9 340.9 L294.5 341.5 L293.1 342.1 L291.8 342.8 L290.6 343.5 L289.5 344.2 L288.5 344.9 L287.5 345.7 L286.7 346.4 L285.9 347.3 L285.2 348.1 L284.6 349.0 L284.1 349.9 L283.6 350.8 L283.2 351.8 L282.8 352.7 L282.5 353.7 L282.3 354.7 L282.1 355.8 L281.9 356.8 L281.9 357.9 L281.9 359.0 L281.9 360.2 L282.1 361.3 L282.3 362.5 L282.6 363.6 L282.9 364.8 L283.3 366.0 L283.8 367.3 L284.4 368.5 L285.0 369.8 L285.6 371.1 L286.4 372.3 L287.2 373.6 L288.0 374.8 L288.9 375.9 L289.8 377.0 L290.7 378.1 L291.7 379.2 L292.8 380.3 L293.9 381.3 L295.0 382.3 L296.3 383.3 L297.6 384.2 L299.0 385.1 L300.5 385.9 L302.1 386.7 L303.8 387.4 L305.5 388.1 L307.3 388.8 L309.2 389.4 L311.1 389.9 L313.1 390.4 L315.1 390.8 L317.2 391.2 L319.4 391.5 L321.6 391.7 L324.0 391.8 L326.4 391.9 L328.9 391.9 L331.5 391.9 L334.0 391.8 L336.5 391.7 L338.9 391.5 L341.2 391.4 L343.4 391.3 L345.6 391.2 L347.7 391.0 L349.7 390.8 L351.8 390.6 L353.7 390.3 L355.6 390.1 L357.4 389.8 L359.1 389.6 L360.7 389.4 L362.2 389.3 L363.5 389.1 L364.7 389.0 L365.9 388.9 L366.9 388.8 L367.9 388.7 L368.7 388.6 L369.6 388.5 L370.4 388.4 L371.2 388.3 L372.0 388.2 L372.8 388.2 L373.6 388.1 L374.4 388.0 L375.2 388.0 L375.9 387.9 L376.6 387.8 L377.2 387.8 L377.7 387.8 L378.1 387.7 L378.5 387.7 L378.5 386.8 L378.1 386.8 L377.6 386.8 L377.1 386.8 L376.5 386.8 L375.8 386.8 L375.1 386.8 L374.4 386.8 L373.6 386.8 L372.8 386.9 L371.9 386.9 L371.1 386.9 L370.3 386.9 L369.5 386.9 L368.6 387.0 L367.7 387.0 L366.8 387.0 L365.7 387.1 L364.6 387.1 L363.3 387.2 L362.0 387.2 L360.5 387.3 L358.8 387.4 L357.1 387.5 L355.3 387.7 L353.4 387.8 L351.5 387.9 L349.5 388.0 L347.5 388.1 L345.4 388.2 L343.3 388.2 L341.1 388.3 L338.8 388.3 L336.4 388.4 L333.9 388.4 L331.4 388.4 L328.9 388.4 L326.5 388.3 L324.1 388.2 L321.9 388.1 L319.8 387.8 L317.8 387.6 L315.8 387.2 L313.9 386.8 L312.0 386.4 L310.1 386.0 L308.4 385.5 L306.6 384.9 L305.0 384.3 L303.5 383.7 L302.0 383.0 L300.6 382.3 L299.4 381.6 L298.2 380.8 L297.0 379.9 L295.9 379.0 L294.9 378.1 L293.9 377.1 L292.9 376.1 L292.0 375.1 L291.1 374.1 L290.3 373.0 L289.5 371.9 L288.8 370.8 L288.1 369.7 L287.5 368.5 L286.9 367.4 L286.4 366.2 L285.9 365.1 L285.5 364.0 L285.2 362.9 L284.9 361.9 L284.7 360.9 L284.6 359.9 L284.5 358.9 L284.5 358.0 L284.5 357.1 L284.6 356.1 L284.7 355.3 L284.9 354.4 L285.2 353.6 L285.5 352.8 L285.9 352.0 L286.3 351.2 L286.8 350.5 L287.4 349.7 L288.0 349.1 L288.6 348.4 L289.4 347.8 L290.2 347.2 L291.1 346.7 L292.1 346.1 L293.2 345.5 L294.4 345.0 L295.7 344.4 L297.1 344.0 L298.4 343.5 L299.9 343.2 L301.3 342.9 L302.7 342.7 L304.2 342.6 L305.7 342.6 L307.4 342.7 L309.1 342.9 L310.9 343.2 L312.7 343.5 L314.6 343.9 L316.5 344.4 L318.3 344.9 L320.2 345.5 L322.0 346.1 L323.8 346.8 L325.6 347.6 L327.4 348.5 L329.3 349.5 L331.1 350.5 L333.0 351.6 L334.9 352.8 L336.7 353.9 L338.6 355.1 L340.4 356.2 L342.1 357.4 L343.9 358.6 L345.7 359.9 L347.4 361.2 L349.2 362.5 L350.9 363.8 L352.6 365.1 L354.3 366.5 L356.0 367.8 L357.6 369.1 L359.2 370.4 L360.9 371.7 L362.5 373.1 L364.1 374.5 L365.7 375.9 L367.2 377.2 L368.7 378.5 L370.0 379.6 L371.3 380.7 L372.4 381.7 L373.4 382.5 L374.3 383.1 L375.2 383.7 L375.9 384.2 L376.5 384.6 L377.1 385.0 L377.6 385.3 L378.0 385.6 L378.4 385.8 L378.7 386.0Z" fill="#f2c5c8" opacity="0.9"/>
<path d="M447.6 492.6 L447.7 493.1 L447.8 493.8 L448.0 494.5 L448.2 495.4 L448.4 496.3 L448.6 497.2 L448.8 498.1 L448.9 499.0 L449.0 499.8 L449.1 500.5 L449.2 501.2 L449.2 501.9 L449.2 502.6 L449.2 503.3 L449.2 504.0 L449.2 504.7 L449.2 505.5 L449.2 506.3 L449.2 507.1 L449.2 508.0 L449.3 508.9 L449.3 509.9 L449.3 510.8 L449.3 511.9 L449.4 512.9 L449.4 514.0 L449.4 515.0 L449.5 516.0 L449.5 517.0 L449.6 518.0 L449.7 518.9 L449.8 519.9 L450.0 520.8 L450.2 521.8 L450.3 522.7 L450.5 523.5 L450.7 524.3 L450.8 525.0 L450.9 525.6 L451.0 526.0 L453.6 526.0 L453.7 525.5 L453.7 524.9 L453.8 524.2 L453.9 523.4 L454.0 522.6 L454.2 521.7 L454.3 520.7 L454.4 519.8 L454.5 518.9 L454.6 518.0 L454.7 517.1 L454.8 516.2 L454.9 515.2 L455.0 514.1 L455.1 513.1 L455.2 512.0 L455.2 511.0 L455.3 510.0 L455.3 508.9 L455.4 508.0 L455.4 507.1 L455.4 506.3 L455.4 505.4 L455.3 504.6 L455.3 503.8 L455.2 503.0 L455.2 502.1 L455.0 501.3 L454.9 500.4 L454.7 499.5 L454.4 498.5 L454.1 497.6 L453.7 496.6 L453.3 495.7 L452.9 494.7 L452.4 493.9 L452.1 493.1 L451.7 492.4 L451.4 491.8 L451.2 491.4Z" fill="#d9989f" stroke="#9e6069" stroke-width="0.9" stroke-opacity="0.55"/><path d="M448.3 492.4 L448.5 492.8 L448.7 493.5 L448.9 494.2 L449.1 495.1 L449.3 495.9 L449.6 496.9 L449.8 497.8 L450.0 498.7 L450.2 499.5 L450.3 500.3 L450.4 501.0 L450.4 501.7 L450.5 502.5 L450.5 503.2 L450.5 503.9 L450.5 504.7 L450.5 505.5 L450.5 506.3 L450.5 507.1 L450.5 508.0 L450.5 508.9 L450.6 509.9 L450.6 510.9 L450.6 511.9 L450.6 512.9 L450.6 514.0 L450.6 515.0 L450.6 516.1 L450.6 517.1 L450.7 518.0 L450.7 518.9 L450.8 519.9 L450.9 520.8 L451.0 521.8 L451.1 522.7 L451.2 523.5 L451.3 524.3 L451.4 525.0 L451.5 525.6 L451.5 526.0 L453.3 526.0 L453.3 525.5 L453.4 524.9 L453.4 524.2 L453.5 523.4 L453.6 522.6 L453.6 521.7 L453.7 520.8 L453.8 519.8 L453.9 518.9 L453.9 518.0 L454.0 517.1 L454.1 516.1 L454.2 515.1 L454.2 514.1 L454.3 513.1 L454.4 512.0 L454.5 511.0 L454.5 509.9 L454.5 508.9 L454.6 508.0 L454.6 507.1 L454.6 506.3 L454.6 505.4 L454.5 504.6 L454.5 503.8 L454.5 503.0 L454.4 502.2 L454.3 501.3 L454.1 500.5 L454.0 499.6 L453.7 498.7 L453.4 497.7 L453.0 496.8 L452.7 495.9 L452.3 494.9 L451.9 494.1 L451.5 493.3 L451.2 492.6 L450.9 492.0 L450.7 491.6Z" fill="#e6abb3" opacity="0.55"/><path d="M449.0 492.1 L449.1 492.6 L449.3 493.2 L449.6 494.0 L449.9 494.8 L450.1 495.7 L450.4 496.6 L450.7 497.5 L450.9 498.4 L451.1 499.3 L451.3 500.1 L451.4 500.9 L451.5 501.6 L451.5 502.4 L451.6 503.1 L451.6 503.9 L451.6 504.7 L451.6 505.5 L451.6 506.3 L451.6 507.1 L451.6 508.0 L451.6 508.9 L451.6 509.9 L451.6 510.9 L451.6 511.9 L451.6 513.0 L451.6 514.0 L451.5 515.1 L451.5 516.1 L451.5 517.1 L451.6 518.0 L451.6 518.9 L451.6 519.9 L451.7 520.8 L451.7 521.7 L451.8 522.6 L451.8 523.5 L451.9 524.3 L451.9 525.0 L452.0 525.5 L452.0 526.0 L452.9 526.0 L452.9 525.5 L452.9 524.9 L453.0 524.2 L453.0 523.4 L453.0 522.6 L453.1 521.7 L453.1 520.8 L453.2 519.8 L453.2 518.9 L453.2 518.0 L453.3 517.1 L453.3 516.1 L453.4 515.1 L453.5 514.1 L453.5 513.0 L453.6 512.0 L453.6 510.9 L453.7 509.9 L453.7 508.9 L453.7 508.0 L453.7 507.1 L453.7 506.3 L453.7 505.4 L453.7 504.6 L453.7 503.8 L453.6 503.0 L453.6 502.2 L453.5 501.4 L453.3 500.6 L453.2 499.8 L453.0 498.9 L452.7 497.9 L452.4 497.0 L452.0 496.1 L451.7 495.2 L451.3 494.3 L451.0 493.5 L450.7 492.8 L450.4 492.2 L450.2 491.7Z" fill="#f2c5c8" opacity="0.9"/>
<path d="M383.6 390.1 L384.1 390.5 L384.6 391.0 L385.3 391.6 L386.0 392.3 L386.9 393.1 L387.8 393.9 L388.8 394.7 L389.9 395.6 L391.0 396.4 L392.3 397.3 L393.7 398.1 L395.3 398.9 L396.9 399.7 L398.6 400.5 L400.4 401.3 L402.0 402.1 L403.6 402.9 L405.1 403.7 L406.4 404.6 L407.4 405.4 L408.3 406.3 L409.2 407.2 L410.0 408.2 L410.7 409.3 L411.4 410.4 L412.0 411.6 L412.6 412.7 L413.1 413.9 L413.6 415.1 L414.1 416.2 L414.5 417.2 L414.8 418.1 L415.1 419.0 L415.3 419.9 L415.4 420.8 L415.6 421.8 L415.7 422.7 L415.8 423.8 L415.8 424.9 L415.8 426.1 L415.9 427.3 L415.8 428.5 L415.7 429.8 L415.6 431.2 L415.5 432.7 L415.3 434.1 L415.1 435.6 L414.9 437.1 L414.7 438.6 L414.5 440.1 L414.4 441.5 L414.1 442.9 L413.9 444.4 L413.6 445.9 L413.3 447.4 L413.0 449.0 L412.8 450.5 L412.7 452.1 L412.6 453.7 L412.7 455.3 L412.8 456.8 L413.1 458.2 L413.4 459.6 L413.8 461.0 L414.2 462.3 L414.7 463.6 L415.3 464.8 L415.9 466.0 L416.5 467.2 L417.2 468.4 L418.0 469.6 L418.8 470.9 L419.8 472.1 L420.7 473.2 L421.7 474.3 L422.7 475.4 L423.7 476.4 L424.7 477.4 L425.7 478.3 L426.7 479.1 L427.8 479.9 L428.9 480.7 L430.0 481.4 L431.1 482.0 L432.2 482.5 L433.2 483.0 L434.2 483.5 L435.1 483.9 L436.0 484.3 L436.7 484.7 L437.4 485.0 L438.0 485.3 L438.5 485.6 L439.0 485.8 L439.5 486.0 L439.9 486.2 L440.3 486.3 L440.7 486.5 L441.1 486.8 L441.5 487.0 L441.9 487.4 L442.3 487.7 L442.7 488.0 L443.1 488.3 L443.4 488.6 L443.7 488.9 L444.0 489.2 L444.3 489.6 L444.5 489.9 L444.8 490.3 L445.2 490.7 L445.6 491.2 L445.9 491.8 L446.3 492.3 L446.7 492.9 L447.1 493.5 L447.5 494.1 L447.9 494.7 L448.3 495.3 L448.7 496.0 L449.1 496.7 L449.6 497.5 L450.0 498.3 L450.5 499.1 L451.0 500.0 L451.5 500.8 L452.0 501.7 L452.5 502.5 L452.9 503.3 L453.4 504.1 L453.8 504.9 L454.2 505.6 L454.6 506.4 L455.0 507.2 L455.4 508.0 L455.8 508.8 L456.2 509.6 L456.6 510.3 L457.0 511.1 L457.3 511.8 L457.7 512.5 L458.0 513.3 L458.4 514.0 L458.8 514.8 L459.1 515.5 L459.4 516.2 L459.7 516.8 L460.0 517.4 L460.3 517.9 L460.4 518.3 L463.0 517.7 L462.9 517.3 L462.9 516.7 L462.9 516.1 L462.9 515.4 L462.9 514.6 L462.9 513.7 L462.8 512.9 L462.7 512.0 L462.6 511.0 L462.5 510.2 L462.3 509.3 L462.2 508.5 L462.0 507.6 L461.8 506.6 L461.5 505.7 L461.3 504.7 L461.0 503.8 L460.6 502.8 L460.3 501.8 L459.8 500.9 L459.4 499.9 L458.9 499.0 L458.3 498.0 L457.8 497.1 L457.2 496.2 L456.6 495.3 L456.0 494.4 L455.4 493.5 L454.7 492.7 L454.1 492.0 L453.5 491.3 L452.9 490.6 L452.3 490.0 L451.6 489.4 L451.0 488.9 L450.4 488.4 L449.7 487.9 L449.1 487.5 L448.5 487.1 L448.0 486.7 L447.3 486.3 L446.7 486.0 L446.2 485.8 L445.6 485.6 L445.1 485.5 L444.6 485.4 L444.2 485.3 L443.7 485.1 L443.3 485.0 L442.9 484.8 L442.5 484.5 L442.2 484.2 L441.8 484.0 L441.5 483.7 L441.2 483.4 L440.8 483.1 L440.5 482.7 L440.1 482.3 L439.6 481.9 L439.1 481.3 L438.4 480.7 L437.7 480.1 L437.0 479.4 L436.2 478.6 L435.5 477.9 L434.7 477.1 L433.9 476.3 L433.1 475.5 L432.4 474.7 L431.7 473.9 L430.9 473.0 L430.1 472.1 L429.2 471.1 L428.4 470.2 L427.5 469.2 L426.7 468.2 L425.9 467.2 L425.2 466.3 L424.6 465.3 L424.0 464.4 L423.5 463.4 L423.0 462.4 L422.5 461.5 L422.1 460.5 L421.8 459.6 L421.5 458.6 L421.2 457.6 L420.9 456.6 L420.7 455.6 L420.5 454.5 L420.4 453.4 L420.3 452.3 L420.3 451.0 L420.3 449.7 L420.4 448.2 L420.5 446.8 L420.6 445.3 L420.7 443.7 L420.8 442.2 L420.9 440.7 L420.9 439.2 L421.1 437.8 L421.2 436.3 L421.4 434.8 L421.5 433.3 L421.7 431.8 L421.8 430.3 L421.9 428.8 L422.0 427.3 L422.0 425.9 L421.9 424.6 L421.8 423.4 L421.8 422.2 L421.6 421.0 L421.5 419.8 L421.3 418.7 L421.0 417.5 L420.6 416.3 L420.2 415.1 L419.7 413.8 L419.2 412.6 L418.6 411.4 L418.0 410.1 L417.2 408.7 L416.5 407.4 L415.6 406.0 L414.6 404.7 L413.5 403.4 L412.3 402.2 L411.0 401.0 L409.5 399.9 L407.8 399.0 L406.0 398.1 L404.2 397.3 L402.4 396.5 L400.6 395.8 L398.9 395.2 L397.2 394.5 L395.8 393.9 L394.5 393.3 L393.3 392.7 L392.2 392.1 L391.0 391.5 L390.0 390.8 L389.0 390.2 L388.0 389.7 L387.2 389.1 L386.4 388.7 L385.7 388.2 L385.2 387.9Z" fill="#d9989f" stroke="#9e6069" stroke-width="0.9" stroke-opacity="0.55"/><path d="M383.9 389.6 L384.4 390.0 L385.0 390.5 L385.7 391.1 L386.4 391.8 L387.3 392.5 L388.2 393.2 L389.3 394.0 L390.4 394.8 L391.5 395.7 L392.8 396.4 L394.1 397.2 L395.7 398.0 L397.3 398.7 L399.0 399.5 L400.8 400.3 L402.5 401.1 L404.1 401.9 L405.7 402.7 L407.0 403.6 L408.2 404.5 L409.2 405.4 L410.1 406.4 L410.9 407.5 L411.7 408.6 L412.4 409.8 L413.1 411.0 L413.7 412.2 L414.3 413.4 L414.8 414.5 L415.3 415.7 L415.7 416.7 L416.0 417.7 L416.3 418.7 L416.5 419.7 L416.7 420.6 L416.8 421.6 L417.0 422.6 L417.0 423.7 L417.1 424.8 L417.1 426.0 L417.1 427.3 L417.1 428.6 L417.0 429.9 L416.9 431.3 L416.7 432.8 L416.6 434.3 L416.4 435.8 L416.2 437.3 L416.0 438.8 L415.9 440.2 L415.7 441.7 L415.5 443.1 L415.3 444.6 L415.0 446.1 L414.8 447.6 L414.6 449.1 L414.4 450.6 L414.3 452.2 L414.2 453.7 L414.3 455.1 L414.5 456.5 L414.7 457.9 L415.0 459.2 L415.4 460.5 L415.8 461.7 L416.3 462.9 L416.8 464.1 L417.4 465.3 L418.0 466.4 L418.6 467.6 L419.4 468.7 L420.2 469.9 L421.0 471.0 L422.0 472.2 L422.9 473.3 L423.9 474.3 L424.9 475.3 L425.8 476.3 L426.8 477.2 L427.8 478.0 L428.7 478.8 L429.8 479.6 L430.8 480.3 L431.8 481.0 L432.9 481.6 L433.9 482.1 L434.8 482.6 L435.7 483.1 L436.5 483.5 L437.2 484.0 L437.9 484.3 L438.4 484.7 L439.0 485.0 L439.4 485.2 L439.8 485.4 L440.2 485.6 L440.6 485.9 L441.0 486.1 L441.4 486.3 L441.8 486.6 L442.2 486.9 L442.6 487.1 L443.0 487.4 L443.4 487.7 L443.8 487.9 L444.1 488.2 L444.5 488.5 L444.8 488.8 L445.1 489.2 L445.5 489.5 L445.9 490.0 L446.3 490.5 L446.7 491.0 L447.2 491.5 L447.6 492.0 L448.0 492.6 L448.5 493.2 L448.9 493.8 L449.4 494.5 L449.8 495.2 L450.3 495.9 L450.8 496.6 L451.3 497.5 L451.8 498.3 L452.3 499.2 L452.8 500.0 L453.3 500.9 L453.8 501.8 L454.3 502.6 L454.7 503.4 L455.1 504.2 L455.5 505.0 L455.9 505.9 L456.3 506.7 L456.7 507.5 L457.1 508.3 L457.4 509.1 L457.7 509.9 L458.1 510.7 L458.4 511.5 L458.7 512.2 L459.0 513.0 L459.3 513.8 L459.6 514.5 L459.9 515.3 L460.2 516.0 L460.4 516.7 L460.6 517.3 L460.8 517.8 L461.0 518.2 L462.6 517.8 L462.6 517.4 L462.6 516.8 L462.5 516.2 L462.5 515.5 L462.4 514.7 L462.3 513.9 L462.2 513.0 L462.1 512.1 L462.0 511.2 L461.8 510.4 L461.6 509.6 L461.4 508.7 L461.2 507.8 L461.0 506.9 L460.7 506.0 L460.4 505.1 L460.1 504.1 L459.8 503.2 L459.4 502.2 L459.0 501.3 L458.5 500.4 L458.0 499.4 L457.5 498.5 L457.0 497.6 L456.4 496.7 L455.8 495.8 L455.2 494.9 L454.6 494.1 L454.0 493.3 L453.4 492.5 L452.8 491.8 L452.2 491.2 L451.6 490.5 L451.0 490.0 L450.4 489.4 L449.8 488.9 L449.2 488.4 L448.7 488.0 L448.1 487.6 L447.5 487.2 L447.0 486.8 L446.4 486.5 L445.9 486.3 L445.4 486.1 L444.9 485.9 L444.4 485.7 L444.0 485.6 L443.6 485.5 L443.1 485.3 L442.7 485.1 L442.3 484.8 L442.0 484.5 L441.6 484.3 L441.3 484.0 L441.0 483.7 L440.6 483.4 L440.2 483.1 L439.8 482.7 L439.3 482.3 L438.8 481.8 L438.1 481.2 L437.4 480.6 L436.6 479.9 L435.8 479.2 L435.0 478.5 L434.2 477.7 L433.4 476.9 L432.6 476.2 L431.8 475.4 L431.0 474.6 L430.2 473.7 L429.4 472.8 L428.5 471.8 L427.6 470.9 L426.8 469.9 L425.9 468.9 L425.1 467.9 L424.4 466.9 L423.7 465.9 L423.1 464.9 L422.6 463.9 L422.1 462.9 L421.6 461.9 L421.2 460.9 L420.8 459.9 L420.5 458.9 L420.2 457.9 L419.9 456.8 L419.7 455.7 L419.5 454.6 L419.4 453.5 L419.3 452.2 L419.3 450.9 L419.4 449.6 L419.4 448.1 L419.6 446.7 L419.7 445.2 L419.8 443.6 L419.9 442.1 L420.0 440.6 L420.1 439.2 L420.3 437.7 L420.4 436.2 L420.6 434.7 L420.7 433.2 L420.9 431.7 L421.0 430.2 L421.1 428.8 L421.2 427.3 L421.2 426.0 L421.1 424.7 L421.0 423.5 L421.0 422.3 L420.8 421.1 L420.7 420.0 L420.5 418.8 L420.2 417.7 L419.9 416.5 L419.5 415.3 L419.0 414.1 L418.5 412.9 L417.9 411.7 L417.3 410.4 L416.6 409.1 L415.8 407.8 L415.0 406.5 L414.0 405.2 L413.0 403.9 L411.8 402.7 L410.5 401.6 L409.1 400.5 L407.5 399.6 L405.7 398.7 L404.0 397.9 L402.1 397.2 L400.3 396.4 L398.6 395.8 L397.0 395.1 L395.5 394.5 L394.2 393.8 L393.0 393.2 L391.9 392.5 L390.7 391.9 L389.7 391.2 L388.7 390.6 L387.8 390.0 L386.9 389.5 L386.2 389.0 L385.5 388.5 L385.0 388.2Z" fill="#e6abb3" opacity="0.55"/><path d="M384.2 389.2 L384.7 389.6 L385.3 390.1 L386.0 390.7 L386.8 391.3 L387.7 392.0 L388.6 392.7 L389.7 393.5 L390.8 394.2 L391.9 395.0 L393.2 395.7 L394.5 396.5 L396.0 397.2 L397.7 397.9 L399.4 398.7 L401.2 399.4 L402.9 400.2 L404.6 401.0 L406.2 401.9 L407.6 402.8 L408.8 403.7 L409.9 404.7 L410.9 405.7 L411.8 406.9 L412.6 408.0 L413.4 409.2 L414.0 410.5 L414.7 411.7 L415.3 412.9 L415.8 414.1 L416.3 415.3 L416.7 416.4 L417.1 417.4 L417.4 418.4 L417.6 419.4 L417.8 420.4 L417.9 421.5 L418.0 422.5 L418.1 423.6 L418.2 424.8 L418.2 426.0 L418.2 427.3 L418.2 428.6 L418.1 430.0 L418.0 431.4 L417.8 432.9 L417.7 434.4 L417.5 435.9 L417.3 437.4 L417.1 438.9 L417.0 440.3 L416.9 441.8 L416.7 443.3 L416.5 444.7 L416.3 446.2 L416.0 447.7 L415.9 449.2 L415.7 450.7 L415.6 452.2 L415.6 453.6 L415.7 455.0 L415.9 456.3 L416.1 457.6 L416.4 458.8 L416.8 460.0 L417.2 461.2 L417.6 462.4 L418.1 463.5 L418.6 464.6 L419.2 465.7 L419.9 466.8 L420.5 468.0 L421.3 469.1 L422.2 470.2 L423.0 471.3 L424.0 472.3 L424.9 473.4 L425.9 474.4 L426.8 475.3 L427.7 476.2 L428.7 477.1 L429.6 477.9 L430.5 478.7 L431.5 479.4 L432.5 480.1 L433.5 480.7 L434.4 481.3 L435.3 481.9 L436.2 482.4 L436.9 482.9 L437.6 483.4 L438.3 483.8 L438.8 484.1 L439.3 484.5 L439.7 484.7 L440.1 485.0 L440.5 485.2 L440.9 485.4 L441.3 485.7 L441.6 485.9 L442.0 486.2 L442.5 486.4 L442.9 486.7 L443.3 486.9 L443.7 487.1 L444.1 487.4 L444.5 487.6 L444.8 487.9 L445.2 488.2 L445.6 488.5 L446.1 488.9 L446.5 489.3 L447.0 489.8 L447.4 490.3 L447.9 490.8 L448.4 491.3 L448.8 491.9 L449.3 492.5 L449.8 493.1 L450.3 493.8 L450.8 494.4 L451.3 495.2 L451.8 495.9 L452.4 496.8 L452.9 497.6 L453.4 498.5 L454.0 499.4 L454.5 500.3 L455.0 501.1 L455.4 502.0 L455.9 502.9 L456.3 503.7 L456.7 504.5 L457.1 505.4 L457.4 506.2 L457.8 507.1 L458.1 507.9 L458.4 508.8 L458.8 509.6 L459.0 510.4 L459.3 511.2 L459.6 512.0 L459.9 512.8 L460.1 513.6 L460.4 514.4 L460.6 515.1 L460.8 515.9 L461.0 516.5 L461.2 517.1 L461.3 517.7 L461.4 518.1 L462.3 517.9 L462.2 517.4 L462.2 516.9 L462.1 516.3 L462.0 515.6 L461.9 514.8 L461.8 514.0 L461.6 513.2 L461.5 512.3 L461.3 511.4 L461.1 510.6 L460.9 509.8 L460.6 509.0 L460.4 508.1 L460.1 507.2 L459.9 506.3 L459.6 505.4 L459.2 504.5 L458.9 503.6 L458.5 502.7 L458.1 501.8 L457.6 500.9 L457.2 499.9 L456.6 499.0 L456.1 498.1 L455.5 497.2 L455.0 496.3 L454.4 495.4 L453.8 494.6 L453.2 493.8 L452.7 493.1 L452.1 492.4 L451.5 491.7 L451.0 491.1 L450.4 490.5 L449.8 490.0 L449.3 489.4 L448.7 489.0 L448.2 488.5 L447.6 488.1 L447.1 487.7 L446.6 487.3 L446.1 487.0 L445.6 486.7 L445.1 486.5 L444.6 486.3 L444.2 486.2 L443.8 486.0 L443.4 485.8 L442.9 485.6 L442.5 485.4 L442.1 485.1 L441.8 484.9 L441.4 484.6 L441.1 484.4 L440.7 484.1 L440.4 483.8 L440.0 483.5 L439.5 483.1 L439.0 482.7 L438.4 482.2 L437.8 481.7 L437.0 481.1 L436.3 480.5 L435.4 479.8 L434.6 479.1 L433.7 478.4 L432.8 477.7 L432.0 476.9 L431.2 476.1 L430.3 475.3 L429.5 474.4 L428.6 473.5 L427.7 472.6 L426.8 471.6 L425.9 470.6 L425.1 469.6 L424.3 468.5 L423.5 467.5 L422.8 466.5 L422.2 465.5 L421.6 464.4 L421.1 463.4 L420.6 462.4 L420.1 461.3 L419.7 460.3 L419.4 459.2 L419.1 458.2 L418.8 457.0 L418.6 455.9 L418.4 454.7 L418.3 453.5 L418.3 452.2 L418.3 450.9 L418.3 449.5 L418.5 448.0 L418.6 446.5 L418.7 445.0 L418.9 443.5 L419.0 442.0 L419.1 440.5 L419.3 439.1 L419.4 437.6 L419.6 436.1 L419.7 434.6 L419.9 433.1 L420.0 431.6 L420.2 430.2 L420.3 428.7 L420.3 427.3 L420.3 426.0 L420.3 424.7 L420.2 423.5 L420.1 422.4 L420.0 421.2 L419.8 420.1 L419.6 419.0 L419.4 417.9 L419.1 416.8 L418.7 415.6 L418.2 414.5 L417.7 413.3 L417.1 412.0 L416.5 410.8 L415.8 409.5 L415.1 408.2 L414.3 406.9 L413.4 405.7 L412.4 404.4 L411.2 403.3 L410.0 402.2 L408.6 401.2 L407.1 400.2 L405.4 399.4 L403.6 398.6 L401.9 397.8 L400.1 397.1 L398.3 396.4 L396.7 395.7 L395.2 395.0 L393.9 394.4 L392.7 393.7 L391.5 393.0 L390.4 392.3 L389.4 391.7 L388.4 391.0 L387.5 390.4 L386.7 389.8 L385.9 389.3 L385.3 388.8 L384.8 388.5Z" fill="#f2c5c8" opacity="0.9"/>
<path d="M469.1 480.7 L469.2 481.2 L469.4 481.8 L469.6 482.6 L469.8 483.5 L470.0 484.5 L470.3 485.5 L470.6 486.5 L470.9 487.5 L471.2 488.4 L471.6 489.2 L471.9 489.9 L472.3 490.6 L472.7 491.2 L473.1 491.8 L473.5 492.3 L473.9 492.8 L474.3 493.2 L474.7 493.7 L475.1 494.1 L475.6 494.5 L476.1 495.0 L476.6 495.4 L477.1 495.8 L477.7 496.2 L478.2 496.6 L478.8 496.9 L479.2 497.2 L479.7 497.4 L480.0 497.6 L480.3 497.8 L482.1 496.0 L481.9 495.7 L481.7 495.3 L481.4 494.9 L481.1 494.5 L480.8 494.0 L480.5 493.5 L480.1 492.9 L479.8 492.4 L479.5 491.9 L479.2 491.5 L478.9 491.0 L478.7 490.6 L478.4 490.1 L478.1 489.7 L477.8 489.2 L477.6 488.8 L477.3 488.3 L477.0 487.8 L476.7 487.3 L476.4 486.8 L476.1 486.2 L475.7 485.5 L475.3 484.6 L474.9 483.8 L474.4 482.9 L474.0 482.0 L473.6 481.2 L473.2 480.4 L472.9 479.8 L472.7 479.3Z" fill="#d9989f" stroke="#9e6069" stroke-width="0.9" stroke-opacity="0.55"/><path d="M469.9 480.4 L470.0 480.9 L470.2 481.5 L470.4 482.3 L470.7 483.2 L471.0 484.2 L471.3 485.1 L471.6 486.1 L471.9 487.0 L472.2 487.9 L472.6 488.7 L472.9 489.4 L473.3 490.0 L473.7 490.6 L474.0 491.1 L474.4 491.6 L474.8 492.1 L475.2 492.6 L475.6 493.0 L475.9 493.4 L476.3 493.9 L476.8 494.3 L477.3 494.8 L477.8 495.2 L478.3 495.6 L478.8 496.0 L479.3 496.4 L479.7 496.7 L480.1 497.0 L480.4 497.2 L480.7 497.4 L481.9 496.2 L481.7 496.0 L481.4 495.6 L481.1 495.2 L480.8 494.8 L480.5 494.3 L480.1 493.8 L479.7 493.3 L479.4 492.8 L479.1 492.3 L478.8 491.9 L478.4 491.4 L478.1 491.0 L477.8 490.5 L477.5 490.1 L477.3 489.6 L477.0 489.2 L476.7 488.7 L476.4 488.2 L476.1 487.7 L475.8 487.1 L475.5 486.5 L475.1 485.7 L474.7 484.9 L474.3 484.0 L473.9 483.1 L473.5 482.2 L473.1 481.4 L472.7 480.6 L472.5 480.0 L472.2 479.5Z" fill="#e6abb3" opacity="0.55"/><path d="M470.5 480.1 L470.7 480.6 L470.9 481.3 L471.2 482.1 L471.4 482.9 L471.8 483.9 L472.1 484.8 L472.4 485.8 L472.8 486.7 L473.1 487.5 L473.5 488.3 L473.8 488.9 L474.1 489.5 L474.5 490.1 L474.8 490.6 L475.2 491.1 L475.5 491.6 L475.9 492.0 L476.3 492.5 L476.6 492.9 L477.0 493.3 L477.4 493.8 L477.8 494.2 L478.3 494.7 L478.8 495.1 L479.2 495.5 L479.7 495.9 L480.1 496.3 L480.5 496.6 L480.8 496.9 L481.0 497.1 L481.6 496.5 L481.4 496.2 L481.1 495.9 L480.8 495.5 L480.5 495.1 L480.1 494.7 L479.7 494.2 L479.3 493.7 L478.9 493.2 L478.6 492.8 L478.2 492.3 L477.9 491.9 L477.6 491.4 L477.3 491.0 L477.0 490.5 L476.7 490.0 L476.3 489.6 L476.0 489.1 L475.7 488.6 L475.4 488.0 L475.1 487.4 L474.8 486.8 L474.4 486.0 L474.0 485.1 L473.6 484.2 L473.2 483.3 L472.9 482.4 L472.5 481.6 L472.2 480.8 L471.9 480.2 L471.7 479.7Z" fill="#f2c5c8" opacity="0.9"/>
<path d="M383.1 391.3 L383.6 391.5 L384.4 391.7 L385.2 392.0 L386.2 392.2 L387.2 392.5 L388.2 392.9 L389.2 393.2 L390.1 393.5 L390.9 393.9 L391.6 394.3 L392.3 394.6 L393.0 395.0 L393.6 395.3 L394.1 395.6 L394.5 395.9 L394.9 396.2 L395.1 396.5 L395.4 396.8 L395.7 397.3 L396.0 398.0 L396.2 398.8 L396.5 399.9 L396.8 401.1 L397.1 402.5 L397.3 404.0 L397.6 405.6 L397.8 407.2 L398.0 408.7 L398.2 410.2 L398.4 411.5 L398.6 412.7 L398.8 413.9 L398.9 415.0 L399.1 416.2 L399.2 417.2 L399.4 418.3 L399.5 419.3 L399.6 420.4 L399.7 421.4 L399.9 422.4 L400.0 423.3 L400.0 424.2 L400.1 425.1 L400.2 426.0 L400.2 426.9 L400.3 427.8 L400.4 428.8 L400.5 429.8 L400.7 430.8 L400.9 431.8 L401.2 432.7 L401.5 433.6 L401.8 434.6 L402.1 435.5 L402.5 436.5 L402.9 437.4 L403.4 438.4 L404.0 439.3 L404.6 440.3 L405.3 441.2 L406.1 442.0 L407.0 442.8 L407.9 443.5 L408.8 444.2 L409.8 444.8 L410.7 445.3 L411.6 445.8 L412.5 446.3 L413.2 446.7 L413.9 447.0 L414.5 447.3 L415.1 447.6 L415.6 447.9 L416.3 448.1 L417.0 448.3 L417.7 448.5 L418.4 448.5 L419.1 448.6 L419.8 448.6 L420.7 448.6 L421.7 448.5 L422.8 448.4 L424.0 448.3 L425.3 448.1 L426.6 447.9 L427.9 447.7 L429.2 447.5 L430.4 447.2 L431.6 446.9 L432.7 446.6 L433.8 446.3 L434.8 445.9 L435.7 445.5 L436.6 445.1 L437.5 444.7 L438.3 444.3 L439.0 443.9 L439.7 443.5 L440.4 443.1 L441.0 442.8 L441.5 442.6 L442.0 442.3 L442.5 442.0 L442.8 441.8 L443.1 441.6 L443.4 441.5 L443.7 441.3 L444.0 441.2 L444.3 441.1 L444.7 441.0 L445.1 441.0 L445.5 441.0 L445.9 441.0 L446.4 441.0 L446.8 441.0 L447.2 441.1 L447.7 441.2 L448.2 441.3 L448.7 441.4 L449.3 441.6 L450.1 441.7 L450.9 441.8 L451.7 442.0 L452.5 442.2 L453.3 442.3 L454.1 442.5 L454.8 442.8 L455.5 443.1 L456.0 443.3 L456.6 443.7 L457.2 444.1 L458.0 444.6 L458.7 445.2 L459.5 445.8 L460.3 446.4 L461.1 447.1 L461.8 447.8 L462.4 448.5 L463.0 449.2 L463.5 449.8 L463.9 450.5 L464.4 451.3 L464.8 452.3 L465.2 453.3 L465.6 454.4 L466.0 455.6 L466.4 456.7 L466.7 457.8 L467.0 458.8 L467.3 459.7 L467.5 460.4 L467.7 461.1 L467.8 461.6 L467.9 462.2 L468.0 462.8 L468.0 463.3 L468.1 463.9 L468.1 464.6 L468.1 465.2 L468.2 465.9 L468.2 466.5 L468.3 467.0 L468.4 467.5 L468.4 468.0 L468.5 468.4 L468.5 468.9 L468.5 469.4 L468.5 469.8 L468.6 470.3 L468.5 470.8 L468.5 471.2 L468.5 471.7 L468.4 472.1 L468.3 472.5 L468.2 472.9 L468.1 473.4 L468.0 473.9 L468.0 474.3 L467.9 474.8 L467.9 475.3 L467.8 475.7 L467.7 476.1 L467.6 476.5 L467.5 477.1 L467.4 477.8 L467.4 478.7 L467.5 479.6 L467.8 480.6 L468.3 481.6 L469.1 482.5 L469.9 483.2 L470.8 483.9 L471.7 484.4 L472.7 484.9 L473.7 485.4 L474.7 485.8 L475.8 486.2 L476.8 486.6 L477.8 486.9 L478.7 487.1 L479.7 487.4 L480.6 487.5 L481.5 487.6 L482.4 487.7 L483.3 487.7 L484.1 487.7 L485.0 487.6 L485.7 487.6 L486.5 487.5 L487.3 487.5 L488.1 487.4 L488.9 487.3 L489.7 487.2 L490.6 487.0 L491.3 486.9 L492.1 486.7 L492.8 486.5 L493.4 486.4 L493.8 486.3 L494.2 486.2 L494.2 483.6 L493.8 483.5 L493.2 483.5 L492.6 483.4 L491.9 483.3 L491.2 483.2 L490.5 483.1 L489.7 482.9 L489.0 482.8 L488.2 482.7 L487.5 482.5 L486.8 482.4 L486.1 482.2 L485.4 482.0 L484.7 481.9 L484.0 481.7 L483.3 481.5 L482.6 481.3 L482.0 481.1 L481.3 480.9 L480.7 480.7 L480.0 480.4 L479.1 480.1 L478.3 479.7 L477.4 479.4 L476.6 479.0 L475.8 478.6 L475.1 478.3 L474.4 477.9 L474.0 477.7 L473.7 477.5 L473.6 477.5 L473.5 477.5 L473.4 477.5 L473.3 477.4 L473.1 477.2 L473.0 476.9 L472.8 476.4 L472.7 475.9 L472.5 475.3 L472.3 474.7 L472.2 474.3 L472.0 473.9 L471.9 473.5 L471.7 473.2 L471.6 472.8 L471.5 472.5 L471.4 472.1 L471.3 471.7 L471.3 471.3 L471.3 470.8 L471.3 470.4 L471.3 470.0 L471.4 469.6 L471.5 469.1 L471.6 468.7 L471.7 468.2 L471.8 467.7 L472.0 467.2 L472.1 466.7 L472.2 466.1 L472.4 465.6 L472.5 465.1 L472.7 464.6 L472.9 464.0 L473.1 463.3 L473.3 462.5 L473.5 461.7 L473.6 460.7 L473.6 459.7 L473.5 458.7 L473.4 457.6 L473.3 456.5 L473.1 455.2 L472.9 453.9 L472.7 452.5 L472.4 451.1 L472.0 449.7 L471.5 448.3 L470.9 446.9 L470.1 445.6 L469.3 444.3 L468.4 443.2 L467.4 442.2 L466.3 441.2 L465.2 440.4 L464.1 439.5 L463.0 438.8 L461.9 438.2 L460.8 437.6 L459.6 437.1 L458.4 436.7 L457.1 436.5 L455.9 436.3 L454.8 436.3 L453.7 436.4 L452.7 436.5 L451.8 436.7 L450.9 436.8 L450.2 436.9 L449.5 437.0 L448.8 437.1 L448.1 437.2 L447.5 437.4 L447.0 437.5 L446.4 437.7 L445.9 437.8 L445.5 438.0 L445.0 438.1 L444.6 438.3 L444.1 438.4 L443.7 438.5 L443.2 438.6 L442.8 438.7 L442.4 438.8 L442.1 438.8 L441.7 438.9 L441.3 439.0 L440.9 439.0 L440.4 439.1 L439.8 439.2 L439.2 439.3 L438.4 439.3 L437.6 439.4 L436.8 439.5 L436.0 439.6 L435.1 439.7 L434.2 439.8 L433.3 439.8 L432.4 439.9 L431.5 440.0 L430.5 440.0 L429.4 440.1 L428.2 440.2 L427.0 440.2 L425.8 440.3 L424.5 440.3 L423.4 440.4 L422.3 440.4 L421.3 440.4 L420.5 440.4 L419.8 440.4 L419.3 440.4 L418.9 440.4 L418.7 440.4 L418.6 440.4 L418.5 440.4 L418.3 440.4 L417.9 440.3 L417.5 440.2 L416.9 440.0 L416.2 439.7 L415.4 439.5 L414.6 439.2 L413.8 438.9 L413.0 438.6 L412.3 438.3 L411.5 437.9 L410.9 437.6 L410.3 437.2 L409.9 436.8 L409.5 436.4 L409.2 435.9 L408.8 435.4 L408.5 434.8 L408.1 434.1 L407.9 433.4 L407.6 432.6 L407.3 431.8 L407.1 431.0 L406.9 430.2 L406.7 429.5 L406.5 428.8 L406.4 428.1 L406.4 427.3 L406.3 426.5 L406.3 425.6 L406.2 424.7 L406.1 423.7 L406.1 422.7 L405.9 421.6 L405.8 420.6 L405.7 419.6 L405.5 418.6 L405.4 417.5 L405.2 416.4 L405.1 415.3 L404.9 414.1 L404.7 412.9 L404.4 411.7 L404.2 410.5 L403.9 409.2 L403.7 407.8 L403.4 406.2 L403.0 404.6 L402.7 403.0 L402.3 401.4 L401.9 399.9 L401.5 398.4 L401.0 397.1 L400.4 395.8 L399.8 394.8 L399.1 393.9 L398.4 393.1 L397.6 392.5 L396.8 392.1 L396.0 391.7 L395.3 391.5 L394.6 391.2 L393.9 391.0 L393.2 390.7 L392.3 390.4 L391.2 390.1 L390.1 389.9 L389.0 389.6 L387.9 389.4 L386.9 389.2 L385.9 389.1 L385.0 388.9 L384.3 388.8 L383.7 388.7Z" fill="#d9989f" stroke="#9e6069" stroke-width="0.9" stroke-opacity="0.55"/><path d="M383.2 390.8 L383.8 390.9 L384.5 391.1 L385.3 391.3 L386.3 391.6 L387.3 391.9 L388.4 392.2 L389.4 392.5 L390.3 392.8 L391.2 393.2 L392.0 393.5 L392.7 393.9 L393.4 394.2 L394.0 394.5 L394.5 394.8 L395.0 395.1 L395.4 395.4 L395.8 395.8 L396.2 396.2 L396.5 396.8 L396.9 397.5 L397.2 398.4 L397.6 399.6 L397.9 400.9 L398.2 402.3 L398.5 403.8 L398.7 405.4 L398.9 407.0 L399.2 408.5 L399.4 410.0 L399.6 411.3 L399.8 412.5 L400.0 413.7 L400.2 414.9 L400.3 416.0 L400.5 417.1 L400.6 418.1 L400.8 419.2 L400.9 420.2 L401.0 421.2 L401.1 422.2 L401.2 423.2 L401.3 424.1 L401.4 425.0 L401.4 425.9 L401.5 426.8 L401.6 427.7 L401.7 428.6 L401.8 429.6 L402.0 430.5 L402.2 431.5 L402.4 432.4 L402.7 433.2 L403.0 434.2 L403.3 435.1 L403.7 436.0 L404.1 436.9 L404.5 437.8 L405.0 438.6 L405.6 439.5 L406.3 440.3 L407.0 441.0 L407.8 441.7 L408.7 442.3 L409.6 442.9 L410.5 443.5 L411.4 444.0 L412.2 444.4 L413.1 444.9 L413.8 445.2 L414.5 445.6 L415.1 445.8 L415.7 446.1 L416.2 446.3 L416.7 446.5 L417.3 446.7 L417.9 446.8 L418.5 446.8 L419.1 446.9 L419.8 446.9 L420.6 446.9 L421.6 446.8 L422.7 446.7 L423.9 446.6 L425.1 446.5 L426.4 446.3 L427.7 446.1 L429.0 445.9 L430.2 445.7 L431.4 445.5 L432.4 445.2 L433.5 445.0 L434.5 444.7 L435.4 444.3 L436.3 444.0 L437.2 443.6 L438.0 443.3 L438.7 442.9 L439.4 442.6 L440.1 442.3 L440.7 442.1 L441.3 441.8 L441.8 441.6 L442.2 441.4 L442.6 441.2 L442.9 441.0 L443.2 440.9 L443.5 440.8 L443.8 440.6 L444.2 440.6 L444.6 440.5 L445.0 440.4 L445.4 440.4 L445.8 440.3 L446.3 440.3 L446.7 440.3 L447.2 440.3 L447.6 440.4 L448.2 440.4 L448.7 440.5 L449.4 440.6 L450.1 440.7 L450.9 440.8 L451.7 440.9 L452.6 441.0 L453.4 441.1 L454.2 441.2 L455.1 441.4 L455.8 441.7 L456.5 442.0 L457.2 442.3 L458.0 442.7 L458.8 443.3 L459.6 443.8 L460.5 444.5 L461.3 445.2 L462.2 445.9 L462.9 446.6 L463.7 447.4 L464.3 448.2 L464.9 448.9 L465.4 449.8 L465.8 450.7 L466.3 451.7 L466.7 452.9 L467.1 454.0 L467.5 455.2 L467.8 456.4 L468.1 457.5 L468.4 458.6 L468.6 459.5 L468.8 460.3 L468.9 461.0 L469.0 461.6 L469.0 462.3 L469.0 462.9 L469.0 463.5 L469.0 464.1 L469.0 464.7 L469.0 465.3 L469.0 465.9 L469.0 466.5 L469.1 467.0 L469.1 467.5 L469.1 468.0 L469.1 468.5 L469.1 469.0 L469.1 469.4 L469.1 469.9 L469.1 470.3 L469.1 470.8 L469.1 471.2 L469.1 471.7 L469.0 472.1 L469.0 472.5 L468.9 472.9 L468.9 473.3 L468.8 473.8 L468.8 474.2 L468.8 474.7 L468.8 475.2 L468.8 475.6 L468.7 476.0 L468.7 476.5 L468.6 477.1 L468.6 477.7 L468.6 478.4 L468.7 479.1 L469.0 479.9 L469.5 480.7 L470.1 481.4 L470.8 482.1 L471.6 482.6 L472.4 483.1 L473.4 483.6 L474.3 484.1 L475.3 484.5 L476.3 484.9 L477.3 485.2 L478.2 485.5 L479.1 485.8 L480.0 486.0 L480.9 486.2 L481.8 486.3 L482.6 486.4 L483.4 486.4 L484.3 486.5 L485.0 486.5 L485.8 486.5 L486.6 486.5 L487.3 486.4 L488.1 486.4 L488.9 486.4 L489.7 486.3 L490.5 486.2 L491.3 486.1 L492.1 486.0 L492.7 485.9 L493.3 485.8 L493.8 485.7 L494.2 485.7 L494.2 483.9 L493.8 483.9 L493.2 483.8 L492.6 483.8 L492.0 483.7 L491.2 483.7 L490.5 483.6 L489.7 483.5 L488.9 483.4 L488.2 483.3 L487.5 483.2 L486.8 483.0 L486.1 482.9 L485.3 482.8 L484.6 482.6 L483.9 482.5 L483.2 482.3 L482.5 482.1 L481.8 482.0 L481.1 481.7 L480.4 481.5 L479.7 481.2 L478.8 480.9 L478.0 480.6 L477.1 480.2 L476.2 479.8 L475.4 479.4 L474.6 479.1 L474.0 478.7 L473.5 478.4 L473.1 478.2 L472.9 478.0 L472.8 477.9 L472.6 477.8 L472.5 477.6 L472.4 477.3 L472.2 476.9 L472.1 476.4 L472.0 475.9 L471.9 475.3 L471.8 474.8 L471.6 474.3 L471.5 474.0 L471.4 473.6 L471.3 473.2 L471.2 472.8 L471.1 472.5 L471.0 472.1 L471.0 471.7 L470.9 471.3 L470.9 470.8 L470.9 470.4 L471.0 470.0 L471.0 469.5 L471.1 469.1 L471.2 468.7 L471.3 468.2 L471.4 467.7 L471.5 467.2 L471.6 466.6 L471.7 466.1 L471.8 465.6 L471.9 465.0 L472.1 464.5 L472.3 463.9 L472.5 463.2 L472.6 462.5 L472.7 461.7 L472.8 460.8 L472.8 459.8 L472.7 458.8 L472.6 457.8 L472.4 456.6 L472.3 455.4 L472.0 454.1 L471.8 452.8 L471.4 451.4 L471.0 450.0 L470.5 448.7 L470.0 447.4 L469.3 446.1 L468.5 445.0 L467.6 443.9 L466.6 442.9 L465.6 442.0 L464.6 441.1 L463.5 440.4 L462.4 439.6 L461.4 439.0 L460.3 438.5 L459.2 438.0 L458.1 437.6 L456.9 437.3 L455.8 437.2 L454.7 437.1 L453.6 437.2 L452.7 437.2 L451.7 437.4 L450.9 437.5 L450.1 437.6 L449.5 437.6 L448.8 437.7 L448.1 437.8 L447.5 437.9 L447.0 438.0 L446.5 438.1 L446.0 438.2 L445.5 438.4 L445.1 438.5 L444.7 438.6 L444.2 438.7 L443.8 438.8 L443.3 438.9 L442.9 439.0 L442.6 439.1 L442.2 439.2 L441.8 439.3 L441.5 439.4 L441.0 439.5 L440.6 439.5 L440.0 439.6 L439.3 439.8 L438.6 439.9 L437.8 440.0 L437.0 440.1 L436.2 440.3 L435.3 440.4 L434.4 440.5 L433.5 440.6 L432.6 440.7 L431.7 440.8 L430.6 440.9 L429.5 441.0 L428.3 441.1 L427.1 441.2 L425.9 441.3 L424.6 441.4 L423.5 441.4 L422.4 441.5 L421.4 441.5 L420.5 441.5 L419.8 441.5 L419.3 441.5 L418.9 441.5 L418.6 441.4 L418.4 441.4 L418.2 441.4 L417.9 441.4 L417.6 441.3 L417.1 441.1 L416.5 440.9 L415.8 440.6 L415.0 440.4 L414.2 440.1 L413.4 439.7 L412.6 439.4 L411.8 439.0 L411.1 438.6 L410.4 438.2 L409.8 437.8 L409.3 437.4 L408.9 436.9 L408.5 436.4 L408.1 435.8 L407.7 435.1 L407.4 434.4 L407.1 433.6 L406.8 432.9 L406.6 432.0 L406.3 431.2 L406.1 430.4 L405.9 429.7 L405.8 428.9 L405.7 428.2 L405.6 427.4 L405.5 426.5 L405.5 425.7 L405.4 424.7 L405.4 423.8 L405.3 422.8 L405.1 421.7 L405.0 420.7 L404.9 419.7 L404.7 418.7 L404.6 417.6 L404.4 416.5 L404.3 415.4 L404.1 414.3 L403.9 413.1 L403.7 411.9 L403.4 410.6 L403.2 409.3 L402.9 407.9 L402.6 406.3 L402.3 404.8 L402.0 403.2 L401.7 401.6 L401.3 400.1 L400.9 398.6 L400.4 397.3 L399.9 396.1 L399.3 395.1 L398.6 394.3 L398.0 393.6 L397.2 393.0 L396.5 392.6 L395.8 392.2 L395.1 392.0 L394.4 391.7 L393.7 391.5 L393.0 391.2 L392.1 390.9 L391.1 390.6 L390.0 390.3 L388.9 390.0 L387.8 389.8 L386.8 389.6 L385.8 389.4 L384.9 389.3 L384.2 389.1 L383.6 389.0Z" fill="#e6abb3" opacity="0.55"/><path d="M383.3 390.3 L383.9 390.4 L384.6 390.6 L385.5 390.8 L386.4 391.1 L387.5 391.3 L388.5 391.6 L389.5 391.9 L390.5 392.2 L391.4 392.5 L392.2 392.9 L393.0 393.2 L393.6 393.5 L394.3 393.8 L394.9 394.1 L395.4 394.4 L395.9 394.7 L396.4 395.2 L396.9 395.7 L397.3 396.3 L397.7 397.1 L398.1 398.1 L398.5 399.3 L398.8 400.7 L399.1 402.1 L399.4 403.6 L399.7 405.2 L400.0 406.8 L400.2 408.3 L400.4 409.8 L400.7 411.1 L400.9 412.3 L401.1 413.5 L401.3 414.7 L401.4 415.8 L401.6 416.9 L401.7 418.0 L401.8 419.0 L402.0 420.1 L402.1 421.1 L402.2 422.1 L402.3 423.1 L402.4 424.0 L402.5 424.9 L402.5 425.8 L402.6 426.7 L402.7 427.6 L402.8 428.5 L402.9 429.4 L403.0 430.3 L403.3 431.2 L403.5 432.0 L403.8 432.9 L404.0 433.8 L404.4 434.7 L404.7 435.5 L405.1 436.4 L405.5 437.2 L406.0 438.0 L406.5 438.8 L407.1 439.5 L407.8 440.1 L408.5 440.8 L409.3 441.3 L410.2 441.9 L411.0 442.4 L411.9 442.8 L412.8 443.2 L413.6 443.6 L414.4 444.0 L415.1 444.3 L415.7 444.5 L416.2 444.8 L416.7 445.0 L417.1 445.1 L417.6 445.2 L418.1 445.3 L418.6 445.4 L419.2 445.4 L419.8 445.4 L420.6 445.4 L421.5 445.4 L422.6 445.3 L423.8 445.2 L425.0 445.1 L426.2 444.9 L427.5 444.8 L428.8 444.6 L430.0 444.4 L431.2 444.2 L432.2 444.0 L433.2 443.8 L434.2 443.6 L435.1 443.3 L436.0 443.0 L436.9 442.7 L437.7 442.4 L438.5 442.1 L439.2 441.9 L439.9 441.6 L440.5 441.4 L441.1 441.2 L441.6 441.0 L442.0 440.8 L442.4 440.7 L442.7 440.5 L443.0 440.4 L443.4 440.3 L443.7 440.2 L444.0 440.1 L444.5 440.0 L444.9 439.9 L445.3 439.8 L445.8 439.8 L446.2 439.8 L446.6 439.7 L447.1 439.7 L447.6 439.7 L448.1 439.7 L448.7 439.7 L449.4 439.8 L450.1 439.8 L450.9 439.9 L451.7 439.9 L452.6 440.0 L453.5 440.0 L454.4 440.1 L455.3 440.3 L456.1 440.5 L457.0 440.8 L457.8 441.1 L458.6 441.6 L459.5 442.1 L460.4 442.7 L461.3 443.4 L462.2 444.1 L463.1 444.8 L463.9 445.6 L464.7 446.5 L465.4 447.3 L466.1 448.2 L466.6 449.1 L467.1 450.1 L467.6 451.3 L468.0 452.5 L468.4 453.7 L468.7 454.9 L469.0 456.1 L469.3 457.3 L469.5 458.4 L469.7 459.3 L469.9 460.2 L470.0 460.9 L470.0 461.6 L470.0 462.3 L470.0 463.0 L469.9 463.6 L469.9 464.2 L469.8 464.8 L469.8 465.4 L469.8 466.0 L469.7 466.5 L469.7 467.1 L469.7 467.6 L469.7 468.1 L469.7 468.5 L469.7 469.0 L469.6 469.4 L469.6 469.9 L469.6 470.3 L469.6 470.8 L469.6 471.2 L469.6 471.7 L469.6 472.1 L469.5 472.5 L469.5 472.9 L469.5 473.3 L469.5 473.7 L469.5 474.2 L469.6 474.6 L469.6 475.1 L469.6 475.5 L469.6 476.0 L469.6 476.5 L469.6 477.0 L469.6 477.6 L469.7 478.2 L469.8 478.8 L470.0 479.4 L470.4 480.0 L470.9 480.5 L471.5 481.1 L472.2 481.5 L473.0 482.0 L473.9 482.5 L474.8 482.9 L475.8 483.3 L476.8 483.7 L477.7 484.0 L478.6 484.3 L479.5 484.6 L480.3 484.8 L481.1 485.0 L482.0 485.2 L482.8 485.3 L483.6 485.4 L484.4 485.4 L485.1 485.5 L485.9 485.5 L486.6 485.5 L487.4 485.5 L488.1 485.6 L488.9 485.5 L489.7 485.5 L490.5 485.5 L491.3 485.4 L492.0 485.4 L492.7 485.3 L493.3 485.3 L493.8 485.2 L494.2 485.2 L494.2 484.3 L493.8 484.3 L493.3 484.3 L492.7 484.2 L492.0 484.2 L491.3 484.2 L490.5 484.1 L489.7 484.1 L488.9 484.0 L488.2 483.9 L487.5 483.9 L486.7 483.8 L486.0 483.7 L485.3 483.6 L484.5 483.4 L483.8 483.3 L483.1 483.2 L482.3 483.0 L481.6 482.8 L480.9 482.6 L480.2 482.4 L479.4 482.1 L478.5 481.8 L477.6 481.5 L476.7 481.1 L475.8 480.7 L475.0 480.3 L474.2 479.9 L473.5 479.5 L472.9 479.2 L472.5 478.9 L472.2 478.6 L472.0 478.4 L471.8 478.1 L471.7 477.8 L471.6 477.4 L471.5 476.9 L471.4 476.4 L471.3 475.9 L471.2 475.4 L471.1 474.9 L471.0 474.4 L470.9 474.0 L470.8 473.6 L470.7 473.2 L470.7 472.9 L470.6 472.5 L470.6 472.1 L470.5 471.7 L470.5 471.2 L470.5 470.8 L470.5 470.4 L470.6 469.9 L470.6 469.5 L470.7 469.1 L470.7 468.6 L470.8 468.2 L470.9 467.7 L471.0 467.2 L471.1 466.6 L471.1 466.1 L471.2 465.5 L471.3 465.0 L471.5 464.4 L471.6 463.8 L471.7 463.1 L471.8 462.4 L471.9 461.7 L472.0 460.8 L471.9 459.9 L471.8 459.0 L471.7 457.9 L471.5 456.8 L471.3 455.6 L471.1 454.3 L470.8 453.0 L470.4 451.7 L470.0 450.4 L469.5 449.1 L469.0 447.9 L468.3 446.7 L467.6 445.7 L466.8 444.7 L465.9 443.7 L464.9 442.8 L463.9 442.0 L462.9 441.2 L461.9 440.5 L460.8 439.9 L459.8 439.4 L458.8 438.9 L457.8 438.5 L456.7 438.2 L455.6 438.1 L454.6 438.0 L453.6 438.0 L452.6 438.0 L451.7 438.1 L450.9 438.2 L450.1 438.2 L449.4 438.3 L448.8 438.3 L448.1 438.3 L447.6 438.4 L447.0 438.5 L446.5 438.6 L446.1 438.7 L445.6 438.8 L445.2 438.9 L444.7 439.0 L444.3 439.1 L443.8 439.2 L443.4 439.3 L443.1 439.4 L442.7 439.5 L442.4 439.6 L442.0 439.7 L441.6 439.8 L441.2 439.9 L440.7 440.0 L440.1 440.2 L439.5 440.3 L438.8 440.5 L438.0 440.6 L437.2 440.8 L436.4 441.0 L435.5 441.2 L434.6 441.3 L433.7 441.5 L432.8 441.6 L431.8 441.8 L430.8 441.9 L429.7 442.0 L428.5 442.1 L427.2 442.2 L426.0 442.4 L424.7 442.4 L423.5 442.5 L422.4 442.6 L421.4 442.6 L420.6 442.6 L419.8 442.6 L419.3 442.6 L418.8 442.6 L418.4 442.6 L418.1 442.5 L417.9 442.5 L417.6 442.4 L417.2 442.3 L416.7 442.1 L416.1 441.9 L415.4 441.6 L414.6 441.3 L413.8 441.0 L413.0 440.6 L412.2 440.3 L411.3 439.9 L410.6 439.4 L409.8 439.0 L409.2 438.5 L408.7 438.0 L408.2 437.5 L407.8 436.9 L407.3 436.2 L407.0 435.5 L406.6 434.7 L406.3 433.9 L406.0 433.1 L405.7 432.3 L405.5 431.5 L405.3 430.6 L405.1 429.9 L404.9 429.1 L404.8 428.3 L404.7 427.4 L404.7 426.6 L404.6 425.7 L404.6 424.8 L404.5 423.8 L404.4 422.8 L404.3 421.8 L404.2 420.8 L404.0 419.8 L403.9 418.8 L403.8 417.7 L403.6 416.6 L403.4 415.5 L403.3 414.4 L403.1 413.2 L402.9 412.0 L402.6 410.8 L402.4 409.4 L402.1 408.0 L401.8 406.5 L401.6 404.9 L401.3 403.3 L400.9 401.7 L400.6 400.2 L400.2 398.8 L399.7 397.5 L399.2 396.4 L398.7 395.5 L398.1 394.7 L397.5 394.0 L396.9 393.5 L396.2 393.1 L395.5 392.8 L394.8 392.5 L394.2 392.2 L393.5 392.0 L392.7 391.7 L391.9 391.4 L390.9 391.1 L389.9 390.8 L388.8 390.5 L387.7 390.3 L386.7 390.0 L385.7 389.8 L384.8 389.7 L384.1 389.5 L383.6 389.4Z" fill="#f2c5c8" opacity="0.9"/>
<path d="M388.9 381.4 L389.1 381.1 L389.4 380.6 L389.6 380.1 L390.0 379.5 L390.3 378.8 L390.7 378.1 L391.1 377.4 L391.5 376.7 L391.9 375.9 L392.3 375.2 L392.7 374.5 L393.1 373.8 L393.6 373.1 L394.0 372.3 L394.4 371.6 L394.8 370.8 L395.3 370.0 L395.9 369.1 L396.4 368.1 L397.1 367.1 L397.7 365.9 L398.4 364.7 L399.1 363.5 L399.9 362.2 L400.6 360.9 L401.4 359.5 L402.3 358.1 L403.2 356.7 L404.2 355.3 L405.2 353.9 L406.4 352.3 L407.6 350.7 L409.0 348.9 L410.4 347.2 L411.9 345.4 L413.4 343.6 L414.9 341.8 L416.4 340.0 L417.9 338.3 L419.4 336.7 L420.9 335.1 L422.4 333.6 L423.9 332.0 L425.4 330.5 L426.9 329.0 L428.3 327.6 L429.8 326.2 L431.3 325.0 L432.8 323.8 L434.2 322.7 L435.7 321.7 L437.3 320.6 L438.8 319.7 L440.4 318.8 L441.9 317.9 L443.5 317.1 L445.0 316.4 L446.5 315.8 L447.9 315.3 L449.2 314.8 L450.5 314.5 L451.8 314.2 L453.2 314.0 L454.5 313.8 L455.9 313.7 L457.3 313.7 L458.6 313.7 L459.9 313.8 L461.0 313.9 L462.0 314.1 L462.9 314.3 L463.6 314.5 L464.4 314.8 L465.1 315.2 L465.8 315.6 L466.5 316.1 L467.1 316.6 L467.8 317.2 L468.4 317.9 L468.9 318.5 L469.3 319.1 L469.7 319.8 L470.0 320.5 L470.3 321.3 L470.6 322.2 L470.8 323.0 L471.0 324.0 L471.1 324.9 L471.2 325.8 L471.2 326.7 L471.2 327.6 L471.2 328.5 L471.1 329.4 L471.0 330.3 L470.9 331.1 L470.7 332.0 L470.4 332.9 L470.1 333.8 L469.7 334.7 L469.3 335.7 L468.7 336.7 L468.1 337.8 L467.5 338.9 L466.8 340.0 L466.0 341.1 L465.2 342.2 L464.3 343.3 L463.3 344.4 L462.2 345.5 L461.1 346.6 L459.8 347.7 L458.3 348.8 L456.8 350.0 L455.1 351.2 L453.4 352.3 L451.6 353.5 L449.7 354.7 L447.8 355.9 L445.9 357.1 L444.1 358.3 L442.2 359.6 L440.2 360.8 L438.2 362.0 L436.2 363.3 L434.1 364.5 L432.1 365.8 L430.0 367.0 L428.0 368.1 L426.0 369.2 L424.1 370.3 L422.2 371.3 L420.3 372.3 L418.4 373.3 L416.5 374.2 L414.6 375.1 L412.7 376.0 L410.9 376.9 L409.2 377.6 L407.5 378.4 L406.0 379.1 L404.7 379.7 L403.5 380.2 L402.3 380.7 L401.3 381.2 L400.3 381.6 L399.4 381.9 L398.5 382.3 L397.6 382.6 L396.8 382.9 L395.9 383.3 L395.1 383.6 L394.3 383.9 L393.5 384.1 L392.7 384.4 L391.9 384.6 L391.2 384.8 L390.6 385.0 L390.0 385.2 L389.5 385.3 L389.1 385.4 L389.7 387.8 L390.1 387.7 L390.5 387.7 L391.1 387.6 L391.8 387.5 L392.5 387.4 L393.3 387.3 L394.2 387.2 L395.1 387.1 L396.0 386.9 L396.9 386.7 L397.8 386.6 L398.7 386.4 L399.6 386.2 L400.6 386.0 L401.6 385.8 L402.7 385.6 L403.9 385.3 L405.1 385.0 L406.5 384.6 L408.0 384.1 L409.6 383.6 L411.3 383.1 L413.1 382.5 L415.0 381.8 L417.0 381.1 L419.1 380.4 L421.2 379.6 L423.3 378.8 L425.4 377.9 L427.5 376.9 L429.5 375.9 L431.7 374.8 L433.8 373.7 L435.9 372.5 L438.1 371.3 L440.2 370.0 L442.3 368.7 L444.4 367.4 L446.4 366.1 L448.3 364.9 L450.2 363.6 L452.1 362.3 L454.0 360.9 L455.8 359.5 L457.6 358.2 L459.3 356.8 L461.0 355.4 L462.6 354.0 L464.1 352.6 L465.5 351.2 L466.8 349.8 L468.0 348.5 L469.1 347.1 L470.0 345.7 L470.9 344.4 L471.7 343.1 L472.5 341.8 L473.1 340.5 L473.8 339.3 L474.3 338.1 L474.9 336.9 L475.3 335.7 L475.7 334.5 L476.0 333.4 L476.3 332.2 L476.5 331.1 L476.6 330.0 L476.7 328.9 L476.8 327.8 L476.8 326.7 L476.8 325.6 L476.7 324.4 L476.7 323.3 L476.5 322.1 L476.3 320.9 L476.1 319.7 L475.7 318.5 L475.4 317.4 L474.9 316.2 L474.3 315.1 L473.7 314.1 L473.1 313.1 L472.4 312.0 L471.6 311.0 L470.7 310.0 L469.7 309.1 L468.6 308.1 L467.4 307.3 L466.0 306.5 L464.6 305.9 L463.1 305.4 L461.5 304.9 L459.9 304.5 L458.2 304.2 L456.4 303.9 L454.5 303.8 L452.6 303.7 L450.6 303.8 L448.6 304.0 L446.6 304.4 L444.6 304.9 L442.7 305.5 L440.7 306.2 L438.8 307.0 L436.9 307.9 L434.9 308.9 L433.0 310.0 L431.2 311.2 L429.4 312.4 L427.6 313.7 L425.8 315.1 L424.1 316.6 L422.4 318.1 L420.7 319.7 L419.1 321.4 L417.6 323.1 L416.0 324.8 L414.5 326.5 L413.1 328.3 L411.6 330.1 L410.2 331.9 L408.7 333.9 L407.3 335.9 L405.9 337.9 L404.5 340.0 L403.2 342.0 L401.9 344.0 L400.7 346.0 L399.6 347.9 L398.6 349.7 L397.7 351.5 L396.8 353.3 L396.1 355.0 L395.5 356.6 L394.9 358.2 L394.3 359.7 L393.9 361.1 L393.4 362.5 L393.0 363.7 L392.5 364.9 L392.1 366.0 L391.7 367.1 L391.3 368.1 L391.0 369.0 L390.7 369.9 L390.4 370.7 L390.1 371.5 L389.8 372.3 L389.5 373.0 L389.3 373.8 L389.0 374.6 L388.7 375.4 L388.4 376.2 L388.1 377.0 L387.9 377.7 L387.6 378.4 L387.4 379.1 L387.2 379.7 L387.0 380.2 L386.9 380.6Z" fill="#d9989f" stroke="#9e6069" stroke-width="0.9" stroke-opacity="0.55"/><path d="M388.5 381.3 L388.7 380.9 L388.9 380.4 L389.2 379.9 L389.5 379.3 L389.8 378.6 L390.2 377.9 L390.5 377.2 L390.9 376.4 L391.3 375.7 L391.7 374.9 L392.1 374.2 L392.4 373.5 L392.8 372.7 L393.2 372.0 L393.6 371.2 L394.0 370.4 L394.5 369.6 L395.0 368.7 L395.5 367.7 L396.1 366.6 L396.7 365.5 L397.4 364.2 L398.0 363.0 L398.7 361.7 L399.4 360.3 L400.2 358.9 L401.0 357.5 L401.9 356.0 L402.8 354.5 L403.8 353.0 L404.9 351.4 L406.2 349.7 L407.5 347.9 L408.9 346.1 L410.3 344.2 L411.8 342.4 L413.3 340.5 L414.8 338.7 L416.3 337.0 L417.7 335.3 L419.2 333.7 L420.7 332.1 L422.2 330.5 L423.7 328.9 L425.2 327.4 L426.7 325.9 L428.3 324.5 L429.8 323.2 L431.3 322.0 L432.8 320.8 L434.4 319.7 L436.0 318.7 L437.6 317.6 L439.2 316.7 L440.9 315.8 L442.5 315.0 L444.1 314.3 L445.7 313.6 L447.2 313.1 L448.7 312.6 L450.1 312.3 L451.5 312.0 L453.0 311.8 L454.5 311.7 L456.0 311.7 L457.5 311.7 L458.9 311.8 L460.2 311.9 L461.4 312.1 L462.6 312.4 L463.5 312.7 L464.4 313.0 L465.3 313.4 L466.1 313.9 L466.8 314.4 L467.6 315.0 L468.2 315.7 L468.9 316.3 L469.5 317.1 L470.0 317.8 L470.5 318.5 L470.9 319.3 L471.2 320.1 L471.5 321.0 L471.8 321.9 L472.0 322.8 L472.2 323.8 L472.3 324.8 L472.3 325.8 L472.4 326.7 L472.4 327.7 L472.4 328.6 L472.3 329.5 L472.2 330.4 L472.0 331.4 L471.8 332.3 L471.5 333.2 L471.2 334.2 L470.8 335.2 L470.3 336.2 L469.8 337.3 L469.2 338.4 L468.5 339.5 L467.8 340.6 L467.1 341.8 L466.2 342.9 L465.3 344.1 L464.3 345.2 L463.2 346.4 L462.0 347.6 L460.7 348.7 L459.2 349.9 L457.7 351.1 L456.0 352.3 L454.3 353.6 L452.5 354.8 L450.6 356.0 L448.7 357.3 L446.8 358.5 L445.0 359.7 L443.1 360.9 L441.1 362.2 L439.1 363.4 L437.0 364.7 L435.0 365.9 L432.9 367.2 L430.8 368.4 L428.8 369.5 L426.8 370.6 L424.8 371.7 L422.9 372.7 L420.9 373.7 L419.0 374.6 L417.0 375.5 L415.1 376.4 L413.2 377.2 L411.3 378.0 L409.6 378.8 L408.0 379.5 L406.4 380.1 L405.1 380.7 L403.8 381.2 L402.7 381.7 L401.6 382.1 L400.6 382.5 L399.6 382.8 L398.7 383.1 L397.9 383.4 L397.0 383.7 L396.1 384.0 L395.3 384.3 L394.4 384.5 L393.6 384.8 L392.8 385.0 L392.1 385.2 L391.4 385.4 L390.7 385.5 L390.1 385.7 L389.7 385.8 L389.3 385.9 L389.6 387.5 L390.0 387.4 L390.5 387.3 L391.1 387.3 L391.7 387.2 L392.5 387.1 L393.2 386.9 L394.1 386.8 L395.0 386.6 L395.8 386.5 L396.8 386.3 L397.7 386.1 L398.5 385.9 L399.5 385.7 L400.4 385.5 L401.4 385.3 L402.5 385.0 L403.7 384.7 L404.9 384.4 L406.3 383.9 L407.7 383.5 L409.3 382.9 L411.0 382.4 L412.8 381.7 L414.7 381.1 L416.7 380.4 L418.7 379.6 L420.8 378.8 L422.9 377.9 L425.0 377.0 L427.0 376.0 L429.1 375.0 L431.2 373.9 L433.3 372.8 L435.4 371.6 L437.6 370.4 L439.7 369.1 L441.8 367.9 L443.9 366.6 L445.9 365.3 L447.8 364.0 L449.7 362.7 L451.5 361.4 L453.4 360.1 L455.3 358.8 L457.1 357.4 L458.8 356.0 L460.5 354.7 L462.1 353.3 L463.6 351.9 L464.9 350.6 L466.2 349.3 L467.4 347.9 L468.4 346.6 L469.4 345.3 L470.3 344.0 L471.1 342.7 L471.8 341.4 L472.5 340.2 L473.1 339.0 L473.7 337.8 L474.2 336.6 L474.6 335.4 L475.0 334.3 L475.3 333.2 L475.6 332.1 L475.8 331.0 L475.9 329.9 L476.0 328.8 L476.1 327.7 L476.1 326.7 L476.1 325.6 L476.0 324.5 L475.9 323.4 L475.8 322.2 L475.6 321.1 L475.3 319.9 L475.0 318.8 L474.6 317.7 L474.2 316.6 L473.6 315.5 L473.0 314.6 L472.4 313.6 L471.7 312.6 L470.9 311.7 L470.1 310.7 L469.1 309.9 L468.1 309.0 L466.9 308.2 L465.6 307.5 L464.2 307.0 L462.8 306.5 L461.3 306.1 L459.7 305.7 L458.1 305.4 L456.3 305.2 L454.5 305.1 L452.6 305.1 L450.7 305.2 L448.8 305.4 L446.9 305.7 L445.1 306.2 L443.2 306.8 L441.3 307.5 L439.4 308.3 L437.5 309.2 L435.6 310.2 L433.8 311.3 L432.0 312.4 L430.2 313.6 L428.4 314.9 L426.7 316.2 L425.0 317.6 L423.3 319.2 L421.7 320.7 L420.1 322.4 L418.6 324.0 L417.0 325.7 L415.5 327.5 L414.1 329.2 L412.6 330.9 L411.2 332.8 L409.7 334.7 L408.3 336.6 L406.9 338.6 L405.5 340.7 L404.1 342.7 L402.8 344.7 L401.6 346.6 L400.5 348.5 L399.5 350.3 L398.5 352.0 L397.7 353.7 L396.9 355.4 L396.2 357.0 L395.6 358.5 L395.1 360.0 L394.5 361.4 L394.1 362.8 L393.6 364.0 L393.1 365.2 L392.7 366.3 L392.3 367.4 L391.9 368.3 L391.5 369.2 L391.2 370.1 L390.8 370.9 L390.5 371.7 L390.2 372.5 L390.0 373.2 L389.7 374.0 L389.4 374.8 L389.1 375.6 L388.8 376.4 L388.5 377.1 L388.2 377.9 L387.9 378.6 L387.7 379.2 L387.5 379.8 L387.3 380.3 L387.2 380.7Z" fill="#e6abb3" opacity="0.55"/><path d="M388.1 381.1 L388.3 380.7 L388.5 380.3 L388.8 379.7 L389.1 379.1 L389.4 378.4 L389.7 377.7 L390.1 376.9 L390.4 376.2 L390.8 375.4 L391.1 374.7 L391.5 373.9 L391.8 373.2 L392.2 372.5 L392.6 371.7 L392.9 370.9 L393.3 370.1 L393.8 369.2 L394.2 368.3 L394.7 367.3 L395.3 366.2 L395.9 365.1 L396.5 363.8 L397.1 362.5 L397.7 361.2 L398.4 359.8 L399.1 358.4 L399.9 356.9 L400.7 355.4 L401.6 353.8 L402.6 352.3 L403.7 350.6 L404.9 348.9 L406.2 347.0 L407.6 345.2 L409.0 343.3 L410.4 341.4 L411.9 339.5 L413.4 337.6 L414.9 335.8 L416.4 334.1 L417.8 332.5 L419.3 330.8 L420.8 329.2 L422.3 327.6 L423.8 326.0 L425.4 324.5 L426.9 323.1 L428.5 321.7 L430.1 320.4 L431.6 319.2 L433.2 318.0 L434.9 317.0 L436.6 315.9 L438.3 314.9 L440.0 314.0 L441.7 313.2 L443.3 312.4 L445.0 311.8 L446.6 311.2 L448.2 310.8 L449.7 310.4 L451.3 310.1 L452.9 310.0 L454.5 309.9 L456.1 309.9 L457.6 310.0 L459.1 310.1 L460.5 310.3 L461.8 310.6 L463.0 310.9 L464.1 311.3 L465.1 311.7 L466.0 312.2 L466.9 312.8 L467.7 313.4 L468.5 314.1 L469.2 314.8 L469.8 315.6 L470.5 316.4 L471.0 317.2 L471.5 318.0 L471.9 318.8 L472.3 319.8 L472.6 320.7 L472.8 321.7 L473.0 322.7 L473.2 323.7 L473.3 324.7 L473.4 325.7 L473.4 326.7 L473.4 327.7 L473.3 328.7 L473.3 329.6 L473.2 330.6 L473.0 331.6 L472.8 332.5 L472.5 333.5 L472.1 334.5 L471.7 335.6 L471.2 336.6 L470.7 337.7 L470.1 338.9 L469.4 340.0 L468.7 341.2 L467.9 342.4 L467.1 343.6 L466.2 344.8 L465.1 346.0 L464.0 347.2 L462.8 348.4 L461.5 349.6 L460.0 350.8 L458.4 352.1 L456.8 353.3 L455.0 354.6 L453.2 355.9 L451.4 357.1 L449.5 358.4 L447.6 359.6 L445.7 360.9 L443.8 362.1 L441.8 363.4 L439.8 364.6 L437.8 365.9 L435.7 367.2 L433.6 368.4 L431.5 369.6 L429.4 370.7 L427.4 371.8 L425.4 372.9 L423.5 373.9 L421.5 374.8 L419.5 375.7 L417.5 376.6 L415.5 377.5 L413.6 378.3 L411.7 379.0 L410.0 379.8 L408.3 380.4 L406.8 381.0 L405.4 381.6 L404.1 382.1 L402.9 382.5 L401.8 382.9 L400.8 383.2 L399.9 383.5 L398.9 383.8 L398.0 384.1 L397.2 384.4 L396.3 384.6 L395.4 384.9 L394.6 385.1 L393.7 385.3 L392.9 385.5 L392.2 385.7 L391.5 385.9 L390.8 386.0 L390.2 386.1 L389.7 386.2 L389.3 386.3 L389.5 387.1 L389.9 387.1 L390.4 387.0 L391.0 386.9 L391.7 386.8 L392.4 386.7 L393.2 386.5 L394.0 386.4 L394.8 386.2 L395.7 386.0 L396.6 385.8 L397.5 385.6 L398.4 385.4 L399.3 385.2 L400.3 384.9 L401.3 384.7 L402.3 384.4 L403.5 384.1 L404.7 383.7 L406.0 383.3 L407.4 382.8 L409.0 382.2 L410.7 381.6 L412.5 381.0 L414.4 380.3 L416.4 379.5 L418.4 378.7 L420.4 377.9 L422.5 377.0 L424.5 376.1 L426.6 375.1 L428.6 374.1 L430.7 373.0 L432.8 371.9 L434.9 370.7 L437.0 369.4 L439.1 368.2 L441.2 366.9 L443.3 365.6 L445.3 364.4 L447.2 363.1 L449.1 361.8 L450.9 360.5 L452.8 359.2 L454.7 357.9 L456.5 356.6 L458.2 355.2 L459.9 353.9 L461.5 352.6 L463.0 351.3 L464.3 350.0 L465.6 348.7 L466.7 347.4 L467.8 346.1 L468.7 344.8 L469.6 343.5 L470.4 342.2 L471.1 341.0 L471.8 339.8 L472.4 338.6 L473.0 337.5 L473.5 336.3 L473.9 335.2 L474.3 334.1 L474.6 333.0 L474.8 331.9 L475.0 330.9 L475.1 329.8 L475.2 328.8 L475.3 327.7 L475.3 326.7 L475.3 325.6 L475.2 324.5 L475.1 323.5 L475.0 322.3 L474.8 321.2 L474.5 320.2 L474.2 319.1 L473.8 318.0 L473.4 317.0 L472.8 316.0 L472.3 315.1 L471.7 314.2 L471.0 313.3 L470.2 312.4 L469.4 311.5 L468.5 310.7 L467.5 309.9 L466.4 309.2 L465.2 308.6 L463.9 308.1 L462.5 307.7 L461.1 307.3 L459.6 307.0 L457.9 306.8 L456.2 306.6 L454.5 306.5 L452.7 306.5 L450.9 306.6 L449.1 306.8 L447.3 307.2 L445.5 307.7 L443.7 308.3 L441.9 309.0 L440.1 309.7 L438.2 310.6 L436.4 311.6 L434.6 312.6 L432.8 313.7 L431.1 314.9 L429.4 316.1 L427.7 317.4 L426.0 318.8 L424.4 320.3 L422.8 321.8 L421.2 323.4 L419.7 325.1 L418.1 326.7 L416.6 328.4 L415.2 330.1 L413.7 331.9 L412.3 333.7 L410.8 335.5 L409.3 337.5 L407.9 339.4 L406.5 341.4 L405.1 343.4 L403.8 345.4 L402.6 347.3 L401.4 349.1 L400.4 350.8 L399.4 352.5 L398.6 354.2 L397.8 355.8 L397.1 357.4 L396.4 358.9 L395.8 360.4 L395.3 361.8 L394.8 363.1 L394.3 364.3 L393.8 365.5 L393.3 366.6 L392.8 367.6 L392.4 368.6 L392.0 369.5 L391.7 370.3 L391.3 371.1 L391.0 371.9 L390.7 372.7 L390.4 373.4 L390.1 374.2 L389.8 374.9 L389.4 375.7 L389.1 376.5 L388.8 377.3 L388.5 378.0 L388.3 378.7 L388.0 379.4 L387.8 379.9 L387.6 380.4 L387.4 380.8Z" fill="#f2c5c8" opacity="0.9"/>
<path d="M389.1 386.5 L389.4 386.3 L389.8 386.1 L390.2 385.9 L390.7 385.6 L391.3 385.3 L392.0 384.9 L392.8 384.4 L393.6 383.8 L394.6 383.2 L395.7 382.4 L396.9 381.5 L398.2 380.5 L399.6 379.4 L401.1 378.2 L402.7 376.9 L404.4 375.6 L406.0 374.3 L407.7 373.0 L409.4 371.8 L411.0 370.5 L412.7 369.3 L414.4 368.1 L416.1 366.8 L417.9 365.5 L419.6 364.3 L421.4 363.0 L423.2 361.8 L425.0 360.6 L426.7 359.5 L428.5 358.4 L430.3 357.3 L432.1 356.2 L434.0 355.1 L435.8 354.0 L437.7 353.0 L439.5 352.0 L441.3 351.1 L443.0 350.2 L444.7 349.5 L446.4 348.8 L448.1 348.3 L449.9 347.7 L451.7 347.2 L453.5 346.8 L455.2 346.4 L457.0 346.1 L458.6 345.8 L460.2 345.6 L461.7 345.5 L463.1 345.5 L464.3 345.5 L465.6 345.6 L466.9 345.8 L468.2 346.1 L469.4 346.4 L470.7 346.8 L471.9 347.2 L473.0 347.7 L474.1 348.2 L475.1 348.6 L475.9 349.1 L476.6 349.5 L477.2 350.0 L477.8 350.5 L478.4 351.0 L478.8 351.6 L479.3 352.2 L479.7 352.9 L480.0 353.5 L480.3 354.2 L480.5 354.9 L480.7 355.7 L480.8 356.4 L480.9 357.2 L480.9 358.0 L480.8 358.9 L480.7 359.7 L480.6 360.6 L480.4 361.5 L480.1 362.4 L479.8 363.3 L479.5 364.3 L479.0 365.3 L478.5 366.4 L477.9 367.5 L477.3 368.6 L476.7 369.6 L476.0 370.7 L475.2 371.7 L474.4 372.6 L473.6 373.6 L472.7 374.5 L471.8 375.4 L470.8 376.3 L469.9 377.2 L468.8 378.0 L467.8 378.7 L466.7 379.5 L465.5 380.1 L464.2 380.7 L462.9 381.3 L461.4 381.9 L459.8 382.4 L458.2 382.8 L456.5 383.3 L454.7 383.7 L452.9 384.0 L451.1 384.4 L449.2 384.7 L447.3 384.9 L445.3 385.2 L443.1 385.3 L440.9 385.5 L438.5 385.6 L436.0 385.7 L433.6 385.7 L431.1 385.7 L428.7 385.8 L426.4 385.8 L424.2 385.8 L422.1 385.8 L420.1 385.8 L418.1 385.8 L416.1 385.8 L414.2 385.8 L412.3 385.7 L410.5 385.7 L408.7 385.7 L407.1 385.6 L405.6 385.6 L404.2 385.6 L402.9 385.6 L401.8 385.6 L400.8 385.7 L399.8 385.7 L398.9 385.7 L398.0 385.7 L397.2 385.8 L396.4 385.8 L395.5 385.8 L394.7 385.8 L393.9 385.9 L393.1 385.9 L392.3 385.9 L391.6 386.0 L391.0 386.0 L390.3 386.0 L389.8 386.1 L389.3 386.1 L389.0 386.1 L388.8 388.7 L389.2 388.8 L389.7 388.8 L390.2 388.9 L390.8 389.0 L391.4 389.1 L392.1 389.3 L392.9 389.4 L393.7 389.5 L394.5 389.7 L395.3 389.8 L396.1 389.9 L396.9 390.1 L397.7 390.2 L398.5 390.4 L399.4 390.6 L400.3 390.7 L401.4 390.9 L402.5 391.1 L403.7 391.3 L405.0 391.6 L406.5 391.9 L408.0 392.2 L409.7 392.5 L411.5 392.9 L413.4 393.2 L415.3 393.6 L417.4 393.9 L419.5 394.3 L421.6 394.6 L423.8 394.8 L426.0 395.0 L428.3 395.2 L430.8 395.4 L433.3 395.6 L435.9 395.8 L438.5 395.9 L441.1 396.0 L443.6 396.0 L446.1 395.9 L448.5 395.7 L450.8 395.3 L453.1 394.9 L455.2 394.4 L457.3 393.9 L459.4 393.2 L461.4 392.5 L463.3 391.8 L465.1 391.0 L466.9 390.2 L468.6 389.3 L470.2 388.3 L471.8 387.3 L473.2 386.2 L474.6 385.1 L475.9 383.9 L477.1 382.8 L478.2 381.6 L479.2 380.4 L480.2 379.2 L481.2 378.0 L482.1 376.7 L483.0 375.4 L483.8 374.0 L484.6 372.7 L485.3 371.3 L486.0 369.9 L486.5 368.5 L487.1 367.1 L487.5 365.8 L487.9 364.4 L488.1 363.1 L488.3 361.8 L488.5 360.5 L488.5 359.2 L488.5 357.9 L488.4 356.6 L488.2 355.4 L488.0 354.1 L487.7 352.9 L487.3 351.8 L486.9 350.6 L486.4 349.5 L485.9 348.4 L485.3 347.3 L484.6 346.3 L483.8 345.2 L482.9 344.2 L481.9 343.2 L480.9 342.2 L479.7 341.4 L478.5 340.6 L477.2 339.7 L475.9 338.9 L474.4 338.1 L472.8 337.4 L471.1 336.6 L469.4 336.0 L467.5 335.5 L465.5 335.1 L463.5 334.9 L461.5 334.8 L459.5 334.9 L457.4 335.1 L455.3 335.3 L453.1 335.7 L451.0 336.1 L448.9 336.7 L446.8 337.3 L444.7 338.0 L442.6 338.8 L440.5 339.6 L438.4 340.6 L436.4 341.7 L434.4 342.8 L432.4 344.0 L430.5 345.3 L428.6 346.5 L426.7 347.8 L424.9 349.1 L423.1 350.4 L421.3 351.8 L419.5 353.2 L417.7 354.6 L416.0 356.1 L414.3 357.6 L412.6 359.1 L411.0 360.6 L409.4 362.1 L407.9 363.6 L406.4 365.1 L404.8 366.6 L403.3 368.2 L401.8 369.8 L400.4 371.4 L399.0 373.0 L397.6 374.5 L396.4 376.0 L395.2 377.3 L394.1 378.5 L393.1 379.6 L392.3 380.5 L391.5 381.2 L390.8 381.9 L390.2 382.5 L389.7 383.0 L389.2 383.4 L388.8 383.8 L388.4 384.1 L388.1 384.4 L387.7 384.7Z" fill="#d9989f" stroke="#9e6069" stroke-width="0.9" stroke-opacity="0.55"/><path d="M388.8 386.1 L389.1 385.9 L389.5 385.7 L389.9 385.4 L390.4 385.1 L391.0 384.8 L391.6 384.4 L392.4 383.9 L393.2 383.3 L394.1 382.6 L395.1 381.8 L396.3 380.9 L397.6 379.8 L398.9 378.7 L400.4 377.4 L401.9 376.1 L403.5 374.7 L405.2 373.4 L406.8 372.0 L408.4 370.7 L410.1 369.4 L411.7 368.1 L413.4 366.8 L415.1 365.5 L416.8 364.2 L418.5 362.9 L420.3 361.6 L422.0 360.3 L423.8 359.1 L425.6 357.9 L427.4 356.7 L429.2 355.6 L431.0 354.4 L432.9 353.3 L434.7 352.2 L436.6 351.1 L438.4 350.1 L440.2 349.1 L442.1 348.2 L443.9 347.4 L445.6 346.7 L447.4 346.1 L449.2 345.5 L451.1 345.0 L453.0 344.5 L454.8 344.1 L456.6 343.8 L458.4 343.6 L460.1 343.4 L461.7 343.3 L463.2 343.3 L464.6 343.3 L466.0 343.5 L467.4 343.8 L468.8 344.1 L470.1 344.5 L471.5 345.0 L472.7 345.5 L473.9 346.0 L475.1 346.6 L476.1 347.1 L476.9 347.6 L477.7 348.2 L478.4 348.8 L479.1 349.4 L479.7 350.0 L480.2 350.7 L480.7 351.4 L481.1 352.2 L481.5 352.9 L481.8 353.7 L482.0 354.5 L482.2 355.3 L482.4 356.2 L482.5 357.1 L482.5 358.0 L482.5 358.9 L482.4 359.9 L482.2 360.8 L482.0 361.8 L481.8 362.8 L481.4 363.8 L481.0 364.9 L480.6 366.0 L480.1 367.2 L479.5 368.3 L478.9 369.4 L478.2 370.6 L477.4 371.7 L476.7 372.7 L475.9 373.7 L475.0 374.7 L474.1 375.8 L473.1 376.7 L472.1 377.7 L471.1 378.6 L470.0 379.5 L468.9 380.3 L467.7 381.1 L466.5 381.8 L465.1 382.5 L463.7 383.2 L462.2 383.8 L460.5 384.3 L458.9 384.9 L457.1 385.4 L455.3 385.8 L453.4 386.2 L451.5 386.6 L449.5 386.9 L447.5 387.2 L445.5 387.4 L443.2 387.6 L440.9 387.7 L438.5 387.8 L436.0 387.8 L433.5 387.8 L431.1 387.8 L428.6 387.7 L426.3 387.7 L424.1 387.7 L422.0 387.7 L420.0 387.6 L417.9 387.5 L415.9 387.4 L414.0 387.3 L412.1 387.2 L410.3 387.1 L408.6 387.0 L407.0 386.9 L405.5 386.9 L404.1 386.8 L402.8 386.8 L401.7 386.7 L400.7 386.7 L399.7 386.7 L398.8 386.7 L397.9 386.7 L397.1 386.7 L396.3 386.7 L395.5 386.6 L394.7 386.6 L393.8 386.6 L393.1 386.6 L392.3 386.6 L391.6 386.6 L390.9 386.6 L390.3 386.6 L389.8 386.6 L389.3 386.6 L388.9 386.6 L388.8 388.4 L389.2 388.4 L389.7 388.5 L390.2 388.5 L390.8 388.6 L391.5 388.7 L392.2 388.8 L392.9 388.9 L393.7 389.0 L394.5 389.2 L395.3 389.3 L396.1 389.4 L396.9 389.5 L397.7 389.7 L398.6 389.8 L399.4 389.9 L400.4 390.1 L401.4 390.2 L402.5 390.4 L403.8 390.6 L405.1 390.8 L406.6 391.0 L408.1 391.3 L409.8 391.6 L411.6 391.9 L413.5 392.3 L415.4 392.6 L417.5 392.9 L419.6 393.2 L421.7 393.4 L423.8 393.6 L426.1 393.8 L428.4 394.0 L430.8 394.2 L433.3 394.4 L435.9 394.5 L438.5 394.6 L441.0 394.6 L443.6 394.6 L446.0 394.5 L448.4 394.3 L450.6 394.0 L452.8 393.6 L454.9 393.1 L457.0 392.5 L459.0 391.9 L460.9 391.3 L462.8 390.6 L464.6 389.8 L466.3 389.0 L468.0 388.2 L469.6 387.3 L471.1 386.3 L472.5 385.3 L473.9 384.2 L475.1 383.1 L476.3 381.9 L477.4 380.8 L478.4 379.6 L479.3 378.5 L480.3 377.3 L481.2 376.1 L482.1 374.8 L482.9 373.5 L483.6 372.1 L484.3 370.8 L485.0 369.4 L485.6 368.1 L486.1 366.8 L486.5 365.5 L486.9 364.2 L487.1 362.9 L487.3 361.6 L487.5 360.4 L487.5 359.1 L487.5 357.9 L487.4 356.7 L487.2 355.5 L487.0 354.3 L486.7 353.2 L486.4 352.1 L486.0 351.0 L485.5 350.0 L485.0 348.9 L484.4 347.9 L483.8 346.9 L483.0 345.9 L482.2 344.9 L481.2 344.0 L480.2 343.1 L479.1 342.3 L477.9 341.5 L476.7 340.8 L475.4 340.0 L473.9 339.2 L472.4 338.5 L470.8 337.9 L469.0 337.3 L467.2 336.8 L465.4 336.5 L463.5 336.3 L461.5 336.2 L459.6 336.3 L457.5 336.5 L455.5 336.7 L453.4 337.1 L451.3 337.5 L449.2 338.0 L447.2 338.6 L445.1 339.3 L443.1 340.1 L441.0 340.9 L439.0 341.9 L437.0 342.9 L435.0 344.0 L433.1 345.2 L431.2 346.4 L429.3 347.6 L427.4 348.9 L425.6 350.2 L423.8 351.5 L422.0 352.8 L420.2 354.2 L418.5 355.6 L416.7 357.0 L415.0 358.5 L413.3 359.9 L411.7 361.4 L410.1 362.9 L408.5 364.3 L407.0 365.8 L405.4 367.3 L403.9 368.8 L402.4 370.4 L400.9 371.9 L399.5 373.5 L398.1 375.0 L396.8 376.4 L395.6 377.7 L394.5 378.9 L393.5 379.9 L392.6 380.8 L391.8 381.6 L391.1 382.2 L390.5 382.8 L389.9 383.3 L389.4 383.7 L389.0 384.1 L388.6 384.4 L388.2 384.7 L387.9 384.9Z" fill="#e6abb3" opacity="0.55"/><path d="M388.5 385.8 L388.9 385.6 L389.2 385.3 L389.7 385.1 L390.1 384.7 L390.7 384.4 L391.3 383.9 L392.0 383.4 L392.8 382.8 L393.7 382.1 L394.7 381.3 L395.8 380.4 L397.0 379.3 L398.3 378.1 L399.8 376.8 L401.3 375.4 L402.8 374.0 L404.4 372.5 L406.0 371.1 L407.6 369.7 L409.2 368.4 L410.8 367.1 L412.5 365.7 L414.1 364.4 L415.8 363.0 L417.6 361.7 L419.3 360.3 L421.1 359.0 L422.8 357.7 L424.6 356.5 L426.4 355.3 L428.2 354.1 L430.0 352.9 L431.9 351.7 L433.7 350.6 L435.6 349.5 L437.5 348.4 L439.4 347.4 L441.2 346.5 L443.1 345.6 L444.9 344.9 L446.8 344.2 L448.7 343.6 L450.6 343.1 L452.5 342.6 L454.4 342.2 L456.3 341.9 L458.1 341.6 L459.9 341.5 L461.6 341.4 L463.3 341.4 L464.8 341.5 L466.3 341.7 L467.8 342.0 L469.3 342.4 L470.8 342.9 L472.1 343.4 L473.4 344.0 L474.7 344.6 L475.8 345.2 L476.9 345.8 L477.8 346.4 L478.7 347.1 L479.5 347.7 L480.2 348.4 L480.8 349.2 L481.3 349.9 L481.9 350.7 L482.3 351.6 L482.7 352.4 L483.0 353.3 L483.3 354.2 L483.5 355.1 L483.7 356.0 L483.8 357.0 L483.9 358.0 L483.8 359.0 L483.8 360.0 L483.6 361.1 L483.4 362.1 L483.2 363.2 L482.8 364.3 L482.4 365.4 L481.9 366.6 L481.4 367.8 L480.8 369.0 L480.2 370.2 L479.5 371.4 L478.7 372.5 L477.9 373.6 L477.1 374.7 L476.2 375.8 L475.2 376.8 L474.3 377.8 L473.3 378.8 L472.2 379.8 L471.1 380.8 L469.9 381.7 L468.7 382.5 L467.3 383.3 L465.9 384.1 L464.4 384.8 L462.8 385.4 L461.2 386.0 L459.4 386.6 L457.6 387.2 L455.7 387.7 L453.8 388.1 L451.8 388.5 L449.8 388.8 L447.8 389.1 L445.6 389.3 L443.3 389.5 L440.9 389.6 L438.5 389.6 L436.0 389.6 L433.5 389.6 L431.0 389.5 L428.6 389.5 L426.2 389.4 L424.0 389.3 L421.9 389.2 L419.9 389.1 L417.8 389.0 L415.8 388.8 L413.9 388.7 L412.0 388.5 L410.2 388.3 L408.5 388.2 L406.9 388.1 L405.4 387.9 L404.0 387.9 L402.8 387.8 L401.6 387.7 L400.6 387.6 L399.6 387.6 L398.7 387.5 L397.9 387.5 L397.1 387.4 L396.2 387.4 L395.4 387.4 L394.6 387.3 L393.8 387.3 L393.0 387.3 L392.3 387.2 L391.6 387.2 L390.9 387.2 L390.3 387.2 L389.7 387.1 L389.3 387.1 L388.9 387.1 L388.9 388.0 L389.2 388.0 L389.7 388.1 L390.2 388.1 L390.8 388.2 L391.5 388.3 L392.2 388.4 L392.9 388.4 L393.7 388.5 L394.5 388.6 L395.3 388.7 L396.1 388.8 L396.9 388.9 L397.8 389.0 L398.6 389.1 L399.5 389.2 L400.4 389.4 L401.5 389.5 L402.6 389.6 L403.8 389.8 L405.2 390.0 L406.6 390.2 L408.2 390.4 L409.9 390.7 L411.7 390.9 L413.6 391.2 L415.5 391.5 L417.6 391.8 L419.6 392.0 L421.8 392.2 L423.9 392.4 L426.1 392.5 L428.4 392.7 L430.9 392.8 L433.4 393.0 L435.9 393.1 L438.5 393.1 L441.0 393.2 L443.5 393.1 L445.9 393.0 L448.2 392.8 L450.4 392.5 L452.5 392.1 L454.6 391.6 L456.6 391.1 L458.6 390.5 L460.5 389.9 L462.3 389.2 L464.1 388.5 L465.8 387.8 L467.4 387.0 L468.9 386.1 L470.4 385.2 L471.8 384.2 L473.1 383.2 L474.3 382.1 L475.4 381.0 L476.5 379.9 L477.5 378.8 L478.4 377.7 L479.3 376.5 L480.2 375.4 L481.1 374.1 L481.9 372.9 L482.6 371.6 L483.3 370.3 L483.9 369.0 L484.5 367.7 L485.0 366.4 L485.4 365.1 L485.8 363.9 L486.1 362.7 L486.3 361.5 L486.4 360.3 L486.4 359.1 L486.4 357.9 L486.4 356.8 L486.2 355.6 L486.0 354.5 L485.7 353.5 L485.4 352.4 L485.0 351.4 L484.6 350.4 L484.1 349.5 L483.5 348.5 L482.9 347.6 L482.2 346.6 L481.4 345.7 L480.5 344.9 L479.5 344.1 L478.5 343.3 L477.3 342.6 L476.1 341.9 L474.8 341.2 L473.4 340.5 L471.9 339.8 L470.3 339.2 L468.7 338.7 L467.0 338.2 L465.2 337.9 L463.4 337.8 L461.6 337.7 L459.7 337.8 L457.7 338.0 L455.7 338.2 L453.7 338.6 L451.7 339.0 L449.6 339.5 L447.6 340.1 L445.6 340.8 L443.6 341.5 L441.6 342.3 L439.7 343.2 L437.7 344.2 L435.8 345.3 L433.8 346.4 L431.9 347.6 L430.0 348.8 L428.2 350.1 L426.4 351.3 L424.6 352.6 L422.8 353.9 L421.0 355.2 L419.2 356.6 L417.5 358.0 L415.8 359.4 L414.1 360.8 L412.4 362.3 L410.8 363.7 L409.2 365.1 L407.6 366.5 L406.1 368.0 L404.5 369.5 L403.0 371.0 L401.5 372.5 L400.0 374.0 L398.6 375.5 L397.2 376.9 L396.0 378.2 L394.8 379.3 L393.8 380.3 L392.9 381.2 L392.1 381.9 L391.4 382.6 L390.7 383.1 L390.1 383.6 L389.6 384.0 L389.2 384.4 L388.8 384.7 L388.4 384.9 L388.1 385.2Z" fill="#f2c5c8" opacity="0.9"/>
<g transform="translate(384.8 386.8) rotate(-43)"><ellipse rx="12.6" ry="8.6" fill="#d9989f"/><ellipse rx="9.6" ry="4.2" cy="-0.8" fill="#f2c5c8" opacity="0.8"/><ellipse rx="11.6" ry="7.6" fill="none" stroke="#9e6069" stroke-width="1" opacity="0.3"/></g>
</g>
</svg>
<div class="t title" style="left:8.5px;top:6.08px;">Production Worksheet</div>
<div class="t " style="left:7.6px;top:24.15px;">Wilcom EmbroideryStudio &ndash; Level 3 Advanced</div>
<div class="t " style="left:7.6px;top:69.35px;">Design:</div>
<div class="t " style="left:64.5px;top:69.35px;">BeautifullCrossRibbon4_8</div>
<div class="t " style="left:7.6px;top:85.05px;">Colorway:</div>
<div class="t " style="left:64.5px;top:85.05px;">Colorway 1</div>
<div class="t " style="left:897.8px;top:1.05px;">Stitches:</div>
<div class="t " style="left:948.6px;top:1.05px;">10692</div>
<div class="t " style="left:897.8px;top:17.05px;">Colors:</div>
<div class="t " style="left:948.6px;top:17.05px;">3</div>
<div class="t " style="left:897.8px;top:33.05px;">Height:</div>
<div class="t " style="left:948.6px;top:33.05px;">4.81 in</div>
<div class="t " style="left:897.8px;top:49.05px;">Width:</div>
<div class="t " style="left:948.6px;top:49.05px;">3.90 in</div>
<div class="t " style="left:897.8px;top:65.05px;">Zoom:</div>
<div class="t " style="left:948.6px;top:65.05px;">1:1</div>
<div class="t " style="left:762.4px;top:101.15px;">Machine:</div>
<div class="t " style="left:846.2px;top:101.15px;">Tajima</div>
<div class="t " style="left:762.4px;top:116.96px;">Color changes:</div>
<div class="t " style="left:846.2px;top:116.96px;">3</div>
<div class="t " style="left:762.4px;top:132.77px;">Stops:</div>
<div class="t " style="left:846.2px;top:132.77px;">4</div>
<div class="t " style="left:762.4px;top:148.58px;">Trims:</div>
<div class="t " style="left:846.2px;top:148.58px;">6</div>
<div class="t " style="left:762.4px;top:164.39px;">Left:</div>
<div class="t " style="left:846.2px;top:164.39px;">49.6 mm</div>
<div class="t " style="left:762.4px;top:180.20px;">Right:</div>
<div class="t " style="left:846.2px;top:180.20px;">49.6 mm</div>
<div class="t " style="left:762.4px;top:196.01px;">Up:</div>
<div class="t " style="left:846.2px;top:196.01px;">61.1 mm</div>
<div class="t " style="left:762.4px;top:211.82px;">Down:</div>
<div class="t " style="left:846.2px;top:211.82px;">61.1 mm</div>
<div class="t " style="left:762.4px;top:227.63px;">EndX:</div>
<div class="t " style="left:846.2px;top:227.63px;">0.00 in</div>
<div class="t " style="left:762.4px;top:243.44px;">EndY:</div>
<div class="t " style="left:846.2px;top:243.44px;">0.00 in</div>
<div class="t " style="left:762.4px;top:259.25px;">Max Stitch:</div>
<div class="t " style="left:846.2px;top:259.25px;">6.3 mm</div>
<div class="t " style="left:762.4px;top:275.06px;">Min Stitch:</div>
<div class="t " style="left:846.2px;top:275.06px;">0.2 mm</div>
<div class="t " style="left:762.4px;top:290.87px;">Max Jump:</div>
<div class="t " style="left:846.2px;top:290.87px;">6.5 mm</div>
<div class="t " style="left:762.4px;top:306.68px;">Total Bobbin:</div>
<div class="t " style="left:846.2px;top:306.68px;">60.71ft</div>
<div class="t " style="left:762.4px;top:322.45px;">Stop Sequence:</div>
<div class="t b u" style="left:762.4px;top:339.35px;">#</div>
<div class="t b u" style="left:778.2px;top:339.35px;">N#</div>
<div class="t r b u" style="left:635.4px;top:339.35px;">St.</div>
<div class="t b u" style="left:841.2px;top:339.35px;">Description</div>
<div class="t r b u" style="left:738.8px;top:339.35px;">Code</div>
<div class="t b u" style="left:945.0px;top:339.35px;">Brand</div>
<div class="t " style="left:762.4px;top:354.45px;">1.</div>
<div class="t " style="left:779.0px;top:354.45px;">1</div>
<div class="sw" style="left:796px;top:358.0px;background:#f3dc8f"></div>
<div class="t r " style="left:635.4px;top:354.45px;">118</div>
<div class="t " style="left:841.2px;top:354.45px;">Yellow</div>
<div class="t r " style="left:738.8px;top:354.45px;">4</div>
<div class="t " style="left:945.0px;top:354.45px;">Wilcom</div>
<div class="t " style="left:762.4px;top:370.23px;">2.</div>
<div class="t " style="left:779.0px;top:370.23px;">3</div>
<div class="sw" style="left:796px;top:373.8px;background:#ffffff"></div>
<div class="t r " style="left:635.4px;top:370.23px;">4568</div>
<div class="t " style="left:841.2px;top:370.23px;">White</div>
<div class="t r " style="left:738.8px;top:370.23px;">15</div>
<div class="t " style="left:945.0px;top:370.23px;">Wilcom</div>
<div class="t " style="left:762.4px;top:386.01px;">3.</div>
<div class="t " style="left:779.0px;top:386.01px;">1</div>
<div class="sw" style="left:796px;top:389.6px;background:#e3dd93"></div>
<div class="t r " style="left:635.4px;top:386.01px;">2741</div>
<div class="t " style="left:841.2px;top:386.01px;">Yellow</div>
<div class="t r " style="left:738.8px;top:386.01px;">4</div>
<div class="t " style="left:945.0px;top:386.01px;">Wilcom</div>
<div class="t " style="left:762.4px;top:401.79px;">4.</div>
<div class="t " style="left:779.0px;top:401.79px;">2</div>
<div class="sw" style="left:796px;top:405.3px;background:#f291ad"></div>
<div class="t r " style="left:635.4px;top:401.79px;">3263</div>
<div class="t " style="left:841.2px;top:401.79px;">Magenta</div>
<div class="t r " style="left:738.8px;top:401.79px;">7</div>
<div class="t " style="left:945.0px;top:401.79px;">Wilcom</div>
<div class="t " style="left:7.0px;top:741.75px;">Created By:</div>
<div class="t " style="left:237.0px;top:741.75px;">Last Saved: 1/16/2026 3:30:24 PM</div>
<div class="t " style="left:581.5px;top:741.75px;">Printed: 1/16/2026 3:30:30 PM</div>
<div class="t r " style="left:782.1px;top:741.75px;">Page 1 of 1</div>
</body></html>
